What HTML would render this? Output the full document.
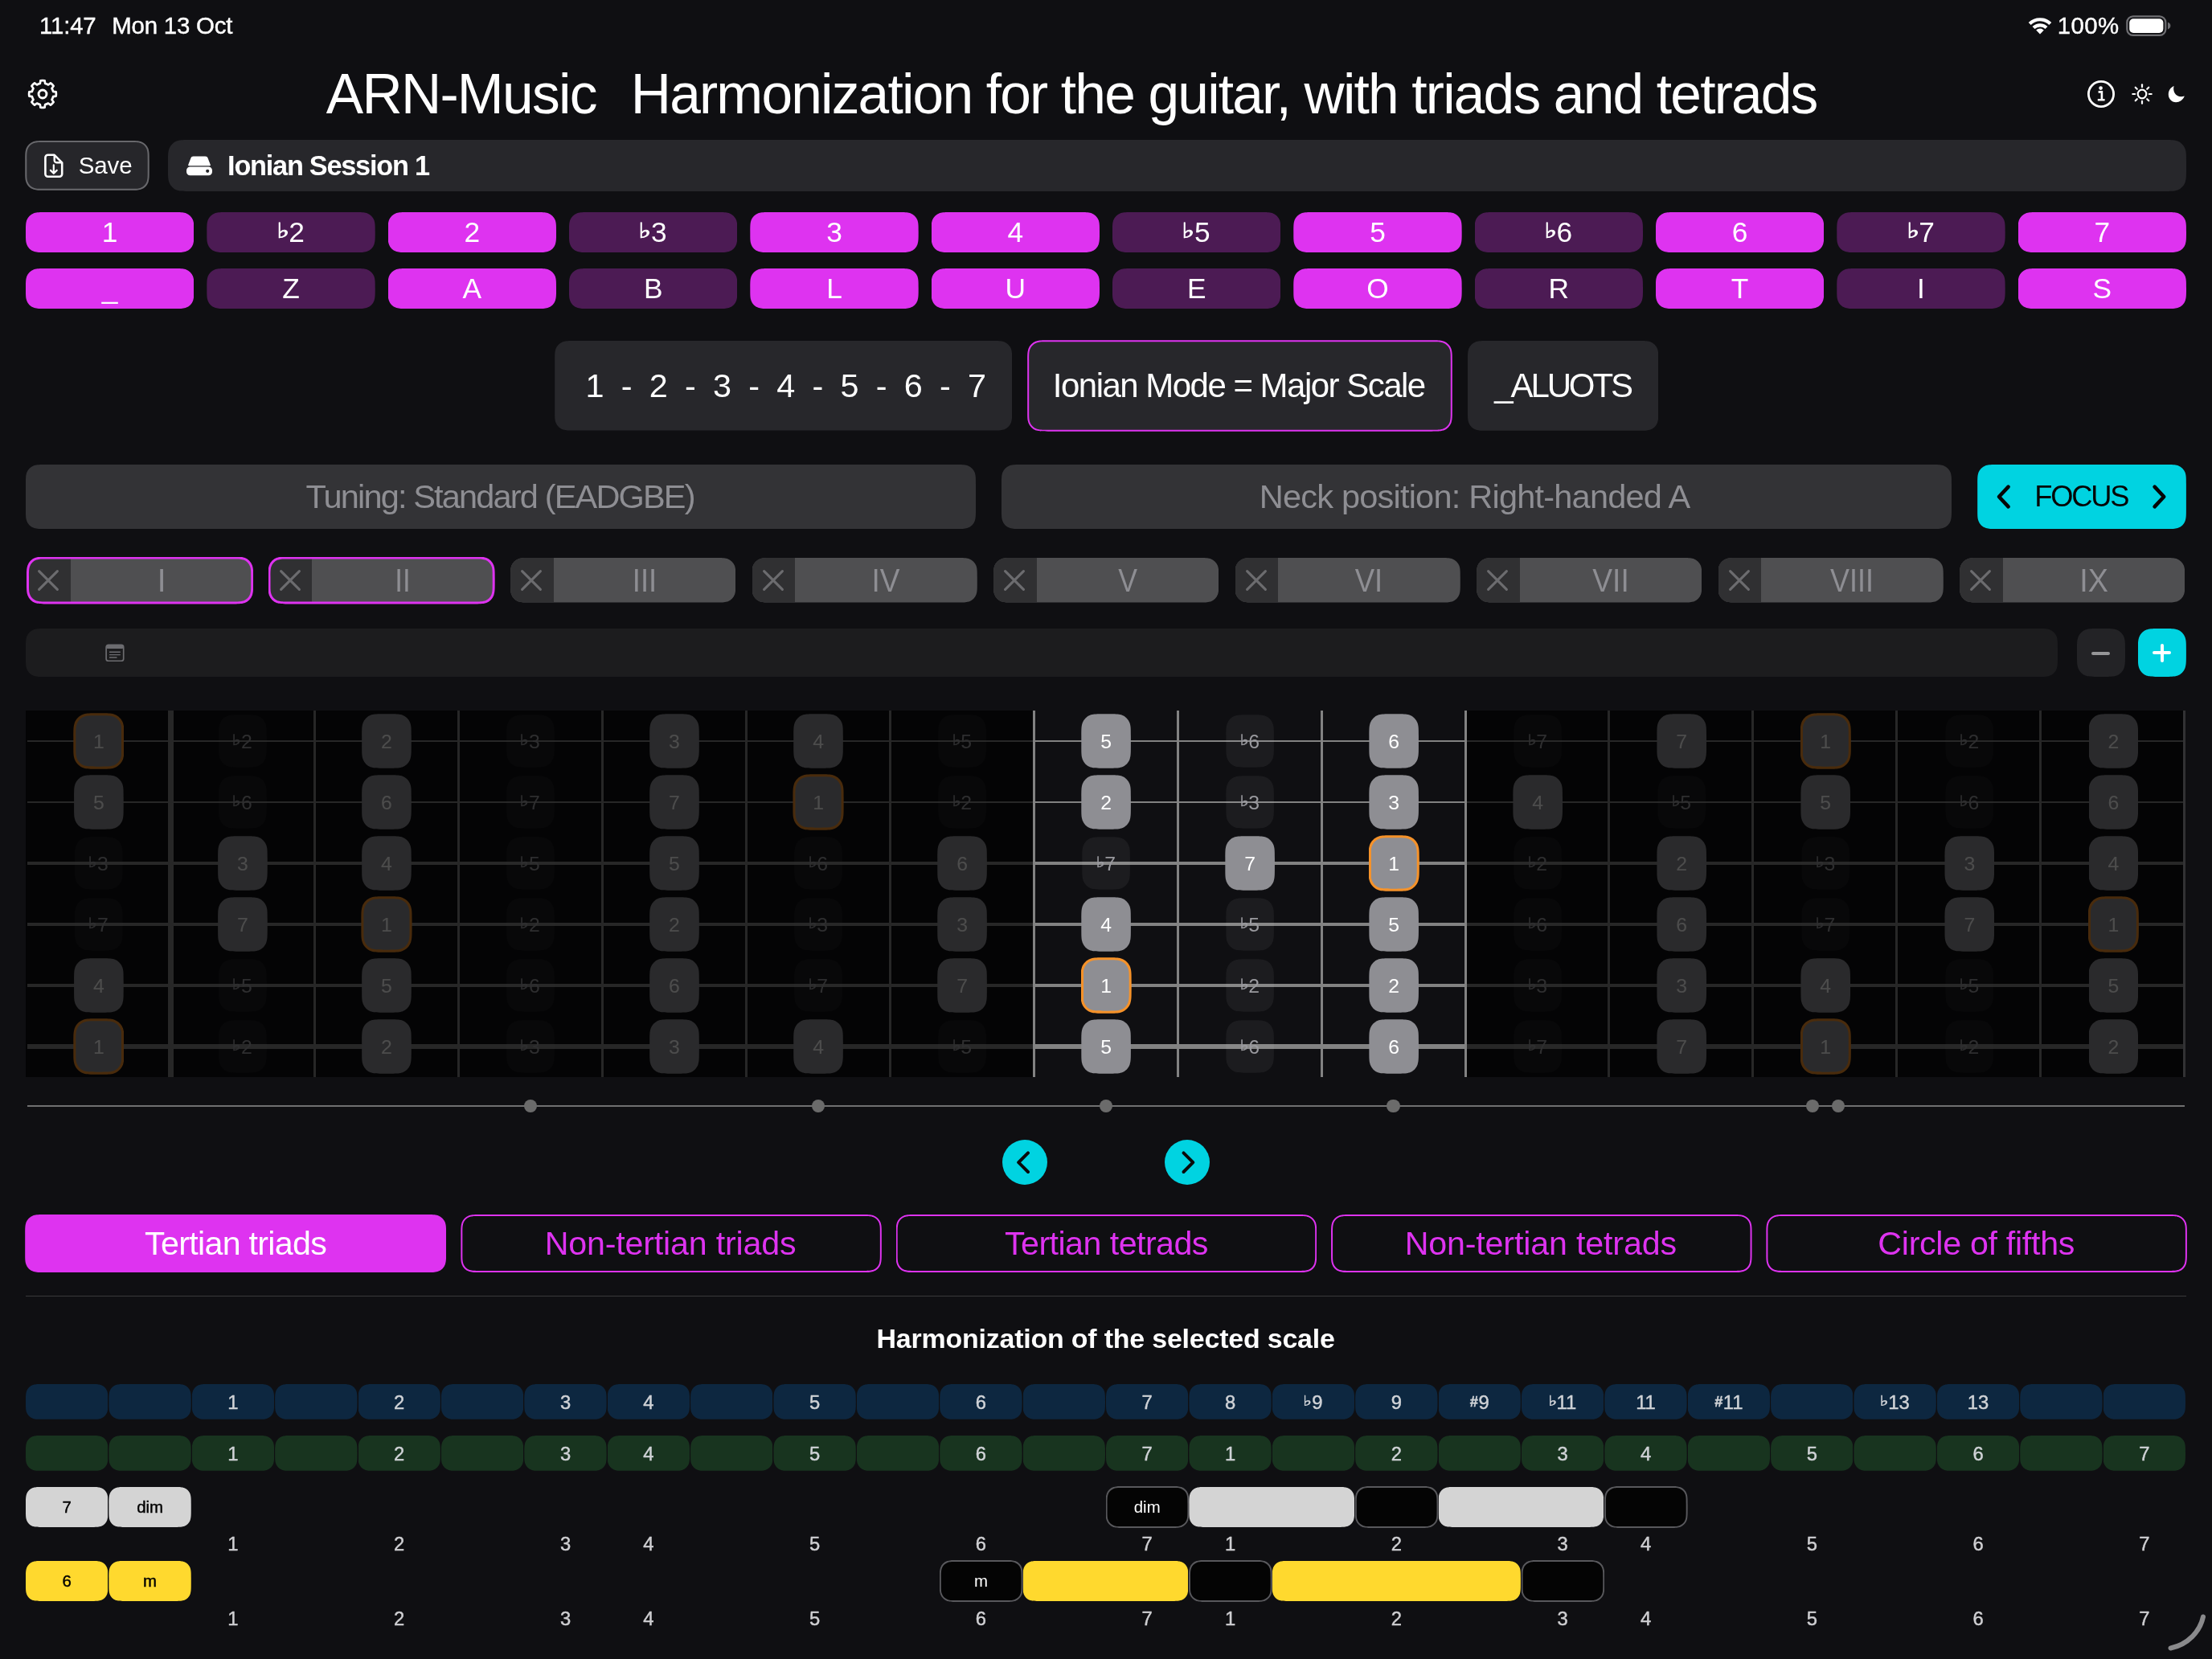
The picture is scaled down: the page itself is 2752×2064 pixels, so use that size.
<!DOCTYPE html>
<html lang="en"><head><meta charset="utf-8"><title>ARN-Music Harmonization for the guitar</title>
<style>
html,body{margin:0;padding:0;background:#0f0f12;}
body{width:2752px;height:2064px;position:relative;overflow:hidden;font-family:"Liberation Sans", "DejaVu Sans", sans-serif;}
div,svg,.t,button{position:absolute;box-sizing:border-box;}
button{padding:0;margin:0;border:0;font:inherit;}
.t{line-height:0;white-space:pre;margin:0;font-weight:400;}
.n1{width:61.6px;height:67.6px;background:#8e8e93;clip-path:path('M27.52 0.00 L34.08 0.00 C42.01 0.00 45.97 0.00 49.54 1.18 L50.23 1.35 C54.89 3.04 58.56 6.71 60.25 11.37 L60.42 12.06 C61.60 15.63 61.60 19.59 61.60 27.52 L61.60 40.08 C61.60 48.01 61.60 51.97 60.42 55.54 L60.25 56.23 C58.56 60.89 54.89 64.56 50.23 66.25 L49.54 66.42 C45.97 67.60 42.01 67.60 34.08 67.60 L27.52 67.60 C19.59 67.60 15.63 67.60 12.06 66.42 L11.37 66.25 C6.71 64.56 3.04 60.89 1.35 56.23 L1.18 55.54 C0.00 51.97 0.00 48.01 0.00 40.08 L0.00 27.52 C0.00 19.59 0.00 15.63 1.18 12.06 L1.35 11.37 C3.04 6.71 6.71 3.04 11.37 1.35 L12.06 1.18 C15.63 0.00 19.59 0.00 27.52 0.00 Z');}
.n0{width:63.2px;height:69.4px;background:#f5922a;clip-path:path('M29.35 0.00 L33.85 0.00 C42.30 0.00 46.53 0.00 50.34 1.26 L51.08 1.44 C56.04 3.25 59.95 7.16 61.76 12.12 L61.94 12.86 C63.20 16.67 63.20 20.90 63.20 29.35 L63.20 40.05 C63.20 48.50 63.20 52.73 61.94 56.54 L61.76 57.28 C59.95 62.24 56.04 66.15 51.08 67.96 L50.34 68.14 C46.53 69.40 42.30 69.40 33.85 69.40 L29.35 69.40 C20.90 69.40 16.67 69.40 12.86 68.14 L12.12 67.96 C7.16 66.15 3.25 62.24 1.44 57.28 L1.26 56.54 C0.00 52.73 0.00 48.50 0.00 40.05 L0.00 29.35 C0.00 20.90 0.00 16.67 1.26 12.86 L1.44 12.12 C3.25 7.16 7.16 3.25 12.12 1.44 L12.86 1.26 C16.67 0.00 20.90 0.00 29.35 0.00 Z');}
.n0 i{position:absolute;left:3px;top:3px;width:57.2px;height:63.4px;background:#8e8e93;clip-path:path('M25.38 0.00 L31.82 0.00 C39.13 0.00 42.78 0.00 46.08 1.09 L46.72 1.24 C51.01 2.81 54.39 6.19 55.96 10.48 L56.11 11.12 C57.20 14.42 57.20 18.07 57.20 25.38 L57.20 38.02 C57.20 45.33 57.20 48.98 56.11 52.28 L55.96 52.92 C54.39 57.21 51.01 60.59 46.72 62.16 L46.08 62.31 C42.78 63.40 39.13 63.40 31.82 63.40 L25.38 63.40 C18.07 63.40 14.42 63.40 11.12 62.31 L10.48 62.16 C6.19 60.59 2.81 57.21 1.24 52.92 L1.09 52.28 C0.00 48.98 0.00 45.33 0.00 38.02 L0.00 25.38 C0.00 18.07 0.00 14.42 1.09 11.12 L1.24 10.48 C2.81 6.19 6.19 2.81 10.48 1.24 L11.12 1.09 C14.42 0.00 18.07 0.00 25.38 0.00 Z');}
.n2{width:59.6px;height:65.4px;background:rgba(255,255,255,0.055);clip-path:path('M26.90 0.00 L32.70 0.00 C40.44 0.00 44.32 0.00 47.81 1.15 L48.49 1.32 C53.04 2.98 56.62 6.56 58.28 11.11 L58.45 11.79 C59.60 15.28 59.60 19.16 59.60 26.90 L59.60 38.50 C59.60 46.24 59.60 50.12 58.45 53.61 L58.28 54.29 C56.62 58.84 53.04 62.42 48.49 64.08 L47.81 64.25 C44.32 65.40 40.44 65.40 32.70 65.40 L26.90 65.40 C19.16 65.40 15.28 65.40 11.79 64.25 L11.11 64.08 C6.56 62.42 2.98 58.84 1.32 54.29 L1.15 53.61 C0.00 50.12 0.00 46.24 0.00 38.50 L0.00 26.90 C0.00 19.16 0.00 15.28 1.15 11.79 L1.32 11.11 C2.98 6.56 6.56 2.98 11.11 1.32 L11.79 1.15 C15.28 0.00 19.16 0.00 26.90 0.00 Z');}
.fl{font-family:"DejaVu Sans",sans-serif;display:inline-block;position:relative;transform-origin:50% 50%;}
#app{left:0;top:0;width:2752px;height:2064px;will-change:transform;}
</style></head><body><div id="app">
<header>
<span class="t" style="top:31.81px;font-size:29.4px;color:#fff;letter-spacing:-0.164px;-webkit-text-stroke:0.4px #fff;left:48.96px;">11:47</span>
<span class="t" style="top:31.81px;font-size:29.4px;color:#fff;letter-spacing:-0.199px;-webkit-text-stroke:0.4px #fff;left:139.29px;">Mon 13 Oct</span>
<span class="t" style="top:31.81px;font-size:29.4px;color:#fff;letter-spacing:0.372px;-webkit-text-stroke:0.4px #fff;left:2559.76px;">100%</span>
<svg style="left:2522.00px;top:20.00px;" width="32" height="24" viewBox="0 0 32 24"><g fill="none" stroke="#fff" stroke-linecap="butt">
<path d="M3.2 9.6 A18 18 0 0 1 28.8 9.6" stroke-width="4.2"/>
<path d="M8 14.6 A11.3 11.3 0 0 1 24 14.6" stroke-width="4.2"/></g>
<path d="M16 22.4 L11.2 17.6 A6.8 6.8 0 0 1 20.8 17.6 Z" fill="#fff"/></svg>
<svg style="left:2644.00px;top:18.00px;" width="58" height="28" viewBox="0 0 58 28"><rect x="2.3" y="2.3" width="48" height="23.6" rx="7.5" fill="none" stroke="#6f6f73" stroke-width="2.2"/>
<rect x="5.2" y="5.2" width="42.2" height="17.8" rx="5" fill="#fff"/>
<path d="M53 9.8 C55.6 10.6 56.4 12.2 56.4 14.1 C56.4 16 55.6 17.6 53 18.4 Z" fill="#6f6f73"/></svg>
</header>
<svg style="left:32.00px;top:96.10px;" width="42" height="42" viewBox="0 0 42 42"><path d="M17.85 7.87 L18.41 4.30 A16.9 16.9 0 0 1 23.59 4.30 L24.15 7.87 A13.5 13.5 0 0 1 28.05 9.49 L30.98 7.36 A16.9 16.9 0 0 1 34.64 11.02 L32.51 13.95 A13.5 13.5 0 0 1 34.13 17.85 L37.70 18.41 A16.9 16.9 0 0 1 37.70 23.59 L34.13 24.15 A13.5 13.5 0 0 1 32.51 28.05 L34.64 30.98 A16.9 16.9 0 0 1 30.98 34.64 L28.05 32.51 A13.5 13.5 0 0 1 24.15 34.13 L23.59 37.70 A16.9 16.9 0 0 1 18.41 37.70 L17.85 34.13 A13.5 13.5 0 0 1 13.95 32.51 L11.02 34.64 A16.9 16.9 0 0 1 7.36 30.98 L9.49 28.05 A13.5 13.5 0 0 1 7.87 24.15 L4.30 23.59 A16.9 16.9 0 0 1 4.30 18.41 L7.87 17.85 A13.5 13.5 0 0 1 9.49 13.95 L7.36 11.02 A16.9 16.9 0 0 1 11.02 7.36 L13.95 9.49 A13.5 13.5 0 0 1 17.85 7.87 Z" fill="none" stroke="#fff" stroke-width="2.7" stroke-linejoin="round"/><circle cx="21" cy="21" r="4.95" fill="none" stroke="#fff" stroke-width="2.9"/></svg>
<h1 class="t" style="top:116.82px;font-size:69.5px;color:#fff;letter-spacing:-1.701px;left:405.76px;">ARN-Music</h1>
<h1 class="t" style="top:116.82px;font-size:69.5px;color:#fff;letter-spacing:-1.821px;left:784.80px;">Harmonization for the guitar, with triads and tetrads</h1>
<svg style="left:2594.00px;top:97.00px;" width="40" height="40" viewBox="0 0 40 40"><circle cx="20" cy="20" r="15.6" fill="none" stroke="#fff" stroke-width="2.8"/>
<circle cx="19.6" cy="12.6" r="2.3" fill="#fff"/>
<path d="M16.6 17.4 H20.9 V27 M15.8 27.2 H24.6" fill="none" stroke="#fff" stroke-width="2.6"/></svg>
<svg style="left:2649.50px;top:102.20px;" width="30" height="30" viewBox="0 0 30 30"><circle cx="15" cy="15" r="5.3" fill="none" stroke="#fff" stroke-width="2.2"/><g stroke="#fff" stroke-width="2.2" stroke-linecap="round"><line x1="23.80" y1="15.00" x2="26.70" y2="15.00"/><line x1="21.22" y1="21.22" x2="23.27" y2="23.27"/><line x1="15.00" y1="23.80" x2="15.00" y2="26.70"/><line x1="8.78" y1="21.22" x2="6.73" y2="23.27"/><line x1="6.20" y1="15.00" x2="3.30" y2="15.00"/><line x1="8.78" y1="8.78" x2="6.73" y2="6.73"/><line x1="15.00" y1="6.20" x2="15.00" y2="3.30"/><line x1="21.22" y1="8.78" x2="23.27" y2="6.73"/></g></svg>
<svg style="left:2696.00px;top:105.00px;" width="24" height="24" viewBox="0 0 24 24"><path d="M8.6 2 C6.6 9.5 11.6 17.5 21.8 14.6 C20 19.5 15.6 22.3 11.2 22.3 C5.6 22.3 1.8 17.8 1.8 12.6 C1.8 7.6 4.6 3.6 8.6 2 Z" fill="#fff"/></svg>
<button style="left:31.30px;top:175.00px;width:154.40px;height:61.80px;background:#26262a;clip-path:path('M24.46 0.00 L129.94 0.00 C136.98 0.00 140.51 0.00 143.68 1.05 L144.30 1.20 C148.43 2.70 151.70 5.97 153.20 10.10 L153.35 10.72 C154.40 13.89 154.40 17.42 154.40 24.46 L154.40 37.34 C154.40 44.38 154.40 47.91 153.35 51.08 L153.20 51.70 C151.70 55.83 148.43 59.10 144.30 60.60 L143.68 60.75 C140.51 61.80 136.98 61.80 129.94 61.80 L24.46 61.80 C17.42 61.80 13.89 61.80 10.72 60.75 L10.10 60.60 C5.97 59.10 2.70 55.83 1.20 51.70 L1.05 51.08 C0.00 47.91 0.00 44.38 0.00 37.34 L0.00 24.46 C0.00 17.42 0.00 13.89 1.05 10.72 L1.20 10.10 C2.70 5.97 5.97 2.70 10.10 1.20 L10.72 1.05 C13.89 0.00 17.42 0.00 24.46 0.00 Z');"></button>
<div style="left:31.30px;top:175.00px;width:154.40px;height:61.80px;background:#68686c;clip-path:path(evenodd,'M24.46 0.00 L129.94 0.00 C136.98 0.00 140.51 0.00 143.68 1.05 L144.30 1.20 C148.43 2.70 151.70 5.97 153.20 10.10 L153.35 10.72 C154.40 13.89 154.40 17.42 154.40 24.46 L154.40 37.34 C154.40 44.38 154.40 47.91 153.35 51.08 L153.20 51.70 C151.70 55.83 148.43 59.10 144.30 60.60 L143.68 60.75 C140.51 61.80 136.98 61.80 129.94 61.80 L24.46 61.80 C17.42 61.80 13.89 61.80 10.72 60.75 L10.10 60.60 C5.97 59.10 2.70 55.83 1.20 51.70 L1.05 51.08 C0.00 47.91 0.00 44.38 0.00 37.34 L0.00 24.46 C0.00 17.42 0.00 13.89 1.05 10.72 L1.20 10.10 C2.70 5.97 5.97 2.70 10.10 1.20 L10.72 1.05 C13.89 0.00 17.42 0.00 24.46 0.00 Z M23.40 2.00 L131.00 2.00 C137.16 2.00 140.24 2.00 143.02 2.92 L143.56 3.05 C147.18 4.37 150.03 7.22 151.35 10.84 L151.48 11.38 C152.40 14.16 152.40 17.24 152.40 23.40 L152.40 38.40 C152.40 44.56 152.40 47.64 151.48 50.42 L151.35 50.96 C150.03 54.58 147.18 57.43 143.56 58.75 L143.02 58.88 C140.24 59.80 137.16 59.80 131.00 59.80 L23.40 59.80 C17.24 59.80 14.16 59.80 11.38 58.88 L10.84 58.75 C7.22 57.43 4.37 54.58 3.05 50.96 L2.92 50.42 C2.00 47.64 2.00 44.56 2.00 38.40 L2.00 23.40 C2.00 17.24 2.00 14.16 2.92 11.38 L3.05 10.84 C4.37 7.22 7.22 4.37 10.84 3.05 L11.38 2.92 C14.16 2.00 17.24 2.00 23.40 2.00 Z');"></div>
<svg style="left:50.00px;top:186.00px;" width="34" height="40" viewBox="0 0 34 40"><path d="M17.7 6.8 H9.6 A3.2 3.2 0 0 0 6.4 10 V30.6 A3.2 3.2 0 0 0 9.6 33.8 H24 A3.2 3.2 0 0 0 27.2 30.6 V16.3 Z" fill="none" stroke="#fff" stroke-width="2.6" stroke-linejoin="round"/>
<path d="M17.7 6.8 V13.6 A2.7 2.7 0 0 0 20.4 16.3 H27.2" fill="none" stroke="#fff" stroke-width="2.4" stroke-linejoin="round"/>
<path d="M16.8 19.3 V29.6 M12.9 25.9 L16.8 29.8 L20.7 25.9" fill="none" stroke="#fff" stroke-width="2.2" stroke-linecap="round" stroke-linejoin="round"/></svg>
<span class="t" style="top:206.28px;font-size:29.5px;color:#fff;letter-spacing:-0.100px;left:97.66px;">Save</span>
<div style="left:209.00px;top:174.00px;width:2511.00px;height:64.00px;background:#27272b;clip-path:path('M27.52 0.00 L2483.48 0.00 C2491.41 0.00 2495.37 0.00 2498.94 1.18 L2499.63 1.35 C2504.29 3.04 2507.96 6.71 2509.65 11.37 L2509.82 12.06 C2511.00 15.63 2511.00 19.59 2511.00 27.52 L2511.00 36.48 C2511.00 44.41 2511.00 48.37 2509.82 51.94 L2509.65 52.63 C2507.96 57.29 2504.29 60.96 2499.63 62.65 L2498.94 62.82 C2495.37 64.00 2491.41 64.00 2483.48 64.00 L27.52 64.00 C19.59 64.00 15.63 64.00 12.06 62.82 L11.37 62.65 C6.71 60.96 3.04 57.29 1.35 52.63 L1.18 51.94 C0.00 48.37 0.00 44.41 0.00 36.48 L0.00 27.52 C0.00 19.59 0.00 15.63 1.18 12.06 L1.35 11.37 C3.04 6.71 6.71 3.04 11.37 1.35 L12.06 1.18 C15.63 0.00 19.59 0.00 27.52 0.00 Z');"></div>
<svg style="left:230.00px;top:192.00px;" width="36" height="28" viewBox="0 0 36 28"><path d="M10.6 2.4 H25.4 C27.2 2.4 28 3.2 28.6 4.8 L31.8 13 C32 13.7 31.7 14.2 31 14.2 H5 C4.3 14.2 4 13.7 4.2 13 L7.4 4.8 C8 3.2 8.8 2.4 10.6 2.4 Z" fill="#fff"/>
<path d="M6.6 15.5 H29.4 A4.6 4.6 0 0 1 34 20.1 V21.7 A4.6 4.6 0 0 1 29.4 26.3 H6.6 A4.6 4.6 0 0 1 2 21.7 V20.1 A4.6 4.6 0 0 1 6.6 15.5 Z M28.2 18.7 A2.1 2.1 0 1 0 28.2 22.9 A2.1 2.1 0 1 0 28.2 18.7 Z" fill="#fff" fill-rule="evenodd"/></svg>
<span class="t" style="top:206.12px;font-size:34.3px;color:#fff;font-weight:700;letter-spacing:-1.253px;left:283.11px;">Ionian Session 1</span>
<section>
<button style="left:32.00px;top:264.00px;width:209.40px;height:50.00px;background:#de33f0;clip-path:path('M24.46 0.00 L184.94 0.00 C191.98 0.00 195.51 0.00 198.68 1.05 L199.30 1.20 C203.43 2.70 206.70 5.97 208.20 10.10 L208.35 10.72 C209.40 13.89 209.40 17.42 209.40 24.46 L209.40 25.54 C209.40 32.58 209.40 36.11 208.35 39.28 L208.20 39.90 C206.70 44.03 203.43 47.30 199.30 48.80 L198.68 48.95 C195.51 50.00 191.98 50.00 184.94 50.00 L24.46 50.00 C17.42 50.00 13.89 50.00 10.72 48.95 L10.10 48.80 C5.97 47.30 2.70 44.03 1.20 39.90 L1.05 39.28 C0.00 36.11 0.00 32.58 0.00 25.54 L0.00 24.46 C0.00 17.42 0.00 13.89 1.05 10.72 L1.20 10.10 C2.70 5.97 5.97 2.70 10.10 1.20 L10.72 1.05 C13.89 0.00 17.42 0.00 24.46 0.00 Z');"></button>
<span class="t" style="top:289.07px;font-size:35.3px;color:#fff;left:136.70px;transform:translateX(-50%);">1</span>
<button style="left:32.00px;top:334.00px;width:209.40px;height:50.00px;background:#de33f0;clip-path:path('M24.46 0.00 L184.94 0.00 C191.98 0.00 195.51 0.00 198.68 1.05 L199.30 1.20 C203.43 2.70 206.70 5.97 208.20 10.10 L208.35 10.72 C209.40 13.89 209.40 17.42 209.40 24.46 L209.40 25.54 C209.40 32.58 209.40 36.11 208.35 39.28 L208.20 39.90 C206.70 44.03 203.43 47.30 199.30 48.80 L198.68 48.95 C195.51 50.00 191.98 50.00 184.94 50.00 L24.46 50.00 C17.42 50.00 13.89 50.00 10.72 48.95 L10.10 48.80 C5.97 47.30 2.70 44.03 1.20 39.90 L1.05 39.28 C0.00 36.11 0.00 32.58 0.00 25.54 L0.00 24.46 C0.00 17.42 0.00 13.89 1.05 10.72 L1.20 10.10 C2.70 5.97 5.97 2.70 10.10 1.20 L10.72 1.05 C13.89 0.00 17.42 0.00 24.46 0.00 Z');"></button>
<span class="t" style="top:358.77px;font-size:35.3px;color:#fff;left:136.70px;transform:translateX(-50%);">_</span>
<button style="left:257.33px;top:264.00px;width:209.40px;height:50.00px;background:#4c1b54;clip-path:path('M24.46 0.00 L184.94 0.00 C191.98 0.00 195.51 0.00 198.68 1.05 L199.30 1.20 C203.43 2.70 206.70 5.97 208.20 10.10 L208.35 10.72 C209.40 13.89 209.40 17.42 209.40 24.46 L209.40 25.54 C209.40 32.58 209.40 36.11 208.35 39.28 L208.20 39.90 C206.70 44.03 203.43 47.30 199.30 48.80 L198.68 48.95 C195.51 50.00 191.98 50.00 184.94 50.00 L24.46 50.00 C17.42 50.00 13.89 50.00 10.72 48.95 L10.10 48.80 C5.97 47.30 2.70 44.03 1.20 39.90 L1.05 39.28 C0.00 36.11 0.00 32.58 0.00 25.54 L0.00 24.46 C0.00 17.42 0.00 13.89 1.05 10.72 L1.20 10.10 C2.70 5.97 5.97 2.70 10.10 1.20 L10.72 1.05 C13.89 0.00 17.42 0.00 24.46 0.00 Z');"></button>
<span class="t" style="top:289.07px;font-size:35.3px;color:#fff;left:362.03px;transform:translateX(-50%);"><span class="fl" style="font-size:26.1px;top:-4.59px;transform:scaleX(1.3);-webkit-text-stroke:0.78px #fff;margin:0 1.24px 0 0.71px">♭</span>2</span>
<button style="left:257.33px;top:334.00px;width:209.40px;height:50.00px;background:#4c1b54;clip-path:path('M24.46 0.00 L184.94 0.00 C191.98 0.00 195.51 0.00 198.68 1.05 L199.30 1.20 C203.43 2.70 206.70 5.97 208.20 10.10 L208.35 10.72 C209.40 13.89 209.40 17.42 209.40 24.46 L209.40 25.54 C209.40 32.58 209.40 36.11 208.35 39.28 L208.20 39.90 C206.70 44.03 203.43 47.30 199.30 48.80 L198.68 48.95 C195.51 50.00 191.98 50.00 184.94 50.00 L24.46 50.00 C17.42 50.00 13.89 50.00 10.72 48.95 L10.10 48.80 C5.97 47.30 2.70 44.03 1.20 39.90 L1.05 39.28 C0.00 36.11 0.00 32.58 0.00 25.54 L0.00 24.46 C0.00 17.42 0.00 13.89 1.05 10.72 L1.20 10.10 C2.70 5.97 5.97 2.70 10.10 1.20 L10.72 1.05 C13.89 0.00 17.42 0.00 24.46 0.00 Z');"></button>
<span class="t" style="top:358.77px;font-size:35.3px;color:#fff;left:362.03px;transform:translateX(-50%);">Z</span>
<button style="left:482.65px;top:264.00px;width:209.40px;height:50.00px;background:#de33f0;clip-path:path('M24.46 0.00 L184.94 0.00 C191.98 0.00 195.51 0.00 198.68 1.05 L199.30 1.20 C203.43 2.70 206.70 5.97 208.20 10.10 L208.35 10.72 C209.40 13.89 209.40 17.42 209.40 24.46 L209.40 25.54 C209.40 32.58 209.40 36.11 208.35 39.28 L208.20 39.90 C206.70 44.03 203.43 47.30 199.30 48.80 L198.68 48.95 C195.51 50.00 191.98 50.00 184.94 50.00 L24.46 50.00 C17.42 50.00 13.89 50.00 10.72 48.95 L10.10 48.80 C5.97 47.30 2.70 44.03 1.20 39.90 L1.05 39.28 C0.00 36.11 0.00 32.58 0.00 25.54 L0.00 24.46 C0.00 17.42 0.00 13.89 1.05 10.72 L1.20 10.10 C2.70 5.97 5.97 2.70 10.10 1.20 L10.72 1.05 C13.89 0.00 17.42 0.00 24.46 0.00 Z');"></button>
<span class="t" style="top:289.07px;font-size:35.3px;color:#fff;left:587.35px;transform:translateX(-50%);">2</span>
<button style="left:482.65px;top:334.00px;width:209.40px;height:50.00px;background:#de33f0;clip-path:path('M24.46 0.00 L184.94 0.00 C191.98 0.00 195.51 0.00 198.68 1.05 L199.30 1.20 C203.43 2.70 206.70 5.97 208.20 10.10 L208.35 10.72 C209.40 13.89 209.40 17.42 209.40 24.46 L209.40 25.54 C209.40 32.58 209.40 36.11 208.35 39.28 L208.20 39.90 C206.70 44.03 203.43 47.30 199.30 48.80 L198.68 48.95 C195.51 50.00 191.98 50.00 184.94 50.00 L24.46 50.00 C17.42 50.00 13.89 50.00 10.72 48.95 L10.10 48.80 C5.97 47.30 2.70 44.03 1.20 39.90 L1.05 39.28 C0.00 36.11 0.00 32.58 0.00 25.54 L0.00 24.46 C0.00 17.42 0.00 13.89 1.05 10.72 L1.20 10.10 C2.70 5.97 5.97 2.70 10.10 1.20 L10.72 1.05 C13.89 0.00 17.42 0.00 24.46 0.00 Z');"></button>
<span class="t" style="top:358.77px;font-size:35.3px;color:#fff;left:587.35px;transform:translateX(-50%);">A</span>
<button style="left:707.98px;top:264.00px;width:209.40px;height:50.00px;background:#4c1b54;clip-path:path('M24.46 0.00 L184.94 0.00 C191.98 0.00 195.51 0.00 198.68 1.05 L199.30 1.20 C203.43 2.70 206.70 5.97 208.20 10.10 L208.35 10.72 C209.40 13.89 209.40 17.42 209.40 24.46 L209.40 25.54 C209.40 32.58 209.40 36.11 208.35 39.28 L208.20 39.90 C206.70 44.03 203.43 47.30 199.30 48.80 L198.68 48.95 C195.51 50.00 191.98 50.00 184.94 50.00 L24.46 50.00 C17.42 50.00 13.89 50.00 10.72 48.95 L10.10 48.80 C5.97 47.30 2.70 44.03 1.20 39.90 L1.05 39.28 C0.00 36.11 0.00 32.58 0.00 25.54 L0.00 24.46 C0.00 17.42 0.00 13.89 1.05 10.72 L1.20 10.10 C2.70 5.97 5.97 2.70 10.10 1.20 L10.72 1.05 C13.89 0.00 17.42 0.00 24.46 0.00 Z');"></button>
<span class="t" style="top:289.07px;font-size:35.3px;color:#fff;left:812.68px;transform:translateX(-50%);"><span class="fl" style="font-size:26.1px;top:-4.59px;transform:scaleX(1.3);-webkit-text-stroke:0.78px #fff;margin:0 1.24px 0 0.71px">♭</span>3</span>
<button style="left:707.98px;top:334.00px;width:209.40px;height:50.00px;background:#4c1b54;clip-path:path('M24.46 0.00 L184.94 0.00 C191.98 0.00 195.51 0.00 198.68 1.05 L199.30 1.20 C203.43 2.70 206.70 5.97 208.20 10.10 L208.35 10.72 C209.40 13.89 209.40 17.42 209.40 24.46 L209.40 25.54 C209.40 32.58 209.40 36.11 208.35 39.28 L208.20 39.90 C206.70 44.03 203.43 47.30 199.30 48.80 L198.68 48.95 C195.51 50.00 191.98 50.00 184.94 50.00 L24.46 50.00 C17.42 50.00 13.89 50.00 10.72 48.95 L10.10 48.80 C5.97 47.30 2.70 44.03 1.20 39.90 L1.05 39.28 C0.00 36.11 0.00 32.58 0.00 25.54 L0.00 24.46 C0.00 17.42 0.00 13.89 1.05 10.72 L1.20 10.10 C2.70 5.97 5.97 2.70 10.10 1.20 L10.72 1.05 C13.89 0.00 17.42 0.00 24.46 0.00 Z');"></button>
<span class="t" style="top:358.77px;font-size:35.3px;color:#fff;left:812.68px;transform:translateX(-50%);">B</span>
<button style="left:933.31px;top:264.00px;width:209.40px;height:50.00px;background:#de33f0;clip-path:path('M24.46 0.00 L184.94 0.00 C191.98 0.00 195.51 0.00 198.68 1.05 L199.30 1.20 C203.43 2.70 206.70 5.97 208.20 10.10 L208.35 10.72 C209.40 13.89 209.40 17.42 209.40 24.46 L209.40 25.54 C209.40 32.58 209.40 36.11 208.35 39.28 L208.20 39.90 C206.70 44.03 203.43 47.30 199.30 48.80 L198.68 48.95 C195.51 50.00 191.98 50.00 184.94 50.00 L24.46 50.00 C17.42 50.00 13.89 50.00 10.72 48.95 L10.10 48.80 C5.97 47.30 2.70 44.03 1.20 39.90 L1.05 39.28 C0.00 36.11 0.00 32.58 0.00 25.54 L0.00 24.46 C0.00 17.42 0.00 13.89 1.05 10.72 L1.20 10.10 C2.70 5.97 5.97 2.70 10.10 1.20 L10.72 1.05 C13.89 0.00 17.42 0.00 24.46 0.00 Z');"></button>
<span class="t" style="top:289.07px;font-size:35.3px;color:#fff;left:1038.01px;transform:translateX(-50%);">3</span>
<button style="left:933.31px;top:334.00px;width:209.40px;height:50.00px;background:#de33f0;clip-path:path('M24.46 0.00 L184.94 0.00 C191.98 0.00 195.51 0.00 198.68 1.05 L199.30 1.20 C203.43 2.70 206.70 5.97 208.20 10.10 L208.35 10.72 C209.40 13.89 209.40 17.42 209.40 24.46 L209.40 25.54 C209.40 32.58 209.40 36.11 208.35 39.28 L208.20 39.90 C206.70 44.03 203.43 47.30 199.30 48.80 L198.68 48.95 C195.51 50.00 191.98 50.00 184.94 50.00 L24.46 50.00 C17.42 50.00 13.89 50.00 10.72 48.95 L10.10 48.80 C5.97 47.30 2.70 44.03 1.20 39.90 L1.05 39.28 C0.00 36.11 0.00 32.58 0.00 25.54 L0.00 24.46 C0.00 17.42 0.00 13.89 1.05 10.72 L1.20 10.10 C2.70 5.97 5.97 2.70 10.10 1.20 L10.72 1.05 C13.89 0.00 17.42 0.00 24.46 0.00 Z');"></button>
<span class="t" style="top:358.77px;font-size:35.3px;color:#fff;left:1038.01px;transform:translateX(-50%);">L</span>
<button style="left:1158.64px;top:264.00px;width:209.40px;height:50.00px;background:#de33f0;clip-path:path('M24.46 0.00 L184.94 0.00 C191.98 0.00 195.51 0.00 198.68 1.05 L199.30 1.20 C203.43 2.70 206.70 5.97 208.20 10.10 L208.35 10.72 C209.40 13.89 209.40 17.42 209.40 24.46 L209.40 25.54 C209.40 32.58 209.40 36.11 208.35 39.28 L208.20 39.90 C206.70 44.03 203.43 47.30 199.30 48.80 L198.68 48.95 C195.51 50.00 191.98 50.00 184.94 50.00 L24.46 50.00 C17.42 50.00 13.89 50.00 10.72 48.95 L10.10 48.80 C5.97 47.30 2.70 44.03 1.20 39.90 L1.05 39.28 C0.00 36.11 0.00 32.58 0.00 25.54 L0.00 24.46 C0.00 17.42 0.00 13.89 1.05 10.72 L1.20 10.10 C2.70 5.97 5.97 2.70 10.10 1.20 L10.72 1.05 C13.89 0.00 17.42 0.00 24.46 0.00 Z');"></button>
<span class="t" style="top:289.07px;font-size:35.3px;color:#fff;left:1263.34px;transform:translateX(-50%);">4</span>
<button style="left:1158.64px;top:334.00px;width:209.40px;height:50.00px;background:#de33f0;clip-path:path('M24.46 0.00 L184.94 0.00 C191.98 0.00 195.51 0.00 198.68 1.05 L199.30 1.20 C203.43 2.70 206.70 5.97 208.20 10.10 L208.35 10.72 C209.40 13.89 209.40 17.42 209.40 24.46 L209.40 25.54 C209.40 32.58 209.40 36.11 208.35 39.28 L208.20 39.90 C206.70 44.03 203.43 47.30 199.30 48.80 L198.68 48.95 C195.51 50.00 191.98 50.00 184.94 50.00 L24.46 50.00 C17.42 50.00 13.89 50.00 10.72 48.95 L10.10 48.80 C5.97 47.30 2.70 44.03 1.20 39.90 L1.05 39.28 C0.00 36.11 0.00 32.58 0.00 25.54 L0.00 24.46 C0.00 17.42 0.00 13.89 1.05 10.72 L1.20 10.10 C2.70 5.97 5.97 2.70 10.10 1.20 L10.72 1.05 C13.89 0.00 17.42 0.00 24.46 0.00 Z');"></button>
<span class="t" style="top:358.77px;font-size:35.3px;color:#fff;left:1263.34px;transform:translateX(-50%);">U</span>
<button style="left:1383.96px;top:264.00px;width:209.40px;height:50.00px;background:#4c1b54;clip-path:path('M24.46 0.00 L184.94 0.00 C191.98 0.00 195.51 0.00 198.68 1.05 L199.30 1.20 C203.43 2.70 206.70 5.97 208.20 10.10 L208.35 10.72 C209.40 13.89 209.40 17.42 209.40 24.46 L209.40 25.54 C209.40 32.58 209.40 36.11 208.35 39.28 L208.20 39.90 C206.70 44.03 203.43 47.30 199.30 48.80 L198.68 48.95 C195.51 50.00 191.98 50.00 184.94 50.00 L24.46 50.00 C17.42 50.00 13.89 50.00 10.72 48.95 L10.10 48.80 C5.97 47.30 2.70 44.03 1.20 39.90 L1.05 39.28 C0.00 36.11 0.00 32.58 0.00 25.54 L0.00 24.46 C0.00 17.42 0.00 13.89 1.05 10.72 L1.20 10.10 C2.70 5.97 5.97 2.70 10.10 1.20 L10.72 1.05 C13.89 0.00 17.42 0.00 24.46 0.00 Z');"></button>
<span class="t" style="top:289.07px;font-size:35.3px;color:#fff;left:1488.66px;transform:translateX(-50%);"><span class="fl" style="font-size:26.1px;top:-4.59px;transform:scaleX(1.3);-webkit-text-stroke:0.78px #fff;margin:0 1.24px 0 0.71px">♭</span>5</span>
<button style="left:1383.96px;top:334.00px;width:209.40px;height:50.00px;background:#4c1b54;clip-path:path('M24.46 0.00 L184.94 0.00 C191.98 0.00 195.51 0.00 198.68 1.05 L199.30 1.20 C203.43 2.70 206.70 5.97 208.20 10.10 L208.35 10.72 C209.40 13.89 209.40 17.42 209.40 24.46 L209.40 25.54 C209.40 32.58 209.40 36.11 208.35 39.28 L208.20 39.90 C206.70 44.03 203.43 47.30 199.30 48.80 L198.68 48.95 C195.51 50.00 191.98 50.00 184.94 50.00 L24.46 50.00 C17.42 50.00 13.89 50.00 10.72 48.95 L10.10 48.80 C5.97 47.30 2.70 44.03 1.20 39.90 L1.05 39.28 C0.00 36.11 0.00 32.58 0.00 25.54 L0.00 24.46 C0.00 17.42 0.00 13.89 1.05 10.72 L1.20 10.10 C2.70 5.97 5.97 2.70 10.10 1.20 L10.72 1.05 C13.89 0.00 17.42 0.00 24.46 0.00 Z');"></button>
<span class="t" style="top:358.77px;font-size:35.3px;color:#fff;left:1488.66px;transform:translateX(-50%);">E</span>
<button style="left:1609.29px;top:264.00px;width:209.40px;height:50.00px;background:#de33f0;clip-path:path('M24.46 0.00 L184.94 0.00 C191.98 0.00 195.51 0.00 198.68 1.05 L199.30 1.20 C203.43 2.70 206.70 5.97 208.20 10.10 L208.35 10.72 C209.40 13.89 209.40 17.42 209.40 24.46 L209.40 25.54 C209.40 32.58 209.40 36.11 208.35 39.28 L208.20 39.90 C206.70 44.03 203.43 47.30 199.30 48.80 L198.68 48.95 C195.51 50.00 191.98 50.00 184.94 50.00 L24.46 50.00 C17.42 50.00 13.89 50.00 10.72 48.95 L10.10 48.80 C5.97 47.30 2.70 44.03 1.20 39.90 L1.05 39.28 C0.00 36.11 0.00 32.58 0.00 25.54 L0.00 24.46 C0.00 17.42 0.00 13.89 1.05 10.72 L1.20 10.10 C2.70 5.97 5.97 2.70 10.10 1.20 L10.72 1.05 C13.89 0.00 17.42 0.00 24.46 0.00 Z');"></button>
<span class="t" style="top:289.07px;font-size:35.3px;color:#fff;left:1713.99px;transform:translateX(-50%);">5</span>
<button style="left:1609.29px;top:334.00px;width:209.40px;height:50.00px;background:#de33f0;clip-path:path('M24.46 0.00 L184.94 0.00 C191.98 0.00 195.51 0.00 198.68 1.05 L199.30 1.20 C203.43 2.70 206.70 5.97 208.20 10.10 L208.35 10.72 C209.40 13.89 209.40 17.42 209.40 24.46 L209.40 25.54 C209.40 32.58 209.40 36.11 208.35 39.28 L208.20 39.90 C206.70 44.03 203.43 47.30 199.30 48.80 L198.68 48.95 C195.51 50.00 191.98 50.00 184.94 50.00 L24.46 50.00 C17.42 50.00 13.89 50.00 10.72 48.95 L10.10 48.80 C5.97 47.30 2.70 44.03 1.20 39.90 L1.05 39.28 C0.00 36.11 0.00 32.58 0.00 25.54 L0.00 24.46 C0.00 17.42 0.00 13.89 1.05 10.72 L1.20 10.10 C2.70 5.97 5.97 2.70 10.10 1.20 L10.72 1.05 C13.89 0.00 17.42 0.00 24.46 0.00 Z');"></button>
<span class="t" style="top:358.77px;font-size:35.3px;color:#fff;left:1713.99px;transform:translateX(-50%);">O</span>
<button style="left:1834.62px;top:264.00px;width:209.40px;height:50.00px;background:#4c1b54;clip-path:path('M24.46 0.00 L184.94 0.00 C191.98 0.00 195.51 0.00 198.68 1.05 L199.30 1.20 C203.43 2.70 206.70 5.97 208.20 10.10 L208.35 10.72 C209.40 13.89 209.40 17.42 209.40 24.46 L209.40 25.54 C209.40 32.58 209.40 36.11 208.35 39.28 L208.20 39.90 C206.70 44.03 203.43 47.30 199.30 48.80 L198.68 48.95 C195.51 50.00 191.98 50.00 184.94 50.00 L24.46 50.00 C17.42 50.00 13.89 50.00 10.72 48.95 L10.10 48.80 C5.97 47.30 2.70 44.03 1.20 39.90 L1.05 39.28 C0.00 36.11 0.00 32.58 0.00 25.54 L0.00 24.46 C0.00 17.42 0.00 13.89 1.05 10.72 L1.20 10.10 C2.70 5.97 5.97 2.70 10.10 1.20 L10.72 1.05 C13.89 0.00 17.42 0.00 24.46 0.00 Z');"></button>
<span class="t" style="top:289.07px;font-size:35.3px;color:#fff;left:1939.32px;transform:translateX(-50%);"><span class="fl" style="font-size:26.1px;top:-4.59px;transform:scaleX(1.3);-webkit-text-stroke:0.78px #fff;margin:0 1.24px 0 0.71px">♭</span>6</span>
<button style="left:1834.62px;top:334.00px;width:209.40px;height:50.00px;background:#4c1b54;clip-path:path('M24.46 0.00 L184.94 0.00 C191.98 0.00 195.51 0.00 198.68 1.05 L199.30 1.20 C203.43 2.70 206.70 5.97 208.20 10.10 L208.35 10.72 C209.40 13.89 209.40 17.42 209.40 24.46 L209.40 25.54 C209.40 32.58 209.40 36.11 208.35 39.28 L208.20 39.90 C206.70 44.03 203.43 47.30 199.30 48.80 L198.68 48.95 C195.51 50.00 191.98 50.00 184.94 50.00 L24.46 50.00 C17.42 50.00 13.89 50.00 10.72 48.95 L10.10 48.80 C5.97 47.30 2.70 44.03 1.20 39.90 L1.05 39.28 C0.00 36.11 0.00 32.58 0.00 25.54 L0.00 24.46 C0.00 17.42 0.00 13.89 1.05 10.72 L1.20 10.10 C2.70 5.97 5.97 2.70 10.10 1.20 L10.72 1.05 C13.89 0.00 17.42 0.00 24.46 0.00 Z');"></button>
<span class="t" style="top:358.77px;font-size:35.3px;color:#fff;left:1939.32px;transform:translateX(-50%);">R</span>
<button style="left:2059.95px;top:264.00px;width:209.40px;height:50.00px;background:#de33f0;clip-path:path('M24.46 0.00 L184.94 0.00 C191.98 0.00 195.51 0.00 198.68 1.05 L199.30 1.20 C203.43 2.70 206.70 5.97 208.20 10.10 L208.35 10.72 C209.40 13.89 209.40 17.42 209.40 24.46 L209.40 25.54 C209.40 32.58 209.40 36.11 208.35 39.28 L208.20 39.90 C206.70 44.03 203.43 47.30 199.30 48.80 L198.68 48.95 C195.51 50.00 191.98 50.00 184.94 50.00 L24.46 50.00 C17.42 50.00 13.89 50.00 10.72 48.95 L10.10 48.80 C5.97 47.30 2.70 44.03 1.20 39.90 L1.05 39.28 C0.00 36.11 0.00 32.58 0.00 25.54 L0.00 24.46 C0.00 17.42 0.00 13.89 1.05 10.72 L1.20 10.10 C2.70 5.97 5.97 2.70 10.10 1.20 L10.72 1.05 C13.89 0.00 17.42 0.00 24.46 0.00 Z');"></button>
<span class="t" style="top:289.07px;font-size:35.3px;color:#fff;left:2164.65px;transform:translateX(-50%);">6</span>
<button style="left:2059.95px;top:334.00px;width:209.40px;height:50.00px;background:#de33f0;clip-path:path('M24.46 0.00 L184.94 0.00 C191.98 0.00 195.51 0.00 198.68 1.05 L199.30 1.20 C203.43 2.70 206.70 5.97 208.20 10.10 L208.35 10.72 C209.40 13.89 209.40 17.42 209.40 24.46 L209.40 25.54 C209.40 32.58 209.40 36.11 208.35 39.28 L208.20 39.90 C206.70 44.03 203.43 47.30 199.30 48.80 L198.68 48.95 C195.51 50.00 191.98 50.00 184.94 50.00 L24.46 50.00 C17.42 50.00 13.89 50.00 10.72 48.95 L10.10 48.80 C5.97 47.30 2.70 44.03 1.20 39.90 L1.05 39.28 C0.00 36.11 0.00 32.58 0.00 25.54 L0.00 24.46 C0.00 17.42 0.00 13.89 1.05 10.72 L1.20 10.10 C2.70 5.97 5.97 2.70 10.10 1.20 L10.72 1.05 C13.89 0.00 17.42 0.00 24.46 0.00 Z');"></button>
<span class="t" style="top:358.77px;font-size:35.3px;color:#fff;left:2164.65px;transform:translateX(-50%);">T</span>
<button style="left:2285.27px;top:264.00px;width:209.40px;height:50.00px;background:#4c1b54;clip-path:path('M24.46 0.00 L184.94 0.00 C191.98 0.00 195.51 0.00 198.68 1.05 L199.30 1.20 C203.43 2.70 206.70 5.97 208.20 10.10 L208.35 10.72 C209.40 13.89 209.40 17.42 209.40 24.46 L209.40 25.54 C209.40 32.58 209.40 36.11 208.35 39.28 L208.20 39.90 C206.70 44.03 203.43 47.30 199.30 48.80 L198.68 48.95 C195.51 50.00 191.98 50.00 184.94 50.00 L24.46 50.00 C17.42 50.00 13.89 50.00 10.72 48.95 L10.10 48.80 C5.97 47.30 2.70 44.03 1.20 39.90 L1.05 39.28 C0.00 36.11 0.00 32.58 0.00 25.54 L0.00 24.46 C0.00 17.42 0.00 13.89 1.05 10.72 L1.20 10.10 C2.70 5.97 5.97 2.70 10.10 1.20 L10.72 1.05 C13.89 0.00 17.42 0.00 24.46 0.00 Z');"></button>
<span class="t" style="top:289.07px;font-size:35.3px;color:#fff;left:2389.97px;transform:translateX(-50%);"><span class="fl" style="font-size:26.1px;top:-4.59px;transform:scaleX(1.3);-webkit-text-stroke:0.78px #fff;margin:0 1.24px 0 0.71px">♭</span>7</span>
<button style="left:2285.27px;top:334.00px;width:209.40px;height:50.00px;background:#4c1b54;clip-path:path('M24.46 0.00 L184.94 0.00 C191.98 0.00 195.51 0.00 198.68 1.05 L199.30 1.20 C203.43 2.70 206.70 5.97 208.20 10.10 L208.35 10.72 C209.40 13.89 209.40 17.42 209.40 24.46 L209.40 25.54 C209.40 32.58 209.40 36.11 208.35 39.28 L208.20 39.90 C206.70 44.03 203.43 47.30 199.30 48.80 L198.68 48.95 C195.51 50.00 191.98 50.00 184.94 50.00 L24.46 50.00 C17.42 50.00 13.89 50.00 10.72 48.95 L10.10 48.80 C5.97 47.30 2.70 44.03 1.20 39.90 L1.05 39.28 C0.00 36.11 0.00 32.58 0.00 25.54 L0.00 24.46 C0.00 17.42 0.00 13.89 1.05 10.72 L1.20 10.10 C2.70 5.97 5.97 2.70 10.10 1.20 L10.72 1.05 C13.89 0.00 17.42 0.00 24.46 0.00 Z');"></button>
<span class="t" style="top:358.77px;font-size:35.3px;color:#fff;left:2389.97px;transform:translateX(-50%);">I</span>
<button style="left:2510.60px;top:264.00px;width:209.40px;height:50.00px;background:#de33f0;clip-path:path('M24.46 0.00 L184.94 0.00 C191.98 0.00 195.51 0.00 198.68 1.05 L199.30 1.20 C203.43 2.70 206.70 5.97 208.20 10.10 L208.35 10.72 C209.40 13.89 209.40 17.42 209.40 24.46 L209.40 25.54 C209.40 32.58 209.40 36.11 208.35 39.28 L208.20 39.90 C206.70 44.03 203.43 47.30 199.30 48.80 L198.68 48.95 C195.51 50.00 191.98 50.00 184.94 50.00 L24.46 50.00 C17.42 50.00 13.89 50.00 10.72 48.95 L10.10 48.80 C5.97 47.30 2.70 44.03 1.20 39.90 L1.05 39.28 C0.00 36.11 0.00 32.58 0.00 25.54 L0.00 24.46 C0.00 17.42 0.00 13.89 1.05 10.72 L1.20 10.10 C2.70 5.97 5.97 2.70 10.10 1.20 L10.72 1.05 C13.89 0.00 17.42 0.00 24.46 0.00 Z');"></button>
<span class="t" style="top:289.07px;font-size:35.3px;color:#fff;left:2615.30px;transform:translateX(-50%);">7</span>
<button style="left:2510.60px;top:334.00px;width:209.40px;height:50.00px;background:#de33f0;clip-path:path('M24.46 0.00 L184.94 0.00 C191.98 0.00 195.51 0.00 198.68 1.05 L199.30 1.20 C203.43 2.70 206.70 5.97 208.20 10.10 L208.35 10.72 C209.40 13.89 209.40 17.42 209.40 24.46 L209.40 25.54 C209.40 32.58 209.40 36.11 208.35 39.28 L208.20 39.90 C206.70 44.03 203.43 47.30 199.30 48.80 L198.68 48.95 C195.51 50.00 191.98 50.00 184.94 50.00 L24.46 50.00 C17.42 50.00 13.89 50.00 10.72 48.95 L10.10 48.80 C5.97 47.30 2.70 44.03 1.20 39.90 L1.05 39.28 C0.00 36.11 0.00 32.58 0.00 25.54 L0.00 24.46 C0.00 17.42 0.00 13.89 1.05 10.72 L1.20 10.10 C2.70 5.97 5.97 2.70 10.10 1.20 L10.72 1.05 C13.89 0.00 17.42 0.00 24.46 0.00 Z');"></button>
<span class="t" style="top:358.77px;font-size:35.3px;color:#fff;left:2615.30px;transform:translateX(-50%);">S</span>
</section>
<div style="left:690.20px;top:424.00px;width:569.00px;height:111.60px;background:#27272b;clip-path:path('M24.46 0.00 L544.54 0.00 C551.58 0.00 555.11 0.00 558.28 1.05 L558.90 1.20 C563.03 2.70 566.30 5.97 567.80 10.10 L567.95 10.72 C569.00 13.89 569.00 17.42 569.00 24.46 L569.00 87.14 C569.00 94.18 569.00 97.71 567.95 100.88 L567.80 101.50 C566.30 105.63 563.03 108.90 558.90 110.40 L558.28 110.55 C555.11 111.60 551.58 111.60 544.54 111.60 L24.46 111.60 C17.42 111.60 13.89 111.60 10.72 110.55 L10.10 110.40 C5.97 108.90 2.70 105.63 1.20 101.50 L1.05 100.88 C0.00 97.71 0.00 94.18 0.00 87.14 L0.00 24.46 C0.00 17.42 0.00 13.89 1.05 10.72 L1.20 10.10 C2.70 5.97 5.97 2.70 10.10 1.20 L10.72 1.05 C13.89 0.00 17.42 0.00 24.46 0.00 Z');"></div>
<span class="t" style="top:480.15px;font-size:41.4px;color:#fff;letter-spacing:4.866px;left:728.45px;">1 - 2 - 3 - 4 - 5 - 6 - 7</span>
<div style="left:1278.20px;top:423.30px;width:528.60px;height:113.40px;background:#27272b;clip-path:path('M25.99 0.00 L502.61 0.00 C510.10 0.00 513.84 0.00 517.21 1.11 L517.86 1.27 C522.26 2.87 525.73 6.34 527.33 10.74 L527.49 11.39 C528.60 14.76 528.60 18.50 528.60 25.99 L528.60 87.41 C528.60 94.90 528.60 98.64 527.49 102.01 L527.33 102.66 C525.73 107.06 522.26 110.53 517.86 112.13 L517.21 112.29 C513.84 113.40 510.10 113.40 502.61 113.40 L25.99 113.40 C18.50 113.40 14.76 113.40 11.39 112.29 L10.74 112.13 C6.34 110.53 2.87 107.06 1.27 102.66 L1.11 102.01 C0.00 98.64 0.00 94.90 0.00 87.41 L0.00 25.99 C0.00 18.50 0.00 14.76 1.11 11.39 L1.27 10.74 C2.87 6.34 6.34 2.87 10.74 1.27 L11.39 1.11 C14.76 0.00 18.50 0.00 25.99 0.00 Z');"></div>
<div style="left:1278.20px;top:423.30px;width:528.60px;height:113.40px;background:#de33f0;clip-path:path(evenodd,'M25.99 0.00 L502.61 0.00 C510.10 0.00 513.84 0.00 517.21 1.11 L517.86 1.27 C522.26 2.87 525.73 6.34 527.33 10.74 L527.49 11.39 C528.60 14.76 528.60 18.50 528.60 25.99 L528.60 87.41 C528.60 94.90 528.60 98.64 527.49 102.01 L527.33 102.66 C525.73 107.06 522.26 110.53 517.86 112.13 L517.21 112.29 C513.84 113.40 510.10 113.40 502.61 113.40 L25.99 113.40 C18.50 113.40 14.76 113.40 11.39 112.29 L10.74 112.13 C6.34 110.53 2.87 107.06 1.27 102.66 L1.11 102.01 C0.00 98.64 0.00 94.90 0.00 87.41 L0.00 25.99 C0.00 18.50 0.00 14.76 1.11 11.39 L1.27 10.74 C2.87 6.34 6.34 2.87 10.74 1.27 L11.39 1.11 C14.76 0.00 18.50 0.00 25.99 0.00 Z M24.93 2.00 L503.67 2.00 C510.27 2.00 513.57 2.00 516.55 2.98 L517.13 3.12 C521.01 4.54 524.06 7.59 525.48 11.47 L525.62 12.05 C526.60 15.03 526.60 18.33 526.60 24.93 L526.60 88.47 C526.60 95.07 526.60 98.37 525.62 101.35 L525.48 101.93 C524.06 105.81 521.01 108.86 517.13 110.28 L516.55 110.42 C513.57 111.40 510.27 111.40 503.67 111.40 L24.93 111.40 C18.33 111.40 15.03 111.40 12.05 110.42 L11.47 110.28 C7.59 108.86 4.54 105.81 3.12 101.93 L2.98 101.35 C2.00 98.37 2.00 95.07 2.00 88.47 L2.00 24.93 C2.00 18.33 2.00 15.03 2.98 12.05 L3.12 11.47 C4.54 7.59 7.59 4.54 11.47 3.12 L12.05 2.98 C15.03 2.00 18.33 2.00 24.93 2.00 Z');"></div>
<span class="t" style="top:479.95px;font-size:42px;color:#fff;letter-spacing:-1.518px;left:1309.82px;">Ionian Mode = Major Scale</span>
<div style="left:1826.00px;top:424.00px;width:237.30px;height:111.80px;background:#27272b;clip-path:path('M24.46 0.00 L212.84 0.00 C219.88 0.00 223.41 0.00 226.58 1.05 L227.20 1.20 C231.33 2.70 234.60 5.97 236.10 10.10 L236.25 10.72 C237.30 13.89 237.30 17.42 237.30 24.46 L237.30 87.34 C237.30 94.38 237.30 97.91 236.25 101.08 L236.10 101.70 C234.60 105.83 231.33 109.10 227.20 110.60 L226.58 110.75 C223.41 111.80 219.88 111.80 212.84 111.80 L24.46 111.80 C17.42 111.80 13.89 111.80 10.72 110.75 L10.10 110.60 C5.97 109.10 2.70 105.83 1.20 101.70 L1.05 101.08 C0.00 97.91 0.00 94.38 0.00 87.34 L0.00 24.46 C0.00 17.42 0.00 13.89 1.05 10.72 L1.20 10.10 C2.70 5.97 5.97 2.70 10.10 1.20 L10.72 1.05 C13.89 0.00 17.42 0.00 24.46 0.00 Z');"></div>
<span class="t" style="top:479.95px;font-size:42px;color:#fff;letter-spacing:-3.136px;left:1859.34px;">_ALUOTS</span>
<button style="left:32.00px;top:578.00px;width:1182.00px;height:80.00px;background:#333336;clip-path:path('M24.46 0.00 L1157.54 0.00 C1164.58 0.00 1168.11 0.00 1171.28 1.05 L1171.90 1.20 C1176.03 2.70 1179.30 5.97 1180.80 10.10 L1180.95 10.72 C1182.00 13.89 1182.00 17.42 1182.00 24.46 L1182.00 55.54 C1182.00 62.58 1182.00 66.11 1180.95 69.28 L1180.80 69.90 C1179.30 74.03 1176.03 77.30 1171.90 78.80 L1171.28 78.95 C1168.11 80.00 1164.58 80.00 1157.54 80.00 L24.46 80.00 C17.42 80.00 13.89 80.00 10.72 78.95 L10.10 78.80 C5.97 77.30 2.70 74.03 1.20 69.90 L1.05 69.28 C0.00 66.11 0.00 62.58 0.00 55.54 L0.00 24.46 C0.00 17.42 0.00 13.89 1.05 10.72 L1.20 10.10 C2.70 5.97 5.97 2.70 10.10 1.20 L10.72 1.05 C13.89 0.00 17.42 0.00 24.46 0.00 Z');"></button>
<span class="t" style="top:617.92px;font-size:41.5px;color:#8e8e93;letter-spacing:-1.837px;left:380.57px;">Tuning: Standard (EADGBE)</span>
<button style="left:1246.00px;top:578.00px;width:1182.00px;height:80.00px;background:#333336;clip-path:path('M24.46 0.00 L1157.54 0.00 C1164.58 0.00 1168.11 0.00 1171.28 1.05 L1171.90 1.20 C1176.03 2.70 1179.30 5.97 1180.80 10.10 L1180.95 10.72 C1182.00 13.89 1182.00 17.42 1182.00 24.46 L1182.00 55.54 C1182.00 62.58 1182.00 66.11 1180.95 69.28 L1180.80 69.90 C1179.30 74.03 1176.03 77.30 1171.90 78.80 L1171.28 78.95 C1168.11 80.00 1164.58 80.00 1157.54 80.00 L24.46 80.00 C17.42 80.00 13.89 80.00 10.72 78.95 L10.10 78.80 C5.97 77.30 2.70 74.03 1.20 69.90 L1.05 69.28 C0.00 66.11 0.00 62.58 0.00 55.54 L0.00 24.46 C0.00 17.42 0.00 13.89 1.05 10.72 L1.20 10.10 C2.70 5.97 5.97 2.70 10.10 1.20 L10.72 1.05 C13.89 0.00 17.42 0.00 24.46 0.00 Z');"></button>
<span class="t" style="top:617.92px;font-size:41.5px;color:#8e8e93;letter-spacing:-0.775px;left:1566.70px;">Neck position: Right-handed A</span>
<button style="left:2460.20px;top:578.00px;width:259.70px;height:80.00px;background:#00d3e1;clip-path:path('M24.46 0.00 L235.24 0.00 C242.28 0.00 245.81 0.00 248.98 1.05 L249.60 1.20 C253.73 2.70 257.00 5.97 258.50 10.10 L258.65 10.72 C259.70 13.89 259.70 17.42 259.70 24.46 L259.70 55.54 C259.70 62.58 259.70 66.11 258.65 69.28 L258.50 69.90 C257.00 74.03 253.73 77.30 249.60 78.80 L248.98 78.95 C245.81 80.00 242.28 80.00 235.24 80.00 L24.46 80.00 C17.42 80.00 13.89 80.00 10.72 78.95 L10.10 78.80 C5.97 77.30 2.70 74.03 1.20 69.90 L1.05 69.28 C0.00 66.11 0.00 62.58 0.00 55.54 L0.00 24.46 C0.00 17.42 0.00 13.89 1.05 10.72 L1.20 10.10 C2.70 5.97 5.97 2.70 10.10 1.20 L10.72 1.05 C13.89 0.00 17.42 0.00 24.46 0.00 Z');"></button>
<span class="t" style="top:618.12px;font-size:36.3px;color:#060606;letter-spacing:-2.201px;left:2531.22px;">FOCUS</span>
<svg style="left:2478.00px;top:598.00px;" width="30" height="40" viewBox="0 0 30 40"><path d="M20.6 7.6 L9 20 L20.6 32.4" fill="none" stroke="#060606" stroke-width="4.6" stroke-linecap="round" stroke-linejoin="round"/></svg>
<svg style="left:2672.00px;top:598.00px;" width="30" height="40" viewBox="0 0 30 40"><path d="M8.6 7.6 L20.2 20 L8.6 32.4" fill="none" stroke="#060606" stroke-width="4.6" stroke-linecap="round" stroke-linejoin="round"/></svg>
<nav>
<div style="left:34.00px;top:694.00px;width:280.30px;height:55.60px;background:#4f4f51;clip-path:path('M24.46 0.00 L255.84 0.00 C262.88 0.00 266.41 0.00 269.58 1.05 L270.20 1.20 C274.33 2.70 277.60 5.97 279.10 10.10 L279.25 10.72 C280.30 13.89 280.30 17.42 280.30 24.46 L280.30 31.14 C280.30 38.18 280.30 41.71 279.25 44.88 L279.10 45.50 C277.60 49.63 274.33 52.90 270.20 54.40 L269.58 54.55 C266.41 55.60 262.88 55.60 255.84 55.60 L24.46 55.60 C17.42 55.60 13.89 55.60 10.72 54.55 L10.10 54.40 C5.97 52.90 2.70 49.63 1.20 45.50 L1.05 44.88 C0.00 41.71 0.00 38.18 0.00 31.14 L0.00 24.46 C0.00 17.42 0.00 13.89 1.05 10.72 L1.20 10.10 C2.70 5.97 5.97 2.70 10.10 1.20 L10.72 1.05 C13.89 0.00 17.42 0.00 24.46 0.00 Z');"><div style="left:0;top:0;width:53.5px;height:100%;background:#303032"></div></div>
<div style="left:33.00px;top:692.50px;width:282.20px;height:59.00px;clip-path:path('M26.75 0.00 L255.45 0.00 C263.15 0.00 267.00 0.00 270.48 1.15 L271.15 1.31 C275.68 2.96 279.24 6.52 280.89 11.05 L281.05 11.72 C282.20 15.20 282.20 19.05 282.20 26.75 L282.20 32.25 C282.20 39.95 282.20 43.80 281.05 47.28 L280.89 47.95 C279.24 52.48 275.68 56.04 271.15 57.69 L270.48 57.85 C267.00 59.00 263.15 59.00 255.45 59.00 L26.75 59.00 C19.05 59.00 15.20 59.00 11.72 57.85 L11.05 57.69 C6.52 56.04 2.96 52.48 1.31 47.95 L1.15 47.28 C0.00 43.80 0.00 39.95 0.00 32.25 L0.00 26.75 C0.00 19.05 0.00 15.20 1.15 11.72 L1.31 11.05 C2.96 6.52 6.52 2.96 11.05 1.31 L11.72 1.15 C15.20 0.00 19.05 0.00 26.75 0.00 Z');display:none;"></div>
<div style="left:33.00px;top:692.50px;width:282.20px;height:59.00px;background:#de33f0;clip-path:path(evenodd,'M26.75 0.00 L255.45 0.00 C263.15 0.00 267.00 0.00 270.48 1.15 L271.15 1.31 C275.68 2.96 279.24 6.52 280.89 11.05 L281.05 11.72 C282.20 15.20 282.20 19.05 282.20 26.75 L282.20 32.25 C282.20 39.95 282.20 43.80 281.05 47.28 L280.89 47.95 C279.24 52.48 275.68 56.04 271.15 57.69 L270.48 57.85 C267.00 59.00 263.15 59.00 255.45 59.00 L26.75 59.00 C19.05 59.00 15.20 59.00 11.72 57.85 L11.05 57.69 C6.52 56.04 2.96 52.48 1.31 47.95 L1.15 47.28 C0.00 43.80 0.00 39.95 0.00 32.25 L0.00 26.75 C0.00 19.05 0.00 15.20 1.15 11.72 L1.31 11.05 C2.96 6.52 6.52 2.96 11.05 1.31 L11.72 1.15 C15.20 0.00 19.05 0.00 26.75 0.00 Z M25.17 3.00 L257.03 3.00 C263.42 3.00 266.61 3.00 269.49 3.95 L270.04 4.09 C273.79 5.45 276.75 8.41 278.11 12.16 L278.25 12.71 C279.20 15.59 279.20 18.78 279.20 25.17 L279.20 33.83 C279.20 40.22 279.20 43.41 278.25 46.29 L278.11 46.84 C276.75 50.59 273.79 53.55 270.04 54.91 L269.49 55.05 C266.61 56.00 263.42 56.00 257.03 56.00 L25.17 56.00 C18.78 56.00 15.59 56.00 12.71 55.05 L12.16 54.91 C8.41 53.55 5.45 50.59 4.09 46.84 L3.95 46.29 C3.00 43.41 3.00 40.22 3.00 33.83 L3.00 25.17 C3.00 18.78 3.00 15.59 3.95 12.71 L4.09 12.16 C5.45 8.41 8.41 5.45 12.16 4.09 L12.71 3.95 C15.59 3.00 18.78 3.00 25.17 3.00 Z');"></div>
<svg style="left:45.40px;top:707.30px;" width="30" height="30" viewBox="0 0 30 30"><path d="M3.6 3.6 L26.4 26.4 M26.4 3.6 L3.6 26.4" stroke="#6c6c6f" stroke-width="3.1" stroke-linecap="round" fill="none"/></svg>
<span class="t" style="top:721.65px;font-size:41.4px;color:#8e8e93;left:200.90px;transform:translateX(-50%) scaleX(0.933);">I</span>
<div style="left:334.50px;top:694.00px;width:280.30px;height:55.60px;background:#4f4f51;clip-path:path('M24.46 0.00 L255.84 0.00 C262.88 0.00 266.41 0.00 269.58 1.05 L270.20 1.20 C274.33 2.70 277.60 5.97 279.10 10.10 L279.25 10.72 C280.30 13.89 280.30 17.42 280.30 24.46 L280.30 31.14 C280.30 38.18 280.30 41.71 279.25 44.88 L279.10 45.50 C277.60 49.63 274.33 52.90 270.20 54.40 L269.58 54.55 C266.41 55.60 262.88 55.60 255.84 55.60 L24.46 55.60 C17.42 55.60 13.89 55.60 10.72 54.55 L10.10 54.40 C5.97 52.90 2.70 49.63 1.20 45.50 L1.05 44.88 C0.00 41.71 0.00 38.18 0.00 31.14 L0.00 24.46 C0.00 17.42 0.00 13.89 1.05 10.72 L1.20 10.10 C2.70 5.97 5.97 2.70 10.10 1.20 L10.72 1.05 C13.89 0.00 17.42 0.00 24.46 0.00 Z');"><div style="left:0;top:0;width:53.5px;height:100%;background:#303032"></div></div>
<div style="left:333.50px;top:692.50px;width:282.20px;height:59.00px;clip-path:path('M26.75 0.00 L255.45 0.00 C263.15 0.00 267.00 0.00 270.48 1.15 L271.15 1.31 C275.68 2.96 279.24 6.52 280.89 11.05 L281.05 11.72 C282.20 15.20 282.20 19.05 282.20 26.75 L282.20 32.25 C282.20 39.95 282.20 43.80 281.05 47.28 L280.89 47.95 C279.24 52.48 275.68 56.04 271.15 57.69 L270.48 57.85 C267.00 59.00 263.15 59.00 255.45 59.00 L26.75 59.00 C19.05 59.00 15.20 59.00 11.72 57.85 L11.05 57.69 C6.52 56.04 2.96 52.48 1.31 47.95 L1.15 47.28 C0.00 43.80 0.00 39.95 0.00 32.25 L0.00 26.75 C0.00 19.05 0.00 15.20 1.15 11.72 L1.31 11.05 C2.96 6.52 6.52 2.96 11.05 1.31 L11.72 1.15 C15.20 0.00 19.05 0.00 26.75 0.00 Z');display:none;"></div>
<div style="left:333.50px;top:692.50px;width:282.20px;height:59.00px;background:#de33f0;clip-path:path(evenodd,'M26.75 0.00 L255.45 0.00 C263.15 0.00 267.00 0.00 270.48 1.15 L271.15 1.31 C275.68 2.96 279.24 6.52 280.89 11.05 L281.05 11.72 C282.20 15.20 282.20 19.05 282.20 26.75 L282.20 32.25 C282.20 39.95 282.20 43.80 281.05 47.28 L280.89 47.95 C279.24 52.48 275.68 56.04 271.15 57.69 L270.48 57.85 C267.00 59.00 263.15 59.00 255.45 59.00 L26.75 59.00 C19.05 59.00 15.20 59.00 11.72 57.85 L11.05 57.69 C6.52 56.04 2.96 52.48 1.31 47.95 L1.15 47.28 C0.00 43.80 0.00 39.95 0.00 32.25 L0.00 26.75 C0.00 19.05 0.00 15.20 1.15 11.72 L1.31 11.05 C2.96 6.52 6.52 2.96 11.05 1.31 L11.72 1.15 C15.20 0.00 19.05 0.00 26.75 0.00 Z M25.17 3.00 L257.03 3.00 C263.42 3.00 266.61 3.00 269.49 3.95 L270.04 4.09 C273.79 5.45 276.75 8.41 278.11 12.16 L278.25 12.71 C279.20 15.59 279.20 18.78 279.20 25.17 L279.20 33.83 C279.20 40.22 279.20 43.41 278.25 46.29 L278.11 46.84 C276.75 50.59 273.79 53.55 270.04 54.91 L269.49 55.05 C266.61 56.00 263.42 56.00 257.03 56.00 L25.17 56.00 C18.78 56.00 15.59 56.00 12.71 55.05 L12.16 54.91 C8.41 53.55 5.45 50.59 4.09 46.84 L3.95 46.29 C3.00 43.41 3.00 40.22 3.00 33.83 L3.00 25.17 C3.00 18.78 3.00 15.59 3.95 12.71 L4.09 12.16 C5.45 8.41 8.41 5.45 12.16 4.09 L12.71 3.95 C15.59 3.00 18.78 3.00 25.17 3.00 Z');"></div>
<svg style="left:345.90px;top:707.30px;" width="30" height="30" viewBox="0 0 30 30"><path d="M3.6 3.6 L26.4 26.4 M26.4 3.6 L3.6 26.4" stroke="#6c6c6f" stroke-width="3.1" stroke-linecap="round" fill="none"/></svg>
<span class="t" style="top:721.65px;font-size:41.4px;color:#8e8e93;left:501.40px;transform:translateX(-50%) scaleX(0.846);">II</span>
<div style="left:635.00px;top:694.00px;width:280.30px;height:55.60px;background:#4f4f51;clip-path:path('M24.46 0.00 L255.84 0.00 C262.88 0.00 266.41 0.00 269.58 1.05 L270.20 1.20 C274.33 2.70 277.60 5.97 279.10 10.10 L279.25 10.72 C280.30 13.89 280.30 17.42 280.30 24.46 L280.30 31.14 C280.30 38.18 280.30 41.71 279.25 44.88 L279.10 45.50 C277.60 49.63 274.33 52.90 270.20 54.40 L269.58 54.55 C266.41 55.60 262.88 55.60 255.84 55.60 L24.46 55.60 C17.42 55.60 13.89 55.60 10.72 54.55 L10.10 54.40 C5.97 52.90 2.70 49.63 1.20 45.50 L1.05 44.88 C0.00 41.71 0.00 38.18 0.00 31.14 L0.00 24.46 C0.00 17.42 0.00 13.89 1.05 10.72 L1.20 10.10 C2.70 5.97 5.97 2.70 10.10 1.20 L10.72 1.05 C13.89 0.00 17.42 0.00 24.46 0.00 Z');"><div style="left:0;top:0;width:53.5px;height:100%;background:#303032"></div></div>
<svg style="left:646.40px;top:707.30px;" width="30" height="30" viewBox="0 0 30 30"><path d="M3.6 3.6 L26.4 26.4 M26.4 3.6 L3.6 26.4" stroke="#6c6c6f" stroke-width="3.1" stroke-linecap="round" fill="none"/></svg>
<span class="t" style="top:721.65px;font-size:41.4px;color:#8e8e93;left:801.90px;transform:translateX(-50%) scaleX(0.882);">III</span>
<div style="left:935.50px;top:694.00px;width:280.30px;height:55.60px;background:#4f4f51;clip-path:path('M24.46 0.00 L255.84 0.00 C262.88 0.00 266.41 0.00 269.58 1.05 L270.20 1.20 C274.33 2.70 277.60 5.97 279.10 10.10 L279.25 10.72 C280.30 13.89 280.30 17.42 280.30 24.46 L280.30 31.14 C280.30 38.18 280.30 41.71 279.25 44.88 L279.10 45.50 C277.60 49.63 274.33 52.90 270.20 54.40 L269.58 54.55 C266.41 55.60 262.88 55.60 255.84 55.60 L24.46 55.60 C17.42 55.60 13.89 55.60 10.72 54.55 L10.10 54.40 C5.97 52.90 2.70 49.63 1.20 45.50 L1.05 44.88 C0.00 41.71 0.00 38.18 0.00 31.14 L0.00 24.46 C0.00 17.42 0.00 13.89 1.05 10.72 L1.20 10.10 C2.70 5.97 5.97 2.70 10.10 1.20 L10.72 1.05 C13.89 0.00 17.42 0.00 24.46 0.00 Z');"><div style="left:0;top:0;width:53.5px;height:100%;background:#303032"></div></div>
<svg style="left:946.90px;top:707.30px;" width="30" height="30" viewBox="0 0 30 30"><path d="M3.6 3.6 L26.4 26.4 M26.4 3.6 L3.6 26.4" stroke="#6c6c6f" stroke-width="3.1" stroke-linecap="round" fill="none"/></svg>
<span class="t" style="top:721.65px;font-size:41.4px;color:#8e8e93;left:1102.40px;transform:translateX(-50%) scaleX(0.894);">IV</span>
<div style="left:1236.00px;top:694.00px;width:280.30px;height:55.60px;background:#4f4f51;clip-path:path('M24.46 0.00 L255.84 0.00 C262.88 0.00 266.41 0.00 269.58 1.05 L270.20 1.20 C274.33 2.70 277.60 5.97 279.10 10.10 L279.25 10.72 C280.30 13.89 280.30 17.42 280.30 24.46 L280.30 31.14 C280.30 38.18 280.30 41.71 279.25 44.88 L279.10 45.50 C277.60 49.63 274.33 52.90 270.20 54.40 L269.58 54.55 C266.41 55.60 262.88 55.60 255.84 55.60 L24.46 55.60 C17.42 55.60 13.89 55.60 10.72 54.55 L10.10 54.40 C5.97 52.90 2.70 49.63 1.20 45.50 L1.05 44.88 C0.00 41.71 0.00 38.18 0.00 31.14 L0.00 24.46 C0.00 17.42 0.00 13.89 1.05 10.72 L1.20 10.10 C2.70 5.97 5.97 2.70 10.10 1.20 L10.72 1.05 C13.89 0.00 17.42 0.00 24.46 0.00 Z');"><div style="left:0;top:0;width:53.5px;height:100%;background:#303032"></div></div>
<svg style="left:1247.40px;top:707.30px;" width="30" height="30" viewBox="0 0 30 30"><path d="M3.6 3.6 L26.4 26.4 M26.4 3.6 L3.6 26.4" stroke="#6c6c6f" stroke-width="3.1" stroke-linecap="round" fill="none"/></svg>
<span class="t" style="top:721.65px;font-size:41.4px;color:#8e8e93;left:1402.90px;transform:translateX(-50%) scaleX(0.859);">V</span>
<div style="left:1536.50px;top:694.00px;width:280.30px;height:55.60px;background:#4f4f51;clip-path:path('M24.46 0.00 L255.84 0.00 C262.88 0.00 266.41 0.00 269.58 1.05 L270.20 1.20 C274.33 2.70 277.60 5.97 279.10 10.10 L279.25 10.72 C280.30 13.89 280.30 17.42 280.30 24.46 L280.30 31.14 C280.30 38.18 280.30 41.71 279.25 44.88 L279.10 45.50 C277.60 49.63 274.33 52.90 270.20 54.40 L269.58 54.55 C266.41 55.60 262.88 55.60 255.84 55.60 L24.46 55.60 C17.42 55.60 13.89 55.60 10.72 54.55 L10.10 54.40 C5.97 52.90 2.70 49.63 1.20 45.50 L1.05 44.88 C0.00 41.71 0.00 38.18 0.00 31.14 L0.00 24.46 C0.00 17.42 0.00 13.89 1.05 10.72 L1.20 10.10 C2.70 5.97 5.97 2.70 10.10 1.20 L10.72 1.05 C13.89 0.00 17.42 0.00 24.46 0.00 Z');"><div style="left:0;top:0;width:53.5px;height:100%;background:#303032"></div></div>
<svg style="left:1547.90px;top:707.30px;" width="30" height="30" viewBox="0 0 30 30"><path d="M3.6 3.6 L26.4 26.4 M26.4 3.6 L3.6 26.4" stroke="#6c6c6f" stroke-width="3.1" stroke-linecap="round" fill="none"/></svg>
<span class="t" style="top:721.65px;font-size:41.4px;color:#8e8e93;left:1703.40px;transform:translateX(-50%) scaleX(0.883);">VI</span>
<div style="left:1837.00px;top:694.00px;width:280.30px;height:55.60px;background:#4f4f51;clip-path:path('M24.46 0.00 L255.84 0.00 C262.88 0.00 266.41 0.00 269.58 1.05 L270.20 1.20 C274.33 2.70 277.60 5.97 279.10 10.10 L279.25 10.72 C280.30 13.89 280.30 17.42 280.30 24.46 L280.30 31.14 C280.30 38.18 280.30 41.71 279.25 44.88 L279.10 45.50 C277.60 49.63 274.33 52.90 270.20 54.40 L269.58 54.55 C266.41 55.60 262.88 55.60 255.84 55.60 L24.46 55.60 C17.42 55.60 13.89 55.60 10.72 54.55 L10.10 54.40 C5.97 52.90 2.70 49.63 1.20 45.50 L1.05 44.88 C0.00 41.71 0.00 38.18 0.00 31.14 L0.00 24.46 C0.00 17.42 0.00 13.89 1.05 10.72 L1.20 10.10 C2.70 5.97 5.97 2.70 10.10 1.20 L10.72 1.05 C13.89 0.00 17.42 0.00 24.46 0.00 Z');"><div style="left:0;top:0;width:53.5px;height:100%;background:#303032"></div></div>
<svg style="left:1848.40px;top:707.30px;" width="30" height="30" viewBox="0 0 30 30"><path d="M3.6 3.6 L26.4 26.4 M26.4 3.6 L3.6 26.4" stroke="#6c6c6f" stroke-width="3.1" stroke-linecap="round" fill="none"/></svg>
<span class="t" style="top:721.65px;font-size:41.4px;color:#8e8e93;left:2003.90px;transform:translateX(-50%) scaleX(0.897);">VII</span>
<div style="left:2137.50px;top:694.00px;width:280.30px;height:55.60px;background:#4f4f51;clip-path:path('M24.46 0.00 L255.84 0.00 C262.88 0.00 266.41 0.00 269.58 1.05 L270.20 1.20 C274.33 2.70 277.60 5.97 279.10 10.10 L279.25 10.72 C280.30 13.89 280.30 17.42 280.30 24.46 L280.30 31.14 C280.30 38.18 280.30 41.71 279.25 44.88 L279.10 45.50 C277.60 49.63 274.33 52.90 270.20 54.40 L269.58 54.55 C266.41 55.60 262.88 55.60 255.84 55.60 L24.46 55.60 C17.42 55.60 13.89 55.60 10.72 54.55 L10.10 54.40 C5.97 52.90 2.70 49.63 1.20 45.50 L1.05 44.88 C0.00 41.71 0.00 38.18 0.00 31.14 L0.00 24.46 C0.00 17.42 0.00 13.89 1.05 10.72 L1.20 10.10 C2.70 5.97 5.97 2.70 10.10 1.20 L10.72 1.05 C13.89 0.00 17.42 0.00 24.46 0.00 Z');"><div style="left:0;top:0;width:53.5px;height:100%;background:#303032"></div></div>
<svg style="left:2148.90px;top:707.30px;" width="30" height="30" viewBox="0 0 30 30"><path d="M3.6 3.6 L26.4 26.4 M26.4 3.6 L3.6 26.4" stroke="#6c6c6f" stroke-width="3.1" stroke-linecap="round" fill="none"/></svg>
<span class="t" style="top:721.65px;font-size:41.4px;color:#8e8e93;left:2304.40px;transform:translateX(-50%) scaleX(0.867);">VIII</span>
<div style="left:2438.00px;top:694.00px;width:280.30px;height:55.60px;background:#4f4f51;clip-path:path('M24.46 0.00 L255.84 0.00 C262.88 0.00 266.41 0.00 269.58 1.05 L270.20 1.20 C274.33 2.70 277.60 5.97 279.10 10.10 L279.25 10.72 C280.30 13.89 280.30 17.42 280.30 24.46 L280.30 31.14 C280.30 38.18 280.30 41.71 279.25 44.88 L279.10 45.50 C277.60 49.63 274.33 52.90 270.20 54.40 L269.58 54.55 C266.41 55.60 262.88 55.60 255.84 55.60 L24.46 55.60 C17.42 55.60 13.89 55.60 10.72 54.55 L10.10 54.40 C5.97 52.90 2.70 49.63 1.20 45.50 L1.05 44.88 C0.00 41.71 0.00 38.18 0.00 31.14 L0.00 24.46 C0.00 17.42 0.00 13.89 1.05 10.72 L1.20 10.10 C2.70 5.97 5.97 2.70 10.10 1.20 L10.72 1.05 C13.89 0.00 17.42 0.00 24.46 0.00 Z');"><div style="left:0;top:0;width:53.5px;height:100%;background:#303032"></div></div>
<svg style="left:2449.40px;top:707.30px;" width="30" height="30" viewBox="0 0 30 30"><path d="M3.6 3.6 L26.4 26.4 M26.4 3.6 L3.6 26.4" stroke="#6c6c6f" stroke-width="3.1" stroke-linecap="round" fill="none"/></svg>
<span class="t" style="top:721.65px;font-size:41.4px;color:#8e8e93;left:2604.90px;transform:translateX(-50%) scaleX(0.912);">IX</span>
</nav>
<div style="left:32.00px;top:782.00px;width:2528.00px;height:60.00px;background:#1c1c1e;clip-path:path('M24.46 0.00 L2503.54 0.00 C2510.58 0.00 2514.11 0.00 2517.28 1.05 L2517.90 1.20 C2522.03 2.70 2525.30 5.97 2526.80 10.10 L2526.95 10.72 C2528.00 13.89 2528.00 17.42 2528.00 24.46 L2528.00 35.54 C2528.00 42.58 2528.00 46.11 2526.95 49.28 L2526.80 49.90 C2525.30 54.03 2522.03 57.30 2517.90 58.80 L2517.28 58.95 C2514.11 60.00 2510.58 60.00 2503.54 60.00 L24.46 60.00 C17.42 60.00 13.89 60.00 10.72 58.95 L10.10 58.80 C5.97 57.30 2.70 54.03 1.20 49.90 L1.05 49.28 C0.00 46.11 0.00 42.58 0.00 35.54 L0.00 24.46 C0.00 17.42 0.00 13.89 1.05 10.72 L1.20 10.10 C2.70 5.97 5.97 2.70 10.10 1.20 L10.72 1.05 C13.89 0.00 17.42 0.00 24.46 0.00 Z');"></div>
<svg style="left:130.60px;top:800.90px;" width="24.2" height="22.4" viewBox="0 0 26 24"><rect x="1.2" y="1.4" width="23.2" height="21.4" rx="3" fill="none" stroke="#6c6c70" stroke-width="1.8"/>
<rect x="1.2" y="1.4" width="23.2" height="5" rx="2" fill="#6c6c70"/>
<path d="M5.4 11 H20.2 M5.4 14.6 H20.2 M5.4 18.2 H15.6" stroke="#6c6c70" stroke-width="1.5" fill="none"/></svg>
<button style="left:2584.00px;top:782.00px;width:60.00px;height:60.00px;background:#232326;clip-path:path('M26.75 0.00 L33.25 0.00 C40.95 0.00 44.80 0.00 48.28 1.15 L48.95 1.31 C53.48 2.96 57.04 6.52 58.69 11.05 L58.85 11.72 C60.00 15.20 60.00 19.05 60.00 26.75 L60.00 33.25 C60.00 40.95 60.00 44.80 58.85 48.28 L58.69 48.95 C57.04 53.48 53.48 57.04 48.95 58.69 L48.28 58.85 C44.80 60.00 40.95 60.00 33.25 60.00 L26.75 60.00 C19.05 60.00 15.20 60.00 11.72 58.85 L11.05 58.69 C6.52 57.04 2.96 53.48 1.31 48.95 L1.15 48.28 C0.00 44.80 0.00 40.95 0.00 33.25 L0.00 26.75 C0.00 19.05 0.00 15.20 1.15 11.72 L1.31 11.05 C2.96 6.52 6.52 2.96 11.05 1.31 L11.72 1.15 C15.20 0.00 19.05 0.00 26.75 0.00 Z');"></button>
<div style="left:2601.90px;top:810.90px;width:23.40px;height:4.30px;background:#969698;border-radius:2.15px;"></div>
<button style="left:2659.90px;top:782.00px;width:60.00px;height:60.00px;background:#00d3e1;clip-path:path('M26.75 0.00 L33.25 0.00 C40.95 0.00 44.80 0.00 48.28 1.15 L48.95 1.31 C53.48 2.96 57.04 6.52 58.69 11.05 L58.85 11.72 C60.00 15.20 60.00 19.05 60.00 26.75 L60.00 33.25 C60.00 40.95 60.00 44.80 58.85 48.28 L58.69 48.95 C57.04 53.48 53.48 57.04 48.95 58.69 L48.28 58.85 C44.80 60.00 40.95 60.00 33.25 60.00 L26.75 60.00 C19.05 60.00 15.20 60.00 11.72 58.85 L11.05 58.69 C6.52 57.04 2.96 53.48 1.31 48.95 L1.15 48.28 C0.00 44.80 0.00 40.95 0.00 33.25 L0.00 26.75 C0.00 19.05 0.00 15.20 1.15 11.72 L1.31 11.05 C2.96 6.52 6.52 2.96 11.05 1.31 L11.72 1.15 C15.20 0.00 19.05 0.00 26.75 0.00 Z');"></button>
<div style="left:2678.10px;top:810.20px;width:23.10px;height:4.30px;background:#fff;border-radius:2.15px;"></div>
<div style="left:2687.60px;top:800.60px;width:4.30px;height:23.50px;background:#fff;border-radius:2.15px;"></div>
<main>
<div style="left:34.00px;top:920.80px;width:2684.50px;height:2.40px;background:#828282;"></div>
<div style="left:34.00px;top:996.55px;width:2684.50px;height:2.90px;background:#828282;"></div>
<div style="left:34.00px;top:1072.25px;width:2684.50px;height:3.50px;background:#828282;"></div>
<div style="left:34.00px;top:1148.00px;width:2684.50px;height:4.00px;background:#828282;"></div>
<div style="left:34.00px;top:1223.65px;width:2684.50px;height:4.70px;background:#828282;"></div>
<div style="left:34.00px;top:1299.45px;width:2684.50px;height:5.10px;background:#828282;"></div>
<div style="left:209.40px;top:884.00px;width:7.10px;height:455.80px;background:#828282;"></div>
<div style="left:390.30px;top:884.00px;width:3.00px;height:455.80px;background:#828282;"></div>
<div style="left:569.20px;top:884.00px;width:3.00px;height:455.80px;background:#828282;"></div>
<div style="left:748.10px;top:884.00px;width:3.00px;height:455.80px;background:#828282;"></div>
<div style="left:927.00px;top:884.00px;width:3.00px;height:455.80px;background:#828282;"></div>
<div style="left:1105.90px;top:884.00px;width:3.00px;height:455.80px;background:#828282;"></div>
<div style="left:1285.30px;top:884.00px;width:3.00px;height:455.80px;background:#828282;"></div>
<div style="left:1463.70px;top:884.00px;width:3.00px;height:455.80px;background:#828282;"></div>
<div style="left:1642.60px;top:884.00px;width:3.00px;height:455.80px;background:#828282;"></div>
<div style="left:1821.50px;top:884.00px;width:3.00px;height:455.80px;background:#828282;"></div>
<div style="left:2000.40px;top:884.00px;width:3.00px;height:455.80px;background:#828282;"></div>
<div style="left:2179.30px;top:884.00px;width:3.00px;height:455.80px;background:#828282;"></div>
<div style="left:2358.20px;top:884.00px;width:3.00px;height:455.80px;background:#828282;"></div>
<div style="left:2537.10px;top:884.00px;width:3.00px;height:455.80px;background:#828282;"></div>
<div style="left:2716.00px;top:884.00px;width:3.00px;height:455.80px;background:#828282;"></div>
<div class="n0" style="left:91.30px;top:887.30px"><i></i></div>
<span class="t" style="top:922.71px;font-size:24.8px;color:#fff;left:122.90px;transform:translateX(-50%);">1</span>
<div class="n2" style="left:272.13px;top:889.30px"></div>
<span class="t" style="top:922.71px;font-size:24.8px;color:#9a9a9f;left:301.93px;transform:translateX(-50%);"><span class="fl" style="font-size:18.4px;top:-3.22px;transform:scaleX(1.3);-webkit-text-stroke:0.55px #9a9a9f;margin:0 0.87px 0 0.50px">♭</span>2</span>
<div class="n1" style="left:450.16px;top:888.20px"></div>
<span class="t" style="top:922.71px;font-size:24.8px;color:#fff;left:480.96px;transform:translateX(-50%);">2</span>
<div class="n2" style="left:630.19px;top:889.30px"></div>
<span class="t" style="top:922.71px;font-size:24.8px;color:#9a9a9f;left:659.99px;transform:translateX(-50%);"><span class="fl" style="font-size:18.4px;top:-3.22px;transform:scaleX(1.3);-webkit-text-stroke:0.55px #9a9a9f;margin:0 0.87px 0 0.50px">♭</span>3</span>
<div class="n1" style="left:808.22px;top:888.20px"></div>
<span class="t" style="top:922.71px;font-size:24.8px;color:#fff;left:839.02px;transform:translateX(-50%);">3</span>
<div class="n1" style="left:987.25px;top:888.20px"></div>
<span class="t" style="top:922.71px;font-size:24.8px;color:#fff;left:1018.05px;transform:translateX(-50%);">4</span>
<div class="n2" style="left:1167.28px;top:889.30px"></div>
<span class="t" style="top:922.71px;font-size:24.8px;color:#9a9a9f;left:1197.08px;transform:translateX(-50%);"><span class="fl" style="font-size:18.4px;top:-3.22px;transform:scaleX(1.3);-webkit-text-stroke:0.55px #9a9a9f;margin:0 0.87px 0 0.50px">♭</span>5</span>
<div class="n1" style="left:1345.31px;top:888.20px"></div>
<span class="t" style="top:922.71px;font-size:24.8px;color:#fff;left:1376.11px;transform:translateX(-50%);">5</span>
<div class="n2" style="left:1525.34px;top:889.30px"></div>
<span class="t" style="top:922.71px;font-size:24.8px;color:#9a9a9f;left:1555.14px;transform:translateX(-50%);"><span class="fl" style="font-size:18.4px;top:-3.22px;transform:scaleX(1.3);-webkit-text-stroke:0.55px #9a9a9f;margin:0 0.87px 0 0.50px">♭</span>6</span>
<div class="n1" style="left:1703.37px;top:888.20px"></div>
<span class="t" style="top:922.71px;font-size:24.8px;color:#fff;left:1734.17px;transform:translateX(-50%);">6</span>
<div class="n2" style="left:1883.40px;top:889.30px"></div>
<span class="t" style="top:922.71px;font-size:24.8px;color:#9a9a9f;left:1913.20px;transform:translateX(-50%);"><span class="fl" style="font-size:18.4px;top:-3.22px;transform:scaleX(1.3);-webkit-text-stroke:0.55px #9a9a9f;margin:0 0.87px 0 0.50px">♭</span>7</span>
<div class="n1" style="left:2061.43px;top:888.20px"></div>
<span class="t" style="top:922.71px;font-size:24.8px;color:#fff;left:2092.23px;transform:translateX(-50%);">7</span>
<div class="n0" style="left:2239.66px;top:887.30px"><i></i></div>
<span class="t" style="top:922.71px;font-size:24.8px;color:#fff;left:2271.26px;transform:translateX(-50%);">1</span>
<div class="n2" style="left:2420.49px;top:889.30px"></div>
<span class="t" style="top:922.71px;font-size:24.8px;color:#9a9a9f;left:2450.29px;transform:translateX(-50%);"><span class="fl" style="font-size:18.4px;top:-3.22px;transform:scaleX(1.3);-webkit-text-stroke:0.55px #9a9a9f;margin:0 0.87px 0 0.50px">♭</span>2</span>
<div class="n1" style="left:2598.52px;top:888.20px"></div>
<span class="t" style="top:922.71px;font-size:24.8px;color:#fff;left:2629.32px;transform:translateX(-50%);">2</span>
<div class="n1" style="left:92.10px;top:964.20px"></div>
<span class="t" style="top:998.71px;font-size:24.8px;color:#fff;left:122.90px;transform:translateX(-50%);">5</span>
<div class="n2" style="left:272.13px;top:965.30px"></div>
<span class="t" style="top:998.71px;font-size:24.8px;color:#9a9a9f;left:301.93px;transform:translateX(-50%);"><span class="fl" style="font-size:18.4px;top:-3.22px;transform:scaleX(1.3);-webkit-text-stroke:0.55px #9a9a9f;margin:0 0.87px 0 0.50px">♭</span>6</span>
<div class="n1" style="left:450.16px;top:964.20px"></div>
<span class="t" style="top:998.71px;font-size:24.8px;color:#fff;left:480.96px;transform:translateX(-50%);">6</span>
<div class="n2" style="left:630.19px;top:965.30px"></div>
<span class="t" style="top:998.71px;font-size:24.8px;color:#9a9a9f;left:659.99px;transform:translateX(-50%);"><span class="fl" style="font-size:18.4px;top:-3.22px;transform:scaleX(1.3);-webkit-text-stroke:0.55px #9a9a9f;margin:0 0.87px 0 0.50px">♭</span>7</span>
<div class="n1" style="left:808.22px;top:964.20px"></div>
<span class="t" style="top:998.71px;font-size:24.8px;color:#fff;left:839.02px;transform:translateX(-50%);">7</span>
<div class="n0" style="left:986.45px;top:963.30px"><i></i></div>
<span class="t" style="top:998.71px;font-size:24.8px;color:#fff;left:1018.05px;transform:translateX(-50%);">1</span>
<div class="n2" style="left:1167.28px;top:965.30px"></div>
<span class="t" style="top:998.71px;font-size:24.8px;color:#9a9a9f;left:1197.08px;transform:translateX(-50%);"><span class="fl" style="font-size:18.4px;top:-3.22px;transform:scaleX(1.3);-webkit-text-stroke:0.55px #9a9a9f;margin:0 0.87px 0 0.50px">♭</span>2</span>
<div class="n1" style="left:1345.31px;top:964.20px"></div>
<span class="t" style="top:998.71px;font-size:24.8px;color:#fff;left:1376.11px;transform:translateX(-50%);">2</span>
<div class="n2" style="left:1525.34px;top:965.30px"></div>
<span class="t" style="top:998.71px;font-size:24.8px;color:#9a9a9f;left:1555.14px;transform:translateX(-50%);"><span class="fl" style="font-size:18.4px;top:-3.22px;transform:scaleX(1.3);-webkit-text-stroke:0.55px #9a9a9f;margin:0 0.87px 0 0.50px">♭</span>3</span>
<div class="n1" style="left:1703.37px;top:964.20px"></div>
<span class="t" style="top:998.71px;font-size:24.8px;color:#fff;left:1734.17px;transform:translateX(-50%);">3</span>
<div class="n1" style="left:1882.40px;top:964.20px"></div>
<span class="t" style="top:998.71px;font-size:24.8px;color:#fff;left:1913.20px;transform:translateX(-50%);">4</span>
<div class="n2" style="left:2062.43px;top:965.30px"></div>
<span class="t" style="top:998.71px;font-size:24.8px;color:#9a9a9f;left:2092.23px;transform:translateX(-50%);"><span class="fl" style="font-size:18.4px;top:-3.22px;transform:scaleX(1.3);-webkit-text-stroke:0.55px #9a9a9f;margin:0 0.87px 0 0.50px">♭</span>5</span>
<div class="n1" style="left:2240.46px;top:964.20px"></div>
<span class="t" style="top:998.71px;font-size:24.8px;color:#fff;left:2271.26px;transform:translateX(-50%);">5</span>
<div class="n2" style="left:2420.49px;top:965.30px"></div>
<span class="t" style="top:998.71px;font-size:24.8px;color:#9a9a9f;left:2450.29px;transform:translateX(-50%);"><span class="fl" style="font-size:18.4px;top:-3.22px;transform:scaleX(1.3);-webkit-text-stroke:0.55px #9a9a9f;margin:0 0.87px 0 0.50px">♭</span>6</span>
<div class="n1" style="left:2598.52px;top:964.20px"></div>
<span class="t" style="top:998.71px;font-size:24.8px;color:#fff;left:2629.32px;transform:translateX(-50%);">6</span>
<div class="n2" style="left:93.10px;top:1041.30px"></div>
<span class="t" style="top:1074.71px;font-size:24.8px;color:#9a9a9f;left:122.90px;transform:translateX(-50%);"><span class="fl" style="font-size:18.4px;top:-3.22px;transform:scaleX(1.3);-webkit-text-stroke:0.55px #9a9a9f;margin:0 0.87px 0 0.50px">♭</span>3</span>
<div class="n1" style="left:271.13px;top:1040.20px"></div>
<span class="t" style="top:1074.71px;font-size:24.8px;color:#fff;left:301.93px;transform:translateX(-50%);">3</span>
<div class="n1" style="left:450.16px;top:1040.20px"></div>
<span class="t" style="top:1074.71px;font-size:24.8px;color:#fff;left:480.96px;transform:translateX(-50%);">4</span>
<div class="n2" style="left:630.19px;top:1041.30px"></div>
<span class="t" style="top:1074.71px;font-size:24.8px;color:#9a9a9f;left:659.99px;transform:translateX(-50%);"><span class="fl" style="font-size:18.4px;top:-3.22px;transform:scaleX(1.3);-webkit-text-stroke:0.55px #9a9a9f;margin:0 0.87px 0 0.50px">♭</span>5</span>
<div class="n1" style="left:808.22px;top:1040.20px"></div>
<span class="t" style="top:1074.71px;font-size:24.8px;color:#fff;left:839.02px;transform:translateX(-50%);">5</span>
<div class="n2" style="left:988.25px;top:1041.30px"></div>
<span class="t" style="top:1074.71px;font-size:24.8px;color:#9a9a9f;left:1018.05px;transform:translateX(-50%);"><span class="fl" style="font-size:18.4px;top:-3.22px;transform:scaleX(1.3);-webkit-text-stroke:0.55px #9a9a9f;margin:0 0.87px 0 0.50px">♭</span>6</span>
<div class="n1" style="left:1166.28px;top:1040.20px"></div>
<span class="t" style="top:1074.71px;font-size:24.8px;color:#fff;left:1197.08px;transform:translateX(-50%);">6</span>
<div class="n2" style="left:1346.31px;top:1041.30px"></div>
<span class="t" style="top:1074.71px;font-size:24.8px;color:#9a9a9f;left:1376.11px;transform:translateX(-50%);"><span class="fl" style="font-size:18.4px;top:-3.22px;transform:scaleX(1.3);-webkit-text-stroke:0.55px #9a9a9f;margin:0 0.87px 0 0.50px">♭</span>7</span>
<div class="n1" style="left:1524.34px;top:1040.20px"></div>
<span class="t" style="top:1074.71px;font-size:24.8px;color:#fff;left:1555.14px;transform:translateX(-50%);">7</span>
<div class="n0" style="left:1702.57px;top:1039.30px"><i></i></div>
<span class="t" style="top:1074.71px;font-size:24.8px;color:#fff;left:1734.17px;transform:translateX(-50%);">1</span>
<div class="n2" style="left:1883.40px;top:1041.30px"></div>
<span class="t" style="top:1074.71px;font-size:24.8px;color:#9a9a9f;left:1913.20px;transform:translateX(-50%);"><span class="fl" style="font-size:18.4px;top:-3.22px;transform:scaleX(1.3);-webkit-text-stroke:0.55px #9a9a9f;margin:0 0.87px 0 0.50px">♭</span>2</span>
<div class="n1" style="left:2061.43px;top:1040.20px"></div>
<span class="t" style="top:1074.71px;font-size:24.8px;color:#fff;left:2092.23px;transform:translateX(-50%);">2</span>
<div class="n2" style="left:2241.46px;top:1041.30px"></div>
<span class="t" style="top:1074.71px;font-size:24.8px;color:#9a9a9f;left:2271.26px;transform:translateX(-50%);"><span class="fl" style="font-size:18.4px;top:-3.22px;transform:scaleX(1.3);-webkit-text-stroke:0.55px #9a9a9f;margin:0 0.87px 0 0.50px">♭</span>3</span>
<div class="n1" style="left:2419.49px;top:1040.20px"></div>
<span class="t" style="top:1074.71px;font-size:24.8px;color:#fff;left:2450.29px;transform:translateX(-50%);">3</span>
<div class="n1" style="left:2598.52px;top:1040.20px"></div>
<span class="t" style="top:1074.71px;font-size:24.8px;color:#fff;left:2629.32px;transform:translateX(-50%);">4</span>
<div class="n2" style="left:93.10px;top:1117.30px"></div>
<span class="t" style="top:1150.71px;font-size:24.8px;color:#9a9a9f;left:122.90px;transform:translateX(-50%);"><span class="fl" style="font-size:18.4px;top:-3.22px;transform:scaleX(1.3);-webkit-text-stroke:0.55px #9a9a9f;margin:0 0.87px 0 0.50px">♭</span>7</span>
<div class="n1" style="left:271.13px;top:1116.20px"></div>
<span class="t" style="top:1150.71px;font-size:24.8px;color:#fff;left:301.93px;transform:translateX(-50%);">7</span>
<div class="n0" style="left:449.36px;top:1115.30px"><i></i></div>
<span class="t" style="top:1150.71px;font-size:24.8px;color:#fff;left:480.96px;transform:translateX(-50%);">1</span>
<div class="n2" style="left:630.19px;top:1117.30px"></div>
<span class="t" style="top:1150.71px;font-size:24.8px;color:#9a9a9f;left:659.99px;transform:translateX(-50%);"><span class="fl" style="font-size:18.4px;top:-3.22px;transform:scaleX(1.3);-webkit-text-stroke:0.55px #9a9a9f;margin:0 0.87px 0 0.50px">♭</span>2</span>
<div class="n1" style="left:808.22px;top:1116.20px"></div>
<span class="t" style="top:1150.71px;font-size:24.8px;color:#fff;left:839.02px;transform:translateX(-50%);">2</span>
<div class="n2" style="left:988.25px;top:1117.30px"></div>
<span class="t" style="top:1150.71px;font-size:24.8px;color:#9a9a9f;left:1018.05px;transform:translateX(-50%);"><span class="fl" style="font-size:18.4px;top:-3.22px;transform:scaleX(1.3);-webkit-text-stroke:0.55px #9a9a9f;margin:0 0.87px 0 0.50px">♭</span>3</span>
<div class="n1" style="left:1166.28px;top:1116.20px"></div>
<span class="t" style="top:1150.71px;font-size:24.8px;color:#fff;left:1197.08px;transform:translateX(-50%);">3</span>
<div class="n1" style="left:1345.31px;top:1116.20px"></div>
<span class="t" style="top:1150.71px;font-size:24.8px;color:#fff;left:1376.11px;transform:translateX(-50%);">4</span>
<div class="n2" style="left:1525.34px;top:1117.30px"></div>
<span class="t" style="top:1150.71px;font-size:24.8px;color:#9a9a9f;left:1555.14px;transform:translateX(-50%);"><span class="fl" style="font-size:18.4px;top:-3.22px;transform:scaleX(1.3);-webkit-text-stroke:0.55px #9a9a9f;margin:0 0.87px 0 0.50px">♭</span>5</span>
<div class="n1" style="left:1703.37px;top:1116.20px"></div>
<span class="t" style="top:1150.71px;font-size:24.8px;color:#fff;left:1734.17px;transform:translateX(-50%);">5</span>
<div class="n2" style="left:1883.40px;top:1117.30px"></div>
<span class="t" style="top:1150.71px;font-size:24.8px;color:#9a9a9f;left:1913.20px;transform:translateX(-50%);"><span class="fl" style="font-size:18.4px;top:-3.22px;transform:scaleX(1.3);-webkit-text-stroke:0.55px #9a9a9f;margin:0 0.87px 0 0.50px">♭</span>6</span>
<div class="n1" style="left:2061.43px;top:1116.20px"></div>
<span class="t" style="top:1150.71px;font-size:24.8px;color:#fff;left:2092.23px;transform:translateX(-50%);">6</span>
<div class="n2" style="left:2241.46px;top:1117.30px"></div>
<span class="t" style="top:1150.71px;font-size:24.8px;color:#9a9a9f;left:2271.26px;transform:translateX(-50%);"><span class="fl" style="font-size:18.4px;top:-3.22px;transform:scaleX(1.3);-webkit-text-stroke:0.55px #9a9a9f;margin:0 0.87px 0 0.50px">♭</span>7</span>
<div class="n1" style="left:2419.49px;top:1116.20px"></div>
<span class="t" style="top:1150.71px;font-size:24.8px;color:#fff;left:2450.29px;transform:translateX(-50%);">7</span>
<div class="n0" style="left:2597.72px;top:1115.30px"><i></i></div>
<span class="t" style="top:1150.71px;font-size:24.8px;color:#fff;left:2629.32px;transform:translateX(-50%);">1</span>
<div class="n1" style="left:92.10px;top:1192.20px"></div>
<span class="t" style="top:1226.71px;font-size:24.8px;color:#fff;left:122.90px;transform:translateX(-50%);">4</span>
<div class="n2" style="left:272.13px;top:1193.30px"></div>
<span class="t" style="top:1226.71px;font-size:24.8px;color:#9a9a9f;left:301.93px;transform:translateX(-50%);"><span class="fl" style="font-size:18.4px;top:-3.22px;transform:scaleX(1.3);-webkit-text-stroke:0.55px #9a9a9f;margin:0 0.87px 0 0.50px">♭</span>5</span>
<div class="n1" style="left:450.16px;top:1192.20px"></div>
<span class="t" style="top:1226.71px;font-size:24.8px;color:#fff;left:480.96px;transform:translateX(-50%);">5</span>
<div class="n2" style="left:630.19px;top:1193.30px"></div>
<span class="t" style="top:1226.71px;font-size:24.8px;color:#9a9a9f;left:659.99px;transform:translateX(-50%);"><span class="fl" style="font-size:18.4px;top:-3.22px;transform:scaleX(1.3);-webkit-text-stroke:0.55px #9a9a9f;margin:0 0.87px 0 0.50px">♭</span>6</span>
<div class="n1" style="left:808.22px;top:1192.20px"></div>
<span class="t" style="top:1226.71px;font-size:24.8px;color:#fff;left:839.02px;transform:translateX(-50%);">6</span>
<div class="n2" style="left:988.25px;top:1193.30px"></div>
<span class="t" style="top:1226.71px;font-size:24.8px;color:#9a9a9f;left:1018.05px;transform:translateX(-50%);"><span class="fl" style="font-size:18.4px;top:-3.22px;transform:scaleX(1.3);-webkit-text-stroke:0.55px #9a9a9f;margin:0 0.87px 0 0.50px">♭</span>7</span>
<div class="n1" style="left:1166.28px;top:1192.20px"></div>
<span class="t" style="top:1226.71px;font-size:24.8px;color:#fff;left:1197.08px;transform:translateX(-50%);">7</span>
<div class="n0" style="left:1344.51px;top:1191.30px"><i></i></div>
<span class="t" style="top:1226.71px;font-size:24.8px;color:#fff;left:1376.11px;transform:translateX(-50%);">1</span>
<div class="n2" style="left:1525.34px;top:1193.30px"></div>
<span class="t" style="top:1226.71px;font-size:24.8px;color:#9a9a9f;left:1555.14px;transform:translateX(-50%);"><span class="fl" style="font-size:18.4px;top:-3.22px;transform:scaleX(1.3);-webkit-text-stroke:0.55px #9a9a9f;margin:0 0.87px 0 0.50px">♭</span>2</span>
<div class="n1" style="left:1703.37px;top:1192.20px"></div>
<span class="t" style="top:1226.71px;font-size:24.8px;color:#fff;left:1734.17px;transform:translateX(-50%);">2</span>
<div class="n2" style="left:1883.40px;top:1193.30px"></div>
<span class="t" style="top:1226.71px;font-size:24.8px;color:#9a9a9f;left:1913.20px;transform:translateX(-50%);"><span class="fl" style="font-size:18.4px;top:-3.22px;transform:scaleX(1.3);-webkit-text-stroke:0.55px #9a9a9f;margin:0 0.87px 0 0.50px">♭</span>3</span>
<div class="n1" style="left:2061.43px;top:1192.20px"></div>
<span class="t" style="top:1226.71px;font-size:24.8px;color:#fff;left:2092.23px;transform:translateX(-50%);">3</span>
<div class="n1" style="left:2240.46px;top:1192.20px"></div>
<span class="t" style="top:1226.71px;font-size:24.8px;color:#fff;left:2271.26px;transform:translateX(-50%);">4</span>
<div class="n2" style="left:2420.49px;top:1193.30px"></div>
<span class="t" style="top:1226.71px;font-size:24.8px;color:#9a9a9f;left:2450.29px;transform:translateX(-50%);"><span class="fl" style="font-size:18.4px;top:-3.22px;transform:scaleX(1.3);-webkit-text-stroke:0.55px #9a9a9f;margin:0 0.87px 0 0.50px">♭</span>5</span>
<div class="n1" style="left:2598.52px;top:1192.20px"></div>
<span class="t" style="top:1226.71px;font-size:24.8px;color:#fff;left:2629.32px;transform:translateX(-50%);">5</span>
<div class="n0" style="left:91.30px;top:1267.30px"><i></i></div>
<span class="t" style="top:1302.71px;font-size:24.8px;color:#fff;left:122.90px;transform:translateX(-50%);">1</span>
<div class="n2" style="left:272.13px;top:1269.30px"></div>
<span class="t" style="top:1302.71px;font-size:24.8px;color:#9a9a9f;left:301.93px;transform:translateX(-50%);"><span class="fl" style="font-size:18.4px;top:-3.22px;transform:scaleX(1.3);-webkit-text-stroke:0.55px #9a9a9f;margin:0 0.87px 0 0.50px">♭</span>2</span>
<div class="n1" style="left:450.16px;top:1268.20px"></div>
<span class="t" style="top:1302.71px;font-size:24.8px;color:#fff;left:480.96px;transform:translateX(-50%);">2</span>
<div class="n2" style="left:630.19px;top:1269.30px"></div>
<span class="t" style="top:1302.71px;font-size:24.8px;color:#9a9a9f;left:659.99px;transform:translateX(-50%);"><span class="fl" style="font-size:18.4px;top:-3.22px;transform:scaleX(1.3);-webkit-text-stroke:0.55px #9a9a9f;margin:0 0.87px 0 0.50px">♭</span>3</span>
<div class="n1" style="left:808.22px;top:1268.20px"></div>
<span class="t" style="top:1302.71px;font-size:24.8px;color:#fff;left:839.02px;transform:translateX(-50%);">3</span>
<div class="n1" style="left:987.25px;top:1268.20px"></div>
<span class="t" style="top:1302.71px;font-size:24.8px;color:#fff;left:1018.05px;transform:translateX(-50%);">4</span>
<div class="n2" style="left:1167.28px;top:1269.30px"></div>
<span class="t" style="top:1302.71px;font-size:24.8px;color:#9a9a9f;left:1197.08px;transform:translateX(-50%);"><span class="fl" style="font-size:18.4px;top:-3.22px;transform:scaleX(1.3);-webkit-text-stroke:0.55px #9a9a9f;margin:0 0.87px 0 0.50px">♭</span>5</span>
<div class="n1" style="left:1345.31px;top:1268.20px"></div>
<span class="t" style="top:1302.71px;font-size:24.8px;color:#fff;left:1376.11px;transform:translateX(-50%);">5</span>
<div class="n2" style="left:1525.34px;top:1269.30px"></div>
<span class="t" style="top:1302.71px;font-size:24.8px;color:#9a9a9f;left:1555.14px;transform:translateX(-50%);"><span class="fl" style="font-size:18.4px;top:-3.22px;transform:scaleX(1.3);-webkit-text-stroke:0.55px #9a9a9f;margin:0 0.87px 0 0.50px">♭</span>6</span>
<div class="n1" style="left:1703.37px;top:1268.20px"></div>
<span class="t" style="top:1302.71px;font-size:24.8px;color:#fff;left:1734.17px;transform:translateX(-50%);">6</span>
<div class="n2" style="left:1883.40px;top:1269.30px"></div>
<span class="t" style="top:1302.71px;font-size:24.8px;color:#9a9a9f;left:1913.20px;transform:translateX(-50%);"><span class="fl" style="font-size:18.4px;top:-3.22px;transform:scaleX(1.3);-webkit-text-stroke:0.55px #9a9a9f;margin:0 0.87px 0 0.50px">♭</span>7</span>
<div class="n1" style="left:2061.43px;top:1268.20px"></div>
<span class="t" style="top:1302.71px;font-size:24.8px;color:#fff;left:2092.23px;transform:translateX(-50%);">7</span>
<div class="n0" style="left:2239.66px;top:1267.30px"><i></i></div>
<span class="t" style="top:1302.71px;font-size:24.8px;color:#fff;left:2271.26px;transform:translateX(-50%);">1</span>
<div class="n2" style="left:2420.49px;top:1269.30px"></div>
<span class="t" style="top:1302.71px;font-size:24.8px;color:#9a9a9f;left:2450.29px;transform:translateX(-50%);"><span class="fl" style="font-size:18.4px;top:-3.22px;transform:scaleX(1.3);-webkit-text-stroke:0.55px #9a9a9f;margin:0 0.87px 0 0.50px">♭</span>2</span>
<div class="n1" style="left:2598.52px;top:1268.20px"></div>
<span class="t" style="top:1302.71px;font-size:24.8px;color:#fff;left:2629.32px;transform:translateX(-50%);">2</span>
<div style="left:32.00px;top:884.00px;width:1253.30px;height:455.80px;background:rgba(0,0,0,0.7);"></div>
<div style="left:1824.70px;top:884.00px;width:891.60px;height:455.80px;background:rgba(0,0,0,0.7);"></div>
<div style="left:2716.30px;top:884.00px;width:2.80px;height:455.80px;background:rgba(15,15,18,0.7);"></div>
</main>
<div style="left:34.00px;top:1374.90px;width:2684.20px;height:2.40px;background:#707070;"></div>
<div style="left:652.05px;top:1367.90px;width:16.20px;height:16.20px;background:#6b6b6b;border-radius:8.1px;"></div>
<div style="left:1009.85px;top:1367.90px;width:16.20px;height:16.20px;background:#6b6b6b;border-radius:8.1px;"></div>
<div style="left:1367.65px;top:1367.90px;width:16.20px;height:16.20px;background:#6b6b6b;border-radius:8.1px;"></div>
<div style="left:1725.45px;top:1367.90px;width:16.20px;height:16.20px;background:#6b6b6b;border-radius:8.1px;"></div>
<div style="left:2246.50px;top:1367.90px;width:16.20px;height:16.20px;background:#6b6b6b;border-radius:8.1px;"></div>
<div style="left:2278.70px;top:1367.90px;width:16.20px;height:16.20px;background:#6b6b6b;border-radius:8.1px;"></div>
<button style="left:1246.90px;top:1417.80px;width:56.40px;height:56.40px;background:#00d3e1;border-radius:28.2px;"></button>
<svg style="left:1246.90px;top:1417.80px;" width="56.4" height="56.4" viewBox="0 0 56.4 56.4"><path d="M32 16.4 L20.2 28.2 L32 40" fill="none" stroke="#0a0a0a" stroke-width="4" stroke-linecap="round" stroke-linejoin="round"/></svg>
<button style="left:1448.80px;top:1417.80px;width:56.40px;height:56.40px;background:#00d3e1;border-radius:28.2px;"></button>
<svg style="left:1448.80px;top:1417.80px;" width="56.4" height="56.4" viewBox="0 0 56.4 56.4"><path d="M23.5 16.4 L35.3 28.2 L23.5 40" fill="none" stroke="#0a0a0a" stroke-width="4" stroke-linecap="round" stroke-linejoin="round"/></svg>
<nav>
<button style="left:31.20px;top:1511.00px;width:523.90px;height:72.00px;background:#de33f0;clip-path:path('M24.46 0.00 L499.44 0.00 C506.48 0.00 510.01 0.00 513.18 1.05 L513.80 1.20 C517.93 2.70 521.20 5.97 522.70 10.10 L522.85 10.72 C523.90 13.89 523.90 17.42 523.90 24.46 L523.90 47.54 C523.90 54.58 523.90 58.11 522.85 61.28 L522.70 61.90 C521.20 66.03 517.93 69.30 513.80 70.80 L513.18 70.95 C510.01 72.00 506.48 72.00 499.44 72.00 L24.46 72.00 C17.42 72.00 13.89 72.00 10.72 70.95 L10.10 70.80 C5.97 69.30 2.70 66.03 1.20 61.90 L1.05 61.28 C0.00 58.11 0.00 54.58 0.00 47.54 L0.00 24.46 C0.00 17.42 0.00 13.89 1.05 10.72 L1.20 10.10 C2.70 5.97 5.97 2.70 10.10 1.20 L10.72 1.05 C13.89 0.00 17.42 0.00 24.46 0.00 Z');"></button>
<span class="t" style="top:1546.82px;font-size:41.2px;color:#fff;letter-spacing:-0.697px;left:180.12px;">Tertian triads</span>
<button style="left:573.35px;top:1511.00px;width:523.50px;height:72.00px;clip-path:path('M24.46 0.00 L499.04 0.00 C506.08 0.00 509.61 0.00 512.78 1.05 L513.40 1.20 C517.53 2.70 520.80 5.97 522.30 10.10 L522.45 10.72 C523.50 13.89 523.50 17.42 523.50 24.46 L523.50 47.54 C523.50 54.58 523.50 58.11 522.45 61.28 L522.30 61.90 C520.80 66.03 517.53 69.30 513.40 70.80 L512.78 70.95 C509.61 72.00 506.08 72.00 499.04 72.00 L24.46 72.00 C17.42 72.00 13.89 72.00 10.72 70.95 L10.10 70.80 C5.97 69.30 2.70 66.03 1.20 61.90 L1.05 61.28 C0.00 58.11 0.00 54.58 0.00 47.54 L0.00 24.46 C0.00 17.42 0.00 13.89 1.05 10.72 L1.20 10.10 C2.70 5.97 5.97 2.70 10.10 1.20 L10.72 1.05 C13.89 0.00 17.42 0.00 24.46 0.00 Z');background:transparent;"></button>
<div style="left:573.35px;top:1511.00px;width:523.50px;height:72.00px;background:#de33f0;clip-path:path(evenodd,'M24.46 0.00 L499.04 0.00 C506.08 0.00 509.61 0.00 512.78 1.05 L513.40 1.20 C517.53 2.70 520.80 5.97 522.30 10.10 L522.45 10.72 C523.50 13.89 523.50 17.42 523.50 24.46 L523.50 47.54 C523.50 54.58 523.50 58.11 522.45 61.28 L522.30 61.90 C520.80 66.03 517.53 69.30 513.40 70.80 L512.78 70.95 C509.61 72.00 506.08 72.00 499.04 72.00 L24.46 72.00 C17.42 72.00 13.89 72.00 10.72 70.95 L10.10 70.80 C5.97 69.30 2.70 66.03 1.20 61.90 L1.05 61.28 C0.00 58.11 0.00 54.58 0.00 47.54 L0.00 24.46 C0.00 17.42 0.00 13.89 1.05 10.72 L1.20 10.10 C2.70 5.97 5.97 2.70 10.10 1.20 L10.72 1.05 C13.89 0.00 17.42 0.00 24.46 0.00 Z M23.40 2.00 L500.10 2.00 C506.26 2.00 509.34 2.00 512.12 2.92 L512.66 3.05 C516.28 4.37 519.13 7.22 520.45 10.84 L520.58 11.38 C521.50 14.16 521.50 17.24 521.50 23.40 L521.50 48.60 C521.50 54.76 521.50 57.84 520.58 60.62 L520.45 61.16 C519.13 64.78 516.28 67.63 512.66 68.95 L512.12 69.08 C509.34 70.00 506.26 70.00 500.10 70.00 L23.40 70.00 C17.24 70.00 14.16 70.00 11.38 69.08 L10.84 68.95 C7.22 67.63 4.37 64.78 3.05 61.16 L2.92 60.62 C2.00 57.84 2.00 54.76 2.00 48.60 L2.00 23.40 C2.00 17.24 2.00 14.16 2.92 11.38 L3.05 10.84 C4.37 7.22 7.22 4.37 10.84 3.05 L11.38 2.92 C14.16 2.00 17.24 2.00 23.40 2.00 Z');"></div>
<span class="t" style="top:1546.82px;font-size:41.2px;color:#de33f0;letter-spacing:-0.190px;left:677.82px;">Non-tertian triads</span>
<button style="left:1114.70px;top:1511.00px;width:523.50px;height:72.00px;clip-path:path('M24.46 0.00 L499.04 0.00 C506.08 0.00 509.61 0.00 512.78 1.05 L513.40 1.20 C517.53 2.70 520.80 5.97 522.30 10.10 L522.45 10.72 C523.50 13.89 523.50 17.42 523.50 24.46 L523.50 47.54 C523.50 54.58 523.50 58.11 522.45 61.28 L522.30 61.90 C520.80 66.03 517.53 69.30 513.40 70.80 L512.78 70.95 C509.61 72.00 506.08 72.00 499.04 72.00 L24.46 72.00 C17.42 72.00 13.89 72.00 10.72 70.95 L10.10 70.80 C5.97 69.30 2.70 66.03 1.20 61.90 L1.05 61.28 C0.00 58.11 0.00 54.58 0.00 47.54 L0.00 24.46 C0.00 17.42 0.00 13.89 1.05 10.72 L1.20 10.10 C2.70 5.97 5.97 2.70 10.10 1.20 L10.72 1.05 C13.89 0.00 17.42 0.00 24.46 0.00 Z');background:transparent;"></button>
<div style="left:1114.70px;top:1511.00px;width:523.50px;height:72.00px;background:#de33f0;clip-path:path(evenodd,'M24.46 0.00 L499.04 0.00 C506.08 0.00 509.61 0.00 512.78 1.05 L513.40 1.20 C517.53 2.70 520.80 5.97 522.30 10.10 L522.45 10.72 C523.50 13.89 523.50 17.42 523.50 24.46 L523.50 47.54 C523.50 54.58 523.50 58.11 522.45 61.28 L522.30 61.90 C520.80 66.03 517.53 69.30 513.40 70.80 L512.78 70.95 C509.61 72.00 506.08 72.00 499.04 72.00 L24.46 72.00 C17.42 72.00 13.89 72.00 10.72 70.95 L10.10 70.80 C5.97 69.30 2.70 66.03 1.20 61.90 L1.05 61.28 C0.00 58.11 0.00 54.58 0.00 47.54 L0.00 24.46 C0.00 17.42 0.00 13.89 1.05 10.72 L1.20 10.10 C2.70 5.97 5.97 2.70 10.10 1.20 L10.72 1.05 C13.89 0.00 17.42 0.00 24.46 0.00 Z M23.40 2.00 L500.10 2.00 C506.26 2.00 509.34 2.00 512.12 2.92 L512.66 3.05 C516.28 4.37 519.13 7.22 520.45 10.84 L520.58 11.38 C521.50 14.16 521.50 17.24 521.50 23.40 L521.50 48.60 C521.50 54.76 521.50 57.84 520.58 60.62 L520.45 61.16 C519.13 64.78 516.28 67.63 512.66 68.95 L512.12 69.08 C509.34 70.00 506.26 70.00 500.10 70.00 L23.40 70.00 C17.24 70.00 14.16 70.00 11.38 69.08 L10.84 68.95 C7.22 67.63 4.37 64.78 3.05 61.16 L2.92 60.62 C2.00 57.84 2.00 54.76 2.00 48.60 L2.00 23.40 C2.00 17.24 2.00 14.16 2.92 11.38 L3.05 10.84 C4.37 7.22 7.22 4.37 10.84 3.05 L11.38 2.92 C14.16 2.00 17.24 2.00 23.40 2.00 Z');"></div>
<span class="t" style="top:1546.82px;font-size:41.2px;color:#de33f0;letter-spacing:-0.541px;left:1250.02px;">Tertian tetrads</span>
<button style="left:1656.05px;top:1511.00px;width:523.50px;height:72.00px;clip-path:path('M24.46 0.00 L499.04 0.00 C506.08 0.00 509.61 0.00 512.78 1.05 L513.40 1.20 C517.53 2.70 520.80 5.97 522.30 10.10 L522.45 10.72 C523.50 13.89 523.50 17.42 523.50 24.46 L523.50 47.54 C523.50 54.58 523.50 58.11 522.45 61.28 L522.30 61.90 C520.80 66.03 517.53 69.30 513.40 70.80 L512.78 70.95 C509.61 72.00 506.08 72.00 499.04 72.00 L24.46 72.00 C17.42 72.00 13.89 72.00 10.72 70.95 L10.10 70.80 C5.97 69.30 2.70 66.03 1.20 61.90 L1.05 61.28 C0.00 58.11 0.00 54.58 0.00 47.54 L0.00 24.46 C0.00 17.42 0.00 13.89 1.05 10.72 L1.20 10.10 C2.70 5.97 5.97 2.70 10.10 1.20 L10.72 1.05 C13.89 0.00 17.42 0.00 24.46 0.00 Z');background:transparent;"></button>
<div style="left:1656.05px;top:1511.00px;width:523.50px;height:72.00px;background:#de33f0;clip-path:path(evenodd,'M24.46 0.00 L499.04 0.00 C506.08 0.00 509.61 0.00 512.78 1.05 L513.40 1.20 C517.53 2.70 520.80 5.97 522.30 10.10 L522.45 10.72 C523.50 13.89 523.50 17.42 523.50 24.46 L523.50 47.54 C523.50 54.58 523.50 58.11 522.45 61.28 L522.30 61.90 C520.80 66.03 517.53 69.30 513.40 70.80 L512.78 70.95 C509.61 72.00 506.08 72.00 499.04 72.00 L24.46 72.00 C17.42 72.00 13.89 72.00 10.72 70.95 L10.10 70.80 C5.97 69.30 2.70 66.03 1.20 61.90 L1.05 61.28 C0.00 58.11 0.00 54.58 0.00 47.54 L0.00 24.46 C0.00 17.42 0.00 13.89 1.05 10.72 L1.20 10.10 C2.70 5.97 5.97 2.70 10.10 1.20 L10.72 1.05 C13.89 0.00 17.42 0.00 24.46 0.00 Z M23.40 2.00 L500.10 2.00 C506.26 2.00 509.34 2.00 512.12 2.92 L512.66 3.05 C516.28 4.37 519.13 7.22 520.45 10.84 L520.58 11.38 C521.50 14.16 521.50 17.24 521.50 23.40 L521.50 48.60 C521.50 54.76 521.50 57.84 520.58 60.62 L520.45 61.16 C519.13 64.78 516.28 67.63 512.66 68.95 L512.12 69.08 C509.34 70.00 506.26 70.00 500.10 70.00 L23.40 70.00 C17.24 70.00 14.16 70.00 11.38 69.08 L10.84 68.95 C7.22 67.63 4.37 64.78 3.05 61.16 L2.92 60.62 C2.00 57.84 2.00 54.76 2.00 48.60 L2.00 23.40 C2.00 17.24 2.00 14.16 2.92 11.38 L3.05 10.84 C4.37 7.22 7.22 4.37 10.84 3.05 L11.38 2.92 C14.16 2.00 17.24 2.00 23.40 2.00 Z');"></div>
<span class="t" style="top:1546.82px;font-size:41.2px;color:#de33f0;letter-spacing:-0.152px;left:1747.67px;">Non-tertian tetrads</span>
<button style="left:2197.40px;top:1511.00px;width:523.50px;height:72.00px;clip-path:path('M24.46 0.00 L499.04 0.00 C506.08 0.00 509.61 0.00 512.78 1.05 L513.40 1.20 C517.53 2.70 520.80 5.97 522.30 10.10 L522.45 10.72 C523.50 13.89 523.50 17.42 523.50 24.46 L523.50 47.54 C523.50 54.58 523.50 58.11 522.45 61.28 L522.30 61.90 C520.80 66.03 517.53 69.30 513.40 70.80 L512.78 70.95 C509.61 72.00 506.08 72.00 499.04 72.00 L24.46 72.00 C17.42 72.00 13.89 72.00 10.72 70.95 L10.10 70.80 C5.97 69.30 2.70 66.03 1.20 61.90 L1.05 61.28 C0.00 58.11 0.00 54.58 0.00 47.54 L0.00 24.46 C0.00 17.42 0.00 13.89 1.05 10.72 L1.20 10.10 C2.70 5.97 5.97 2.70 10.10 1.20 L10.72 1.05 C13.89 0.00 17.42 0.00 24.46 0.00 Z');background:transparent;"></button>
<div style="left:2197.40px;top:1511.00px;width:523.50px;height:72.00px;background:#de33f0;clip-path:path(evenodd,'M24.46 0.00 L499.04 0.00 C506.08 0.00 509.61 0.00 512.78 1.05 L513.40 1.20 C517.53 2.70 520.80 5.97 522.30 10.10 L522.45 10.72 C523.50 13.89 523.50 17.42 523.50 24.46 L523.50 47.54 C523.50 54.58 523.50 58.11 522.45 61.28 L522.30 61.90 C520.80 66.03 517.53 69.30 513.40 70.80 L512.78 70.95 C509.61 72.00 506.08 72.00 499.04 72.00 L24.46 72.00 C17.42 72.00 13.89 72.00 10.72 70.95 L10.10 70.80 C5.97 69.30 2.70 66.03 1.20 61.90 L1.05 61.28 C0.00 58.11 0.00 54.58 0.00 47.54 L0.00 24.46 C0.00 17.42 0.00 13.89 1.05 10.72 L1.20 10.10 C2.70 5.97 5.97 2.70 10.10 1.20 L10.72 1.05 C13.89 0.00 17.42 0.00 24.46 0.00 Z M23.40 2.00 L500.10 2.00 C506.26 2.00 509.34 2.00 512.12 2.92 L512.66 3.05 C516.28 4.37 519.13 7.22 520.45 10.84 L520.58 11.38 C521.50 14.16 521.50 17.24 521.50 23.40 L521.50 48.60 C521.50 54.76 521.50 57.84 520.58 60.62 L520.45 61.16 C519.13 64.78 516.28 67.63 512.66 68.95 L512.12 69.08 C509.34 70.00 506.26 70.00 500.10 70.00 L23.40 70.00 C17.24 70.00 14.16 70.00 11.38 69.08 L10.84 68.95 C7.22 67.63 4.37 64.78 3.05 61.16 L2.92 60.62 C2.00 57.84 2.00 54.76 2.00 48.60 L2.00 23.40 C2.00 17.24 2.00 14.16 2.92 11.38 L3.05 10.84 C4.37 7.22 7.22 4.37 10.84 3.05 L11.38 2.92 C14.16 2.00 17.24 2.00 23.40 2.00 Z');"></div>
<span class="t" style="top:1546.82px;font-size:41.2px;color:#de33f0;letter-spacing:-0.300px;left:2336.36px;">Circle of fifths</span>
</nav>
<div style="left:32.00px;top:1611.90px;width:2688.00px;height:1.00px;background:#39393b;"></div>
<h2 class="t" style="top:1665.45px;font-size:33.9px;color:#fff;font-weight:700;letter-spacing:-0.176px;left:1090.53px;">Harmonization of the selected scale</h2>
<section>
<div style="left:32.00px;top:1722.00px;width:102.38px;height:43.80px;background:#0d2740;clip-path:path('M21.40 0.00 L80.98 0.00 C87.15 0.00 90.23 0.00 93.01 0.92 L93.54 1.05 C97.17 2.37 100.02 5.22 101.34 8.84 L101.47 9.38 C102.38 12.16 102.38 15.24 102.38 21.40 L102.38 22.40 C102.38 28.56 102.38 31.64 101.47 34.42 L101.34 34.96 C100.02 38.58 97.17 41.43 93.54 42.75 L93.01 42.88 C90.23 43.80 87.15 43.80 80.98 43.80 L21.40 43.80 C15.24 43.80 12.16 43.80 9.38 42.88 L8.84 42.75 C5.22 41.43 2.37 38.58 1.05 34.96 L0.92 34.42 C0.00 31.64 0.00 28.56 0.00 22.40 L0.00 21.40 C0.00 15.24 0.00 12.16 0.92 9.38 L1.05 8.84 C2.37 5.22 5.22 2.37 8.84 1.05 L9.38 0.92 C12.16 0.00 15.24 0.00 21.40 0.00 Z');"></div>
<div style="left:135.38px;top:1722.00px;width:102.38px;height:43.80px;background:#0d2740;clip-path:path('M21.40 0.00 L80.98 0.00 C87.15 0.00 90.23 0.00 93.01 0.92 L93.54 1.05 C97.17 2.37 100.02 5.22 101.34 8.84 L101.47 9.38 C102.38 12.16 102.38 15.24 102.38 21.40 L102.38 22.40 C102.38 28.56 102.38 31.64 101.47 34.42 L101.34 34.96 C100.02 38.58 97.17 41.43 93.54 42.75 L93.01 42.88 C90.23 43.80 87.15 43.80 80.98 43.80 L21.40 43.80 C15.24 43.80 12.16 43.80 9.38 42.88 L8.84 42.75 C5.22 41.43 2.37 38.58 1.05 34.96 L0.92 34.42 C0.00 31.64 0.00 28.56 0.00 22.40 L0.00 21.40 C0.00 15.24 0.00 12.16 0.92 9.38 L1.05 8.84 C2.37 5.22 5.22 2.37 8.84 1.05 L9.38 0.92 C12.16 0.00 15.24 0.00 21.40 0.00 Z');"></div>
<div style="left:238.77px;top:1722.00px;width:102.38px;height:43.80px;background:#0d2740;clip-path:path('M21.40 0.00 L80.98 0.00 C87.15 0.00 90.23 0.00 93.01 0.92 L93.54 1.05 C97.17 2.37 100.02 5.22 101.34 8.84 L101.47 9.38 C102.38 12.16 102.38 15.24 102.38 21.40 L102.38 22.40 C102.38 28.56 102.38 31.64 101.47 34.42 L101.34 34.96 C100.02 38.58 97.17 41.43 93.54 42.75 L93.01 42.88 C90.23 43.80 87.15 43.80 80.98 43.80 L21.40 43.80 C15.24 43.80 12.16 43.80 9.38 42.88 L8.84 42.75 C5.22 41.43 2.37 38.58 1.05 34.96 L0.92 34.42 C0.00 31.64 0.00 28.56 0.00 22.40 L0.00 21.40 C0.00 15.24 0.00 12.16 0.92 9.38 L1.05 8.84 C2.37 5.22 5.22 2.37 8.84 1.05 L9.38 0.92 C12.16 0.00 15.24 0.00 21.40 0.00 Z');"></div>
<span class="t" style="top:1744.55px;font-size:23.8px;color:#cfd2d6;-webkit-text-stroke:0.45px #cfd2d6;left:289.96px;transform:translateX(-50%);">1</span>
<div style="left:342.15px;top:1722.00px;width:102.38px;height:43.80px;background:#0d2740;clip-path:path('M21.40 0.00 L80.98 0.00 C87.15 0.00 90.23 0.00 93.01 0.92 L93.54 1.05 C97.17 2.37 100.02 5.22 101.34 8.84 L101.47 9.38 C102.38 12.16 102.38 15.24 102.38 21.40 L102.38 22.40 C102.38 28.56 102.38 31.64 101.47 34.42 L101.34 34.96 C100.02 38.58 97.17 41.43 93.54 42.75 L93.01 42.88 C90.23 43.80 87.15 43.80 80.98 43.80 L21.40 43.80 C15.24 43.80 12.16 43.80 9.38 42.88 L8.84 42.75 C5.22 41.43 2.37 38.58 1.05 34.96 L0.92 34.42 C0.00 31.64 0.00 28.56 0.00 22.40 L0.00 21.40 C0.00 15.24 0.00 12.16 0.92 9.38 L1.05 8.84 C2.37 5.22 5.22 2.37 8.84 1.05 L9.38 0.92 C12.16 0.00 15.24 0.00 21.40 0.00 Z');"></div>
<div style="left:445.54px;top:1722.00px;width:102.38px;height:43.80px;background:#0d2740;clip-path:path('M21.40 0.00 L80.98 0.00 C87.15 0.00 90.23 0.00 93.01 0.92 L93.54 1.05 C97.17 2.37 100.02 5.22 101.34 8.84 L101.47 9.38 C102.38 12.16 102.38 15.24 102.38 21.40 L102.38 22.40 C102.38 28.56 102.38 31.64 101.47 34.42 L101.34 34.96 C100.02 38.58 97.17 41.43 93.54 42.75 L93.01 42.88 C90.23 43.80 87.15 43.80 80.98 43.80 L21.40 43.80 C15.24 43.80 12.16 43.80 9.38 42.88 L8.84 42.75 C5.22 41.43 2.37 38.58 1.05 34.96 L0.92 34.42 C0.00 31.64 0.00 28.56 0.00 22.40 L0.00 21.40 C0.00 15.24 0.00 12.16 0.92 9.38 L1.05 8.84 C2.37 5.22 5.22 2.37 8.84 1.05 L9.38 0.92 C12.16 0.00 15.24 0.00 21.40 0.00 Z');"></div>
<span class="t" style="top:1744.55px;font-size:23.8px;color:#cfd2d6;-webkit-text-stroke:0.45px #cfd2d6;left:496.73px;transform:translateX(-50%);">2</span>
<div style="left:548.92px;top:1722.00px;width:102.38px;height:43.80px;background:#0d2740;clip-path:path('M21.40 0.00 L80.98 0.00 C87.15 0.00 90.23 0.00 93.01 0.92 L93.54 1.05 C97.17 2.37 100.02 5.22 101.34 8.84 L101.47 9.38 C102.38 12.16 102.38 15.24 102.38 21.40 L102.38 22.40 C102.38 28.56 102.38 31.64 101.47 34.42 L101.34 34.96 C100.02 38.58 97.17 41.43 93.54 42.75 L93.01 42.88 C90.23 43.80 87.15 43.80 80.98 43.80 L21.40 43.80 C15.24 43.80 12.16 43.80 9.38 42.88 L8.84 42.75 C5.22 41.43 2.37 38.58 1.05 34.96 L0.92 34.42 C0.00 31.64 0.00 28.56 0.00 22.40 L0.00 21.40 C0.00 15.24 0.00 12.16 0.92 9.38 L1.05 8.84 C2.37 5.22 5.22 2.37 8.84 1.05 L9.38 0.92 C12.16 0.00 15.24 0.00 21.40 0.00 Z');"></div>
<div style="left:652.31px;top:1722.00px;width:102.38px;height:43.80px;background:#0d2740;clip-path:path('M21.40 0.00 L80.98 0.00 C87.15 0.00 90.23 0.00 93.01 0.92 L93.54 1.05 C97.17 2.37 100.02 5.22 101.34 8.84 L101.47 9.38 C102.38 12.16 102.38 15.24 102.38 21.40 L102.38 22.40 C102.38 28.56 102.38 31.64 101.47 34.42 L101.34 34.96 C100.02 38.58 97.17 41.43 93.54 42.75 L93.01 42.88 C90.23 43.80 87.15 43.80 80.98 43.80 L21.40 43.80 C15.24 43.80 12.16 43.80 9.38 42.88 L8.84 42.75 C5.22 41.43 2.37 38.58 1.05 34.96 L0.92 34.42 C0.00 31.64 0.00 28.56 0.00 22.40 L0.00 21.40 C0.00 15.24 0.00 12.16 0.92 9.38 L1.05 8.84 C2.37 5.22 5.22 2.37 8.84 1.05 L9.38 0.92 C12.16 0.00 15.24 0.00 21.40 0.00 Z');"></div>
<span class="t" style="top:1744.55px;font-size:23.8px;color:#cfd2d6;-webkit-text-stroke:0.45px #cfd2d6;left:703.50px;transform:translateX(-50%);">3</span>
<div style="left:755.69px;top:1722.00px;width:102.38px;height:43.80px;background:#0d2740;clip-path:path('M21.40 0.00 L80.98 0.00 C87.15 0.00 90.23 0.00 93.01 0.92 L93.54 1.05 C97.17 2.37 100.02 5.22 101.34 8.84 L101.47 9.38 C102.38 12.16 102.38 15.24 102.38 21.40 L102.38 22.40 C102.38 28.56 102.38 31.64 101.47 34.42 L101.34 34.96 C100.02 38.58 97.17 41.43 93.54 42.75 L93.01 42.88 C90.23 43.80 87.15 43.80 80.98 43.80 L21.40 43.80 C15.24 43.80 12.16 43.80 9.38 42.88 L8.84 42.75 C5.22 41.43 2.37 38.58 1.05 34.96 L0.92 34.42 C0.00 31.64 0.00 28.56 0.00 22.40 L0.00 21.40 C0.00 15.24 0.00 12.16 0.92 9.38 L1.05 8.84 C2.37 5.22 5.22 2.37 8.84 1.05 L9.38 0.92 C12.16 0.00 15.24 0.00 21.40 0.00 Z');"></div>
<span class="t" style="top:1744.55px;font-size:23.8px;color:#cfd2d6;-webkit-text-stroke:0.45px #cfd2d6;left:806.88px;transform:translateX(-50%);">4</span>
<div style="left:859.08px;top:1722.00px;width:102.38px;height:43.80px;background:#0d2740;clip-path:path('M21.40 0.00 L80.98 0.00 C87.15 0.00 90.23 0.00 93.01 0.92 L93.54 1.05 C97.17 2.37 100.02 5.22 101.34 8.84 L101.47 9.38 C102.38 12.16 102.38 15.24 102.38 21.40 L102.38 22.40 C102.38 28.56 102.38 31.64 101.47 34.42 L101.34 34.96 C100.02 38.58 97.17 41.43 93.54 42.75 L93.01 42.88 C90.23 43.80 87.15 43.80 80.98 43.80 L21.40 43.80 C15.24 43.80 12.16 43.80 9.38 42.88 L8.84 42.75 C5.22 41.43 2.37 38.58 1.05 34.96 L0.92 34.42 C0.00 31.64 0.00 28.56 0.00 22.40 L0.00 21.40 C0.00 15.24 0.00 12.16 0.92 9.38 L1.05 8.84 C2.37 5.22 5.22 2.37 8.84 1.05 L9.38 0.92 C12.16 0.00 15.24 0.00 21.40 0.00 Z');"></div>
<div style="left:962.46px;top:1722.00px;width:102.38px;height:43.80px;background:#0d2740;clip-path:path('M21.40 0.00 L80.98 0.00 C87.15 0.00 90.23 0.00 93.01 0.92 L93.54 1.05 C97.17 2.37 100.02 5.22 101.34 8.84 L101.47 9.38 C102.38 12.16 102.38 15.24 102.38 21.40 L102.38 22.40 C102.38 28.56 102.38 31.64 101.47 34.42 L101.34 34.96 C100.02 38.58 97.17 41.43 93.54 42.75 L93.01 42.88 C90.23 43.80 87.15 43.80 80.98 43.80 L21.40 43.80 C15.24 43.80 12.16 43.80 9.38 42.88 L8.84 42.75 C5.22 41.43 2.37 38.58 1.05 34.96 L0.92 34.42 C0.00 31.64 0.00 28.56 0.00 22.40 L0.00 21.40 C0.00 15.24 0.00 12.16 0.92 9.38 L1.05 8.84 C2.37 5.22 5.22 2.37 8.84 1.05 L9.38 0.92 C12.16 0.00 15.24 0.00 21.40 0.00 Z');"></div>
<span class="t" style="top:1744.55px;font-size:23.8px;color:#cfd2d6;-webkit-text-stroke:0.45px #cfd2d6;left:1013.65px;transform:translateX(-50%);">5</span>
<div style="left:1065.85px;top:1722.00px;width:102.38px;height:43.80px;background:#0d2740;clip-path:path('M21.40 0.00 L80.98 0.00 C87.15 0.00 90.23 0.00 93.01 0.92 L93.54 1.05 C97.17 2.37 100.02 5.22 101.34 8.84 L101.47 9.38 C102.38 12.16 102.38 15.24 102.38 21.40 L102.38 22.40 C102.38 28.56 102.38 31.64 101.47 34.42 L101.34 34.96 C100.02 38.58 97.17 41.43 93.54 42.75 L93.01 42.88 C90.23 43.80 87.15 43.80 80.98 43.80 L21.40 43.80 C15.24 43.80 12.16 43.80 9.38 42.88 L8.84 42.75 C5.22 41.43 2.37 38.58 1.05 34.96 L0.92 34.42 C0.00 31.64 0.00 28.56 0.00 22.40 L0.00 21.40 C0.00 15.24 0.00 12.16 0.92 9.38 L1.05 8.84 C2.37 5.22 5.22 2.37 8.84 1.05 L9.38 0.92 C12.16 0.00 15.24 0.00 21.40 0.00 Z');"></div>
<div style="left:1169.23px;top:1722.00px;width:102.38px;height:43.80px;background:#0d2740;clip-path:path('M21.40 0.00 L80.98 0.00 C87.15 0.00 90.23 0.00 93.01 0.92 L93.54 1.05 C97.17 2.37 100.02 5.22 101.34 8.84 L101.47 9.38 C102.38 12.16 102.38 15.24 102.38 21.40 L102.38 22.40 C102.38 28.56 102.38 31.64 101.47 34.42 L101.34 34.96 C100.02 38.58 97.17 41.43 93.54 42.75 L93.01 42.88 C90.23 43.80 87.15 43.80 80.98 43.80 L21.40 43.80 C15.24 43.80 12.16 43.80 9.38 42.88 L8.84 42.75 C5.22 41.43 2.37 38.58 1.05 34.96 L0.92 34.42 C0.00 31.64 0.00 28.56 0.00 22.40 L0.00 21.40 C0.00 15.24 0.00 12.16 0.92 9.38 L1.05 8.84 C2.37 5.22 5.22 2.37 8.84 1.05 L9.38 0.92 C12.16 0.00 15.24 0.00 21.40 0.00 Z');"></div>
<span class="t" style="top:1744.55px;font-size:23.8px;color:#cfd2d6;-webkit-text-stroke:0.45px #cfd2d6;left:1220.42px;transform:translateX(-50%);">6</span>
<div style="left:1272.62px;top:1722.00px;width:102.38px;height:43.80px;background:#0d2740;clip-path:path('M21.40 0.00 L80.98 0.00 C87.15 0.00 90.23 0.00 93.01 0.92 L93.54 1.05 C97.17 2.37 100.02 5.22 101.34 8.84 L101.47 9.38 C102.38 12.16 102.38 15.24 102.38 21.40 L102.38 22.40 C102.38 28.56 102.38 31.64 101.47 34.42 L101.34 34.96 C100.02 38.58 97.17 41.43 93.54 42.75 L93.01 42.88 C90.23 43.80 87.15 43.80 80.98 43.80 L21.40 43.80 C15.24 43.80 12.16 43.80 9.38 42.88 L8.84 42.75 C5.22 41.43 2.37 38.58 1.05 34.96 L0.92 34.42 C0.00 31.64 0.00 28.56 0.00 22.40 L0.00 21.40 C0.00 15.24 0.00 12.16 0.92 9.38 L1.05 8.84 C2.37 5.22 5.22 2.37 8.84 1.05 L9.38 0.92 C12.16 0.00 15.24 0.00 21.40 0.00 Z');"></div>
<div style="left:1376.00px;top:1722.00px;width:102.38px;height:43.80px;background:#0d2740;clip-path:path('M21.40 0.00 L80.98 0.00 C87.15 0.00 90.23 0.00 93.01 0.92 L93.54 1.05 C97.17 2.37 100.02 5.22 101.34 8.84 L101.47 9.38 C102.38 12.16 102.38 15.24 102.38 21.40 L102.38 22.40 C102.38 28.56 102.38 31.64 101.47 34.42 L101.34 34.96 C100.02 38.58 97.17 41.43 93.54 42.75 L93.01 42.88 C90.23 43.80 87.15 43.80 80.98 43.80 L21.40 43.80 C15.24 43.80 12.16 43.80 9.38 42.88 L8.84 42.75 C5.22 41.43 2.37 38.58 1.05 34.96 L0.92 34.42 C0.00 31.64 0.00 28.56 0.00 22.40 L0.00 21.40 C0.00 15.24 0.00 12.16 0.92 9.38 L1.05 8.84 C2.37 5.22 5.22 2.37 8.84 1.05 L9.38 0.92 C12.16 0.00 15.24 0.00 21.40 0.00 Z');"></div>
<span class="t" style="top:1744.55px;font-size:23.8px;color:#cfd2d6;-webkit-text-stroke:0.45px #cfd2d6;left:1427.19px;transform:translateX(-50%);">7</span>
<div style="left:1479.38px;top:1722.00px;width:102.38px;height:43.80px;background:#0d2740;clip-path:path('M21.40 0.00 L80.98 0.00 C87.15 0.00 90.23 0.00 93.01 0.92 L93.54 1.05 C97.17 2.37 100.02 5.22 101.34 8.84 L101.47 9.38 C102.38 12.16 102.38 15.24 102.38 21.40 L102.38 22.40 C102.38 28.56 102.38 31.64 101.47 34.42 L101.34 34.96 C100.02 38.58 97.17 41.43 93.54 42.75 L93.01 42.88 C90.23 43.80 87.15 43.80 80.98 43.80 L21.40 43.80 C15.24 43.80 12.16 43.80 9.38 42.88 L8.84 42.75 C5.22 41.43 2.37 38.58 1.05 34.96 L0.92 34.42 C0.00 31.64 0.00 28.56 0.00 22.40 L0.00 21.40 C0.00 15.24 0.00 12.16 0.92 9.38 L1.05 8.84 C2.37 5.22 5.22 2.37 8.84 1.05 L9.38 0.92 C12.16 0.00 15.24 0.00 21.40 0.00 Z');"></div>
<span class="t" style="top:1744.55px;font-size:23.8px;color:#cfd2d6;-webkit-text-stroke:0.45px #cfd2d6;left:1530.58px;transform:translateX(-50%);">8</span>
<div style="left:1582.77px;top:1722.00px;width:102.38px;height:43.80px;background:#0d2740;clip-path:path('M21.40 0.00 L80.98 0.00 C87.15 0.00 90.23 0.00 93.01 0.92 L93.54 1.05 C97.17 2.37 100.02 5.22 101.34 8.84 L101.47 9.38 C102.38 12.16 102.38 15.24 102.38 21.40 L102.38 22.40 C102.38 28.56 102.38 31.64 101.47 34.42 L101.34 34.96 C100.02 38.58 97.17 41.43 93.54 42.75 L93.01 42.88 C90.23 43.80 87.15 43.80 80.98 43.80 L21.40 43.80 C15.24 43.80 12.16 43.80 9.38 42.88 L8.84 42.75 C5.22 41.43 2.37 38.58 1.05 34.96 L0.92 34.42 C0.00 31.64 0.00 28.56 0.00 22.40 L0.00 21.40 C0.00 15.24 0.00 12.16 0.92 9.38 L1.05 8.84 C2.37 5.22 5.22 2.37 8.84 1.05 L9.38 0.92 C12.16 0.00 15.24 0.00 21.40 0.00 Z');"></div>
<span class="t" style="top:1744.55px;font-size:23.8px;color:#cfd2d6;-webkit-text-stroke:0.45px #cfd2d6;left:1633.96px;transform:translateX(-50%);"><span class="fl" style="font-size:17.6px;top:-3.09px;transform:scaleX(1.3);-webkit-text-stroke:0.52px #cfd2d6;margin:0 0.83px 0 0.48px">♭</span>9</span>
<div style="left:1686.15px;top:1722.00px;width:102.38px;height:43.80px;background:#0d2740;clip-path:path('M21.40 0.00 L80.98 0.00 C87.15 0.00 90.23 0.00 93.01 0.92 L93.54 1.05 C97.17 2.37 100.02 5.22 101.34 8.84 L101.47 9.38 C102.38 12.16 102.38 15.24 102.38 21.40 L102.38 22.40 C102.38 28.56 102.38 31.64 101.47 34.42 L101.34 34.96 C100.02 38.58 97.17 41.43 93.54 42.75 L93.01 42.88 C90.23 43.80 87.15 43.80 80.98 43.80 L21.40 43.80 C15.24 43.80 12.16 43.80 9.38 42.88 L8.84 42.75 C5.22 41.43 2.37 38.58 1.05 34.96 L0.92 34.42 C0.00 31.64 0.00 28.56 0.00 22.40 L0.00 21.40 C0.00 15.24 0.00 12.16 0.92 9.38 L1.05 8.84 C2.37 5.22 5.22 2.37 8.84 1.05 L9.38 0.92 C12.16 0.00 15.24 0.00 21.40 0.00 Z');"></div>
<span class="t" style="top:1744.55px;font-size:23.8px;color:#cfd2d6;-webkit-text-stroke:0.45px #cfd2d6;left:1737.35px;transform:translateX(-50%);">9</span>
<div style="left:1789.54px;top:1722.00px;width:102.38px;height:43.80px;background:#0d2740;clip-path:path('M21.40 0.00 L80.98 0.00 C87.15 0.00 90.23 0.00 93.01 0.92 L93.54 1.05 C97.17 2.37 100.02 5.22 101.34 8.84 L101.47 9.38 C102.38 12.16 102.38 15.24 102.38 21.40 L102.38 22.40 C102.38 28.56 102.38 31.64 101.47 34.42 L101.34 34.96 C100.02 38.58 97.17 41.43 93.54 42.75 L93.01 42.88 C90.23 43.80 87.15 43.80 80.98 43.80 L21.40 43.80 C15.24 43.80 12.16 43.80 9.38 42.88 L8.84 42.75 C5.22 41.43 2.37 38.58 1.05 34.96 L0.92 34.42 C0.00 31.64 0.00 28.56 0.00 22.40 L0.00 21.40 C0.00 15.24 0.00 12.16 0.92 9.38 L1.05 8.84 C2.37 5.22 5.22 2.37 8.84 1.05 L9.38 0.92 C12.16 0.00 15.24 0.00 21.40 0.00 Z');"></div>
<span class="t" style="top:1744.55px;font-size:23.8px;color:#cfd2d6;-webkit-text-stroke:0.45px #cfd2d6;left:1840.73px;transform:translateX(-50%);"><span style="font-size:18.3px;position:relative;top:-2.38px;font-weight:700;margin-right:0.48px">#</span>9</span>
<div style="left:1892.92px;top:1722.00px;width:102.38px;height:43.80px;background:#0d2740;clip-path:path('M21.40 0.00 L80.98 0.00 C87.15 0.00 90.23 0.00 93.01 0.92 L93.54 1.05 C97.17 2.37 100.02 5.22 101.34 8.84 L101.47 9.38 C102.38 12.16 102.38 15.24 102.38 21.40 L102.38 22.40 C102.38 28.56 102.38 31.64 101.47 34.42 L101.34 34.96 C100.02 38.58 97.17 41.43 93.54 42.75 L93.01 42.88 C90.23 43.80 87.15 43.80 80.98 43.80 L21.40 43.80 C15.24 43.80 12.16 43.80 9.38 42.88 L8.84 42.75 C5.22 41.43 2.37 38.58 1.05 34.96 L0.92 34.42 C0.00 31.64 0.00 28.56 0.00 22.40 L0.00 21.40 C0.00 15.24 0.00 12.16 0.92 9.38 L1.05 8.84 C2.37 5.22 5.22 2.37 8.84 1.05 L9.38 0.92 C12.16 0.00 15.24 0.00 21.40 0.00 Z');"></div>
<span class="t" style="top:1744.55px;font-size:23.8px;color:#cfd2d6;-webkit-text-stroke:0.45px #cfd2d6;left:1944.12px;transform:translateX(-50%);"><span class="fl" style="font-size:17.6px;top:-3.09px;transform:scaleX(1.3);-webkit-text-stroke:0.52px #cfd2d6;margin:0 0.83px 0 0.48px">♭</span>11</span>
<div style="left:1996.31px;top:1722.00px;width:102.38px;height:43.80px;background:#0d2740;clip-path:path('M21.40 0.00 L80.98 0.00 C87.15 0.00 90.23 0.00 93.01 0.92 L93.54 1.05 C97.17 2.37 100.02 5.22 101.34 8.84 L101.47 9.38 C102.38 12.16 102.38 15.24 102.38 21.40 L102.38 22.40 C102.38 28.56 102.38 31.64 101.47 34.42 L101.34 34.96 C100.02 38.58 97.17 41.43 93.54 42.75 L93.01 42.88 C90.23 43.80 87.15 43.80 80.98 43.80 L21.40 43.80 C15.24 43.80 12.16 43.80 9.38 42.88 L8.84 42.75 C5.22 41.43 2.37 38.58 1.05 34.96 L0.92 34.42 C0.00 31.64 0.00 28.56 0.00 22.40 L0.00 21.40 C0.00 15.24 0.00 12.16 0.92 9.38 L1.05 8.84 C2.37 5.22 5.22 2.37 8.84 1.05 L9.38 0.92 C12.16 0.00 15.24 0.00 21.40 0.00 Z');"></div>
<span class="t" style="top:1744.55px;font-size:23.8px;color:#cfd2d6;-webkit-text-stroke:0.45px #cfd2d6;left:2047.50px;transform:translateX(-50%);">11</span>
<div style="left:2099.69px;top:1722.00px;width:102.38px;height:43.80px;background:#0d2740;clip-path:path('M21.40 0.00 L80.98 0.00 C87.15 0.00 90.23 0.00 93.01 0.92 L93.54 1.05 C97.17 2.37 100.02 5.22 101.34 8.84 L101.47 9.38 C102.38 12.16 102.38 15.24 102.38 21.40 L102.38 22.40 C102.38 28.56 102.38 31.64 101.47 34.42 L101.34 34.96 C100.02 38.58 97.17 41.43 93.54 42.75 L93.01 42.88 C90.23 43.80 87.15 43.80 80.98 43.80 L21.40 43.80 C15.24 43.80 12.16 43.80 9.38 42.88 L8.84 42.75 C5.22 41.43 2.37 38.58 1.05 34.96 L0.92 34.42 C0.00 31.64 0.00 28.56 0.00 22.40 L0.00 21.40 C0.00 15.24 0.00 12.16 0.92 9.38 L1.05 8.84 C2.37 5.22 5.22 2.37 8.84 1.05 L9.38 0.92 C12.16 0.00 15.24 0.00 21.40 0.00 Z');"></div>
<span class="t" style="top:1744.55px;font-size:23.8px;color:#cfd2d6;-webkit-text-stroke:0.45px #cfd2d6;left:2150.88px;transform:translateX(-50%);"><span style="font-size:18.3px;position:relative;top:-2.38px;font-weight:700;margin-right:0.48px">#</span>11</span>
<div style="left:2203.08px;top:1722.00px;width:102.38px;height:43.80px;background:#0d2740;clip-path:path('M21.40 0.00 L80.98 0.00 C87.15 0.00 90.23 0.00 93.01 0.92 L93.54 1.05 C97.17 2.37 100.02 5.22 101.34 8.84 L101.47 9.38 C102.38 12.16 102.38 15.24 102.38 21.40 L102.38 22.40 C102.38 28.56 102.38 31.64 101.47 34.42 L101.34 34.96 C100.02 38.58 97.17 41.43 93.54 42.75 L93.01 42.88 C90.23 43.80 87.15 43.80 80.98 43.80 L21.40 43.80 C15.24 43.80 12.16 43.80 9.38 42.88 L8.84 42.75 C5.22 41.43 2.37 38.58 1.05 34.96 L0.92 34.42 C0.00 31.64 0.00 28.56 0.00 22.40 L0.00 21.40 C0.00 15.24 0.00 12.16 0.92 9.38 L1.05 8.84 C2.37 5.22 5.22 2.37 8.84 1.05 L9.38 0.92 C12.16 0.00 15.24 0.00 21.40 0.00 Z');"></div>
<div style="left:2306.46px;top:1722.00px;width:102.38px;height:43.80px;background:#0d2740;clip-path:path('M21.40 0.00 L80.98 0.00 C87.15 0.00 90.23 0.00 93.01 0.92 L93.54 1.05 C97.17 2.37 100.02 5.22 101.34 8.84 L101.47 9.38 C102.38 12.16 102.38 15.24 102.38 21.40 L102.38 22.40 C102.38 28.56 102.38 31.64 101.47 34.42 L101.34 34.96 C100.02 38.58 97.17 41.43 93.54 42.75 L93.01 42.88 C90.23 43.80 87.15 43.80 80.98 43.80 L21.40 43.80 C15.24 43.80 12.16 43.80 9.38 42.88 L8.84 42.75 C5.22 41.43 2.37 38.58 1.05 34.96 L0.92 34.42 C0.00 31.64 0.00 28.56 0.00 22.40 L0.00 21.40 C0.00 15.24 0.00 12.16 0.92 9.38 L1.05 8.84 C2.37 5.22 5.22 2.37 8.84 1.05 L9.38 0.92 C12.16 0.00 15.24 0.00 21.40 0.00 Z');"></div>
<span class="t" style="top:1744.55px;font-size:23.8px;color:#cfd2d6;-webkit-text-stroke:0.45px #cfd2d6;left:2357.65px;transform:translateX(-50%);"><span class="fl" style="font-size:17.6px;top:-3.09px;transform:scaleX(1.3);-webkit-text-stroke:0.52px #cfd2d6;margin:0 0.83px 0 0.48px">♭</span>13</span>
<div style="left:2409.85px;top:1722.00px;width:102.38px;height:43.80px;background:#0d2740;clip-path:path('M21.40 0.00 L80.98 0.00 C87.15 0.00 90.23 0.00 93.01 0.92 L93.54 1.05 C97.17 2.37 100.02 5.22 101.34 8.84 L101.47 9.38 C102.38 12.16 102.38 15.24 102.38 21.40 L102.38 22.40 C102.38 28.56 102.38 31.64 101.47 34.42 L101.34 34.96 C100.02 38.58 97.17 41.43 93.54 42.75 L93.01 42.88 C90.23 43.80 87.15 43.80 80.98 43.80 L21.40 43.80 C15.24 43.80 12.16 43.80 9.38 42.88 L8.84 42.75 C5.22 41.43 2.37 38.58 1.05 34.96 L0.92 34.42 C0.00 31.64 0.00 28.56 0.00 22.40 L0.00 21.40 C0.00 15.24 0.00 12.16 0.92 9.38 L1.05 8.84 C2.37 5.22 5.22 2.37 8.84 1.05 L9.38 0.92 C12.16 0.00 15.24 0.00 21.40 0.00 Z');"></div>
<span class="t" style="top:1744.55px;font-size:23.8px;color:#cfd2d6;-webkit-text-stroke:0.45px #cfd2d6;left:2461.04px;transform:translateX(-50%);">13</span>
<div style="left:2513.23px;top:1722.00px;width:102.38px;height:43.80px;background:#0d2740;clip-path:path('M21.40 0.00 L80.98 0.00 C87.15 0.00 90.23 0.00 93.01 0.92 L93.54 1.05 C97.17 2.37 100.02 5.22 101.34 8.84 L101.47 9.38 C102.38 12.16 102.38 15.24 102.38 21.40 L102.38 22.40 C102.38 28.56 102.38 31.64 101.47 34.42 L101.34 34.96 C100.02 38.58 97.17 41.43 93.54 42.75 L93.01 42.88 C90.23 43.80 87.15 43.80 80.98 43.80 L21.40 43.80 C15.24 43.80 12.16 43.80 9.38 42.88 L8.84 42.75 C5.22 41.43 2.37 38.58 1.05 34.96 L0.92 34.42 C0.00 31.64 0.00 28.56 0.00 22.40 L0.00 21.40 C0.00 15.24 0.00 12.16 0.92 9.38 L1.05 8.84 C2.37 5.22 5.22 2.37 8.84 1.05 L9.38 0.92 C12.16 0.00 15.24 0.00 21.40 0.00 Z');"></div>
<div style="left:2616.62px;top:1722.00px;width:102.38px;height:43.80px;background:#0d2740;clip-path:path('M21.40 0.00 L80.98 0.00 C87.15 0.00 90.23 0.00 93.01 0.92 L93.54 1.05 C97.17 2.37 100.02 5.22 101.34 8.84 L101.47 9.38 C102.38 12.16 102.38 15.24 102.38 21.40 L102.38 22.40 C102.38 28.56 102.38 31.64 101.47 34.42 L101.34 34.96 C100.02 38.58 97.17 41.43 93.54 42.75 L93.01 42.88 C90.23 43.80 87.15 43.80 80.98 43.80 L21.40 43.80 C15.24 43.80 12.16 43.80 9.38 42.88 L8.84 42.75 C5.22 41.43 2.37 38.58 1.05 34.96 L0.92 34.42 C0.00 31.64 0.00 28.56 0.00 22.40 L0.00 21.40 C0.00 15.24 0.00 12.16 0.92 9.38 L1.05 8.84 C2.37 5.22 5.22 2.37 8.84 1.05 L9.38 0.92 C12.16 0.00 15.24 0.00 21.40 0.00 Z');"></div>
<div style="left:32.00px;top:1786.00px;width:102.38px;height:43.80px;background:#18341f;clip-path:path('M21.40 0.00 L80.98 0.00 C87.15 0.00 90.23 0.00 93.01 0.92 L93.54 1.05 C97.17 2.37 100.02 5.22 101.34 8.84 L101.47 9.38 C102.38 12.16 102.38 15.24 102.38 21.40 L102.38 22.40 C102.38 28.56 102.38 31.64 101.47 34.42 L101.34 34.96 C100.02 38.58 97.17 41.43 93.54 42.75 L93.01 42.88 C90.23 43.80 87.15 43.80 80.98 43.80 L21.40 43.80 C15.24 43.80 12.16 43.80 9.38 42.88 L8.84 42.75 C5.22 41.43 2.37 38.58 1.05 34.96 L0.92 34.42 C0.00 31.64 0.00 28.56 0.00 22.40 L0.00 21.40 C0.00 15.24 0.00 12.16 0.92 9.38 L1.05 8.84 C2.37 5.22 5.22 2.37 8.84 1.05 L9.38 0.92 C12.16 0.00 15.24 0.00 21.40 0.00 Z');"></div>
<div style="left:135.38px;top:1786.00px;width:102.38px;height:43.80px;background:#18341f;clip-path:path('M21.40 0.00 L80.98 0.00 C87.15 0.00 90.23 0.00 93.01 0.92 L93.54 1.05 C97.17 2.37 100.02 5.22 101.34 8.84 L101.47 9.38 C102.38 12.16 102.38 15.24 102.38 21.40 L102.38 22.40 C102.38 28.56 102.38 31.64 101.47 34.42 L101.34 34.96 C100.02 38.58 97.17 41.43 93.54 42.75 L93.01 42.88 C90.23 43.80 87.15 43.80 80.98 43.80 L21.40 43.80 C15.24 43.80 12.16 43.80 9.38 42.88 L8.84 42.75 C5.22 41.43 2.37 38.58 1.05 34.96 L0.92 34.42 C0.00 31.64 0.00 28.56 0.00 22.40 L0.00 21.40 C0.00 15.24 0.00 12.16 0.92 9.38 L1.05 8.84 C2.37 5.22 5.22 2.37 8.84 1.05 L9.38 0.92 C12.16 0.00 15.24 0.00 21.40 0.00 Z');"></div>
<div style="left:238.77px;top:1786.00px;width:102.38px;height:43.80px;background:#18341f;clip-path:path('M21.40 0.00 L80.98 0.00 C87.15 0.00 90.23 0.00 93.01 0.92 L93.54 1.05 C97.17 2.37 100.02 5.22 101.34 8.84 L101.47 9.38 C102.38 12.16 102.38 15.24 102.38 21.40 L102.38 22.40 C102.38 28.56 102.38 31.64 101.47 34.42 L101.34 34.96 C100.02 38.58 97.17 41.43 93.54 42.75 L93.01 42.88 C90.23 43.80 87.15 43.80 80.98 43.80 L21.40 43.80 C15.24 43.80 12.16 43.80 9.38 42.88 L8.84 42.75 C5.22 41.43 2.37 38.58 1.05 34.96 L0.92 34.42 C0.00 31.64 0.00 28.56 0.00 22.40 L0.00 21.40 C0.00 15.24 0.00 12.16 0.92 9.38 L1.05 8.84 C2.37 5.22 5.22 2.37 8.84 1.05 L9.38 0.92 C12.16 0.00 15.24 0.00 21.40 0.00 Z');"></div>
<span class="t" style="top:1808.75px;font-size:23.8px;color:#cfd2d6;-webkit-text-stroke:0.45px #cfd2d6;left:289.96px;transform:translateX(-50%);">1</span>
<div style="left:342.15px;top:1786.00px;width:102.38px;height:43.80px;background:#18341f;clip-path:path('M21.40 0.00 L80.98 0.00 C87.15 0.00 90.23 0.00 93.01 0.92 L93.54 1.05 C97.17 2.37 100.02 5.22 101.34 8.84 L101.47 9.38 C102.38 12.16 102.38 15.24 102.38 21.40 L102.38 22.40 C102.38 28.56 102.38 31.64 101.47 34.42 L101.34 34.96 C100.02 38.58 97.17 41.43 93.54 42.75 L93.01 42.88 C90.23 43.80 87.15 43.80 80.98 43.80 L21.40 43.80 C15.24 43.80 12.16 43.80 9.38 42.88 L8.84 42.75 C5.22 41.43 2.37 38.58 1.05 34.96 L0.92 34.42 C0.00 31.64 0.00 28.56 0.00 22.40 L0.00 21.40 C0.00 15.24 0.00 12.16 0.92 9.38 L1.05 8.84 C2.37 5.22 5.22 2.37 8.84 1.05 L9.38 0.92 C12.16 0.00 15.24 0.00 21.40 0.00 Z');"></div>
<div style="left:445.54px;top:1786.00px;width:102.38px;height:43.80px;background:#18341f;clip-path:path('M21.40 0.00 L80.98 0.00 C87.15 0.00 90.23 0.00 93.01 0.92 L93.54 1.05 C97.17 2.37 100.02 5.22 101.34 8.84 L101.47 9.38 C102.38 12.16 102.38 15.24 102.38 21.40 L102.38 22.40 C102.38 28.56 102.38 31.64 101.47 34.42 L101.34 34.96 C100.02 38.58 97.17 41.43 93.54 42.75 L93.01 42.88 C90.23 43.80 87.15 43.80 80.98 43.80 L21.40 43.80 C15.24 43.80 12.16 43.80 9.38 42.88 L8.84 42.75 C5.22 41.43 2.37 38.58 1.05 34.96 L0.92 34.42 C0.00 31.64 0.00 28.56 0.00 22.40 L0.00 21.40 C0.00 15.24 0.00 12.16 0.92 9.38 L1.05 8.84 C2.37 5.22 5.22 2.37 8.84 1.05 L9.38 0.92 C12.16 0.00 15.24 0.00 21.40 0.00 Z');"></div>
<span class="t" style="top:1808.75px;font-size:23.8px;color:#cfd2d6;-webkit-text-stroke:0.45px #cfd2d6;left:496.73px;transform:translateX(-50%);">2</span>
<div style="left:548.92px;top:1786.00px;width:102.38px;height:43.80px;background:#18341f;clip-path:path('M21.40 0.00 L80.98 0.00 C87.15 0.00 90.23 0.00 93.01 0.92 L93.54 1.05 C97.17 2.37 100.02 5.22 101.34 8.84 L101.47 9.38 C102.38 12.16 102.38 15.24 102.38 21.40 L102.38 22.40 C102.38 28.56 102.38 31.64 101.47 34.42 L101.34 34.96 C100.02 38.58 97.17 41.43 93.54 42.75 L93.01 42.88 C90.23 43.80 87.15 43.80 80.98 43.80 L21.40 43.80 C15.24 43.80 12.16 43.80 9.38 42.88 L8.84 42.75 C5.22 41.43 2.37 38.58 1.05 34.96 L0.92 34.42 C0.00 31.64 0.00 28.56 0.00 22.40 L0.00 21.40 C0.00 15.24 0.00 12.16 0.92 9.38 L1.05 8.84 C2.37 5.22 5.22 2.37 8.84 1.05 L9.38 0.92 C12.16 0.00 15.24 0.00 21.40 0.00 Z');"></div>
<div style="left:652.31px;top:1786.00px;width:102.38px;height:43.80px;background:#18341f;clip-path:path('M21.40 0.00 L80.98 0.00 C87.15 0.00 90.23 0.00 93.01 0.92 L93.54 1.05 C97.17 2.37 100.02 5.22 101.34 8.84 L101.47 9.38 C102.38 12.16 102.38 15.24 102.38 21.40 L102.38 22.40 C102.38 28.56 102.38 31.64 101.47 34.42 L101.34 34.96 C100.02 38.58 97.17 41.43 93.54 42.75 L93.01 42.88 C90.23 43.80 87.15 43.80 80.98 43.80 L21.40 43.80 C15.24 43.80 12.16 43.80 9.38 42.88 L8.84 42.75 C5.22 41.43 2.37 38.58 1.05 34.96 L0.92 34.42 C0.00 31.64 0.00 28.56 0.00 22.40 L0.00 21.40 C0.00 15.24 0.00 12.16 0.92 9.38 L1.05 8.84 C2.37 5.22 5.22 2.37 8.84 1.05 L9.38 0.92 C12.16 0.00 15.24 0.00 21.40 0.00 Z');"></div>
<span class="t" style="top:1808.75px;font-size:23.8px;color:#cfd2d6;-webkit-text-stroke:0.45px #cfd2d6;left:703.50px;transform:translateX(-50%);">3</span>
<div style="left:755.69px;top:1786.00px;width:102.38px;height:43.80px;background:#18341f;clip-path:path('M21.40 0.00 L80.98 0.00 C87.15 0.00 90.23 0.00 93.01 0.92 L93.54 1.05 C97.17 2.37 100.02 5.22 101.34 8.84 L101.47 9.38 C102.38 12.16 102.38 15.24 102.38 21.40 L102.38 22.40 C102.38 28.56 102.38 31.64 101.47 34.42 L101.34 34.96 C100.02 38.58 97.17 41.43 93.54 42.75 L93.01 42.88 C90.23 43.80 87.15 43.80 80.98 43.80 L21.40 43.80 C15.24 43.80 12.16 43.80 9.38 42.88 L8.84 42.75 C5.22 41.43 2.37 38.58 1.05 34.96 L0.92 34.42 C0.00 31.64 0.00 28.56 0.00 22.40 L0.00 21.40 C0.00 15.24 0.00 12.16 0.92 9.38 L1.05 8.84 C2.37 5.22 5.22 2.37 8.84 1.05 L9.38 0.92 C12.16 0.00 15.24 0.00 21.40 0.00 Z');"></div>
<span class="t" style="top:1808.75px;font-size:23.8px;color:#cfd2d6;-webkit-text-stroke:0.45px #cfd2d6;left:806.88px;transform:translateX(-50%);">4</span>
<div style="left:859.08px;top:1786.00px;width:102.38px;height:43.80px;background:#18341f;clip-path:path('M21.40 0.00 L80.98 0.00 C87.15 0.00 90.23 0.00 93.01 0.92 L93.54 1.05 C97.17 2.37 100.02 5.22 101.34 8.84 L101.47 9.38 C102.38 12.16 102.38 15.24 102.38 21.40 L102.38 22.40 C102.38 28.56 102.38 31.64 101.47 34.42 L101.34 34.96 C100.02 38.58 97.17 41.43 93.54 42.75 L93.01 42.88 C90.23 43.80 87.15 43.80 80.98 43.80 L21.40 43.80 C15.24 43.80 12.16 43.80 9.38 42.88 L8.84 42.75 C5.22 41.43 2.37 38.58 1.05 34.96 L0.92 34.42 C0.00 31.64 0.00 28.56 0.00 22.40 L0.00 21.40 C0.00 15.24 0.00 12.16 0.92 9.38 L1.05 8.84 C2.37 5.22 5.22 2.37 8.84 1.05 L9.38 0.92 C12.16 0.00 15.24 0.00 21.40 0.00 Z');"></div>
<div style="left:962.46px;top:1786.00px;width:102.38px;height:43.80px;background:#18341f;clip-path:path('M21.40 0.00 L80.98 0.00 C87.15 0.00 90.23 0.00 93.01 0.92 L93.54 1.05 C97.17 2.37 100.02 5.22 101.34 8.84 L101.47 9.38 C102.38 12.16 102.38 15.24 102.38 21.40 L102.38 22.40 C102.38 28.56 102.38 31.64 101.47 34.42 L101.34 34.96 C100.02 38.58 97.17 41.43 93.54 42.75 L93.01 42.88 C90.23 43.80 87.15 43.80 80.98 43.80 L21.40 43.80 C15.24 43.80 12.16 43.80 9.38 42.88 L8.84 42.75 C5.22 41.43 2.37 38.58 1.05 34.96 L0.92 34.42 C0.00 31.64 0.00 28.56 0.00 22.40 L0.00 21.40 C0.00 15.24 0.00 12.16 0.92 9.38 L1.05 8.84 C2.37 5.22 5.22 2.37 8.84 1.05 L9.38 0.92 C12.16 0.00 15.24 0.00 21.40 0.00 Z');"></div>
<span class="t" style="top:1808.75px;font-size:23.8px;color:#cfd2d6;-webkit-text-stroke:0.45px #cfd2d6;left:1013.65px;transform:translateX(-50%);">5</span>
<div style="left:1065.85px;top:1786.00px;width:102.38px;height:43.80px;background:#18341f;clip-path:path('M21.40 0.00 L80.98 0.00 C87.15 0.00 90.23 0.00 93.01 0.92 L93.54 1.05 C97.17 2.37 100.02 5.22 101.34 8.84 L101.47 9.38 C102.38 12.16 102.38 15.24 102.38 21.40 L102.38 22.40 C102.38 28.56 102.38 31.64 101.47 34.42 L101.34 34.96 C100.02 38.58 97.17 41.43 93.54 42.75 L93.01 42.88 C90.23 43.80 87.15 43.80 80.98 43.80 L21.40 43.80 C15.24 43.80 12.16 43.80 9.38 42.88 L8.84 42.75 C5.22 41.43 2.37 38.58 1.05 34.96 L0.92 34.42 C0.00 31.64 0.00 28.56 0.00 22.40 L0.00 21.40 C0.00 15.24 0.00 12.16 0.92 9.38 L1.05 8.84 C2.37 5.22 5.22 2.37 8.84 1.05 L9.38 0.92 C12.16 0.00 15.24 0.00 21.40 0.00 Z');"></div>
<div style="left:1169.23px;top:1786.00px;width:102.38px;height:43.80px;background:#18341f;clip-path:path('M21.40 0.00 L80.98 0.00 C87.15 0.00 90.23 0.00 93.01 0.92 L93.54 1.05 C97.17 2.37 100.02 5.22 101.34 8.84 L101.47 9.38 C102.38 12.16 102.38 15.24 102.38 21.40 L102.38 22.40 C102.38 28.56 102.38 31.64 101.47 34.42 L101.34 34.96 C100.02 38.58 97.17 41.43 93.54 42.75 L93.01 42.88 C90.23 43.80 87.15 43.80 80.98 43.80 L21.40 43.80 C15.24 43.80 12.16 43.80 9.38 42.88 L8.84 42.75 C5.22 41.43 2.37 38.58 1.05 34.96 L0.92 34.42 C0.00 31.64 0.00 28.56 0.00 22.40 L0.00 21.40 C0.00 15.24 0.00 12.16 0.92 9.38 L1.05 8.84 C2.37 5.22 5.22 2.37 8.84 1.05 L9.38 0.92 C12.16 0.00 15.24 0.00 21.40 0.00 Z');"></div>
<span class="t" style="top:1808.75px;font-size:23.8px;color:#cfd2d6;-webkit-text-stroke:0.45px #cfd2d6;left:1220.42px;transform:translateX(-50%);">6</span>
<div style="left:1272.62px;top:1786.00px;width:102.38px;height:43.80px;background:#18341f;clip-path:path('M21.40 0.00 L80.98 0.00 C87.15 0.00 90.23 0.00 93.01 0.92 L93.54 1.05 C97.17 2.37 100.02 5.22 101.34 8.84 L101.47 9.38 C102.38 12.16 102.38 15.24 102.38 21.40 L102.38 22.40 C102.38 28.56 102.38 31.64 101.47 34.42 L101.34 34.96 C100.02 38.58 97.17 41.43 93.54 42.75 L93.01 42.88 C90.23 43.80 87.15 43.80 80.98 43.80 L21.40 43.80 C15.24 43.80 12.16 43.80 9.38 42.88 L8.84 42.75 C5.22 41.43 2.37 38.58 1.05 34.96 L0.92 34.42 C0.00 31.64 0.00 28.56 0.00 22.40 L0.00 21.40 C0.00 15.24 0.00 12.16 0.92 9.38 L1.05 8.84 C2.37 5.22 5.22 2.37 8.84 1.05 L9.38 0.92 C12.16 0.00 15.24 0.00 21.40 0.00 Z');"></div>
<div style="left:1376.00px;top:1786.00px;width:102.38px;height:43.80px;background:#18341f;clip-path:path('M21.40 0.00 L80.98 0.00 C87.15 0.00 90.23 0.00 93.01 0.92 L93.54 1.05 C97.17 2.37 100.02 5.22 101.34 8.84 L101.47 9.38 C102.38 12.16 102.38 15.24 102.38 21.40 L102.38 22.40 C102.38 28.56 102.38 31.64 101.47 34.42 L101.34 34.96 C100.02 38.58 97.17 41.43 93.54 42.75 L93.01 42.88 C90.23 43.80 87.15 43.80 80.98 43.80 L21.40 43.80 C15.24 43.80 12.16 43.80 9.38 42.88 L8.84 42.75 C5.22 41.43 2.37 38.58 1.05 34.96 L0.92 34.42 C0.00 31.64 0.00 28.56 0.00 22.40 L0.00 21.40 C0.00 15.24 0.00 12.16 0.92 9.38 L1.05 8.84 C2.37 5.22 5.22 2.37 8.84 1.05 L9.38 0.92 C12.16 0.00 15.24 0.00 21.40 0.00 Z');"></div>
<span class="t" style="top:1808.75px;font-size:23.8px;color:#cfd2d6;-webkit-text-stroke:0.45px #cfd2d6;left:1427.19px;transform:translateX(-50%);">7</span>
<div style="left:1479.38px;top:1786.00px;width:102.38px;height:43.80px;background:#18341f;clip-path:path('M21.40 0.00 L80.98 0.00 C87.15 0.00 90.23 0.00 93.01 0.92 L93.54 1.05 C97.17 2.37 100.02 5.22 101.34 8.84 L101.47 9.38 C102.38 12.16 102.38 15.24 102.38 21.40 L102.38 22.40 C102.38 28.56 102.38 31.64 101.47 34.42 L101.34 34.96 C100.02 38.58 97.17 41.43 93.54 42.75 L93.01 42.88 C90.23 43.80 87.15 43.80 80.98 43.80 L21.40 43.80 C15.24 43.80 12.16 43.80 9.38 42.88 L8.84 42.75 C5.22 41.43 2.37 38.58 1.05 34.96 L0.92 34.42 C0.00 31.64 0.00 28.56 0.00 22.40 L0.00 21.40 C0.00 15.24 0.00 12.16 0.92 9.38 L1.05 8.84 C2.37 5.22 5.22 2.37 8.84 1.05 L9.38 0.92 C12.16 0.00 15.24 0.00 21.40 0.00 Z');"></div>
<span class="t" style="top:1808.75px;font-size:23.8px;color:#cfd2d6;-webkit-text-stroke:0.45px #cfd2d6;left:1530.58px;transform:translateX(-50%);">1</span>
<div style="left:1582.77px;top:1786.00px;width:102.38px;height:43.80px;background:#18341f;clip-path:path('M21.40 0.00 L80.98 0.00 C87.15 0.00 90.23 0.00 93.01 0.92 L93.54 1.05 C97.17 2.37 100.02 5.22 101.34 8.84 L101.47 9.38 C102.38 12.16 102.38 15.24 102.38 21.40 L102.38 22.40 C102.38 28.56 102.38 31.64 101.47 34.42 L101.34 34.96 C100.02 38.58 97.17 41.43 93.54 42.75 L93.01 42.88 C90.23 43.80 87.15 43.80 80.98 43.80 L21.40 43.80 C15.24 43.80 12.16 43.80 9.38 42.88 L8.84 42.75 C5.22 41.43 2.37 38.58 1.05 34.96 L0.92 34.42 C0.00 31.64 0.00 28.56 0.00 22.40 L0.00 21.40 C0.00 15.24 0.00 12.16 0.92 9.38 L1.05 8.84 C2.37 5.22 5.22 2.37 8.84 1.05 L9.38 0.92 C12.16 0.00 15.24 0.00 21.40 0.00 Z');"></div>
<div style="left:1686.15px;top:1786.00px;width:102.38px;height:43.80px;background:#18341f;clip-path:path('M21.40 0.00 L80.98 0.00 C87.15 0.00 90.23 0.00 93.01 0.92 L93.54 1.05 C97.17 2.37 100.02 5.22 101.34 8.84 L101.47 9.38 C102.38 12.16 102.38 15.24 102.38 21.40 L102.38 22.40 C102.38 28.56 102.38 31.64 101.47 34.42 L101.34 34.96 C100.02 38.58 97.17 41.43 93.54 42.75 L93.01 42.88 C90.23 43.80 87.15 43.80 80.98 43.80 L21.40 43.80 C15.24 43.80 12.16 43.80 9.38 42.88 L8.84 42.75 C5.22 41.43 2.37 38.58 1.05 34.96 L0.92 34.42 C0.00 31.64 0.00 28.56 0.00 22.40 L0.00 21.40 C0.00 15.24 0.00 12.16 0.92 9.38 L1.05 8.84 C2.37 5.22 5.22 2.37 8.84 1.05 L9.38 0.92 C12.16 0.00 15.24 0.00 21.40 0.00 Z');"></div>
<span class="t" style="top:1808.75px;font-size:23.8px;color:#cfd2d6;-webkit-text-stroke:0.45px #cfd2d6;left:1737.35px;transform:translateX(-50%);">2</span>
<div style="left:1789.54px;top:1786.00px;width:102.38px;height:43.80px;background:#18341f;clip-path:path('M21.40 0.00 L80.98 0.00 C87.15 0.00 90.23 0.00 93.01 0.92 L93.54 1.05 C97.17 2.37 100.02 5.22 101.34 8.84 L101.47 9.38 C102.38 12.16 102.38 15.24 102.38 21.40 L102.38 22.40 C102.38 28.56 102.38 31.64 101.47 34.42 L101.34 34.96 C100.02 38.58 97.17 41.43 93.54 42.75 L93.01 42.88 C90.23 43.80 87.15 43.80 80.98 43.80 L21.40 43.80 C15.24 43.80 12.16 43.80 9.38 42.88 L8.84 42.75 C5.22 41.43 2.37 38.58 1.05 34.96 L0.92 34.42 C0.00 31.64 0.00 28.56 0.00 22.40 L0.00 21.40 C0.00 15.24 0.00 12.16 0.92 9.38 L1.05 8.84 C2.37 5.22 5.22 2.37 8.84 1.05 L9.38 0.92 C12.16 0.00 15.24 0.00 21.40 0.00 Z');"></div>
<div style="left:1892.92px;top:1786.00px;width:102.38px;height:43.80px;background:#18341f;clip-path:path('M21.40 0.00 L80.98 0.00 C87.15 0.00 90.23 0.00 93.01 0.92 L93.54 1.05 C97.17 2.37 100.02 5.22 101.34 8.84 L101.47 9.38 C102.38 12.16 102.38 15.24 102.38 21.40 L102.38 22.40 C102.38 28.56 102.38 31.64 101.47 34.42 L101.34 34.96 C100.02 38.58 97.17 41.43 93.54 42.75 L93.01 42.88 C90.23 43.80 87.15 43.80 80.98 43.80 L21.40 43.80 C15.24 43.80 12.16 43.80 9.38 42.88 L8.84 42.75 C5.22 41.43 2.37 38.58 1.05 34.96 L0.92 34.42 C0.00 31.64 0.00 28.56 0.00 22.40 L0.00 21.40 C0.00 15.24 0.00 12.16 0.92 9.38 L1.05 8.84 C2.37 5.22 5.22 2.37 8.84 1.05 L9.38 0.92 C12.16 0.00 15.24 0.00 21.40 0.00 Z');"></div>
<span class="t" style="top:1808.75px;font-size:23.8px;color:#cfd2d6;-webkit-text-stroke:0.45px #cfd2d6;left:1944.12px;transform:translateX(-50%);">3</span>
<div style="left:1996.31px;top:1786.00px;width:102.38px;height:43.80px;background:#18341f;clip-path:path('M21.40 0.00 L80.98 0.00 C87.15 0.00 90.23 0.00 93.01 0.92 L93.54 1.05 C97.17 2.37 100.02 5.22 101.34 8.84 L101.47 9.38 C102.38 12.16 102.38 15.24 102.38 21.40 L102.38 22.40 C102.38 28.56 102.38 31.64 101.47 34.42 L101.34 34.96 C100.02 38.58 97.17 41.43 93.54 42.75 L93.01 42.88 C90.23 43.80 87.15 43.80 80.98 43.80 L21.40 43.80 C15.24 43.80 12.16 43.80 9.38 42.88 L8.84 42.75 C5.22 41.43 2.37 38.58 1.05 34.96 L0.92 34.42 C0.00 31.64 0.00 28.56 0.00 22.40 L0.00 21.40 C0.00 15.24 0.00 12.16 0.92 9.38 L1.05 8.84 C2.37 5.22 5.22 2.37 8.84 1.05 L9.38 0.92 C12.16 0.00 15.24 0.00 21.40 0.00 Z');"></div>
<span class="t" style="top:1808.75px;font-size:23.8px;color:#cfd2d6;-webkit-text-stroke:0.45px #cfd2d6;left:2047.50px;transform:translateX(-50%);">4</span>
<div style="left:2099.69px;top:1786.00px;width:102.38px;height:43.80px;background:#18341f;clip-path:path('M21.40 0.00 L80.98 0.00 C87.15 0.00 90.23 0.00 93.01 0.92 L93.54 1.05 C97.17 2.37 100.02 5.22 101.34 8.84 L101.47 9.38 C102.38 12.16 102.38 15.24 102.38 21.40 L102.38 22.40 C102.38 28.56 102.38 31.64 101.47 34.42 L101.34 34.96 C100.02 38.58 97.17 41.43 93.54 42.75 L93.01 42.88 C90.23 43.80 87.15 43.80 80.98 43.80 L21.40 43.80 C15.24 43.80 12.16 43.80 9.38 42.88 L8.84 42.75 C5.22 41.43 2.37 38.58 1.05 34.96 L0.92 34.42 C0.00 31.64 0.00 28.56 0.00 22.40 L0.00 21.40 C0.00 15.24 0.00 12.16 0.92 9.38 L1.05 8.84 C2.37 5.22 5.22 2.37 8.84 1.05 L9.38 0.92 C12.16 0.00 15.24 0.00 21.40 0.00 Z');"></div>
<div style="left:2203.08px;top:1786.00px;width:102.38px;height:43.80px;background:#18341f;clip-path:path('M21.40 0.00 L80.98 0.00 C87.15 0.00 90.23 0.00 93.01 0.92 L93.54 1.05 C97.17 2.37 100.02 5.22 101.34 8.84 L101.47 9.38 C102.38 12.16 102.38 15.24 102.38 21.40 L102.38 22.40 C102.38 28.56 102.38 31.64 101.47 34.42 L101.34 34.96 C100.02 38.58 97.17 41.43 93.54 42.75 L93.01 42.88 C90.23 43.80 87.15 43.80 80.98 43.80 L21.40 43.80 C15.24 43.80 12.16 43.80 9.38 42.88 L8.84 42.75 C5.22 41.43 2.37 38.58 1.05 34.96 L0.92 34.42 C0.00 31.64 0.00 28.56 0.00 22.40 L0.00 21.40 C0.00 15.24 0.00 12.16 0.92 9.38 L1.05 8.84 C2.37 5.22 5.22 2.37 8.84 1.05 L9.38 0.92 C12.16 0.00 15.24 0.00 21.40 0.00 Z');"></div>
<span class="t" style="top:1808.75px;font-size:23.8px;color:#cfd2d6;-webkit-text-stroke:0.45px #cfd2d6;left:2254.27px;transform:translateX(-50%);">5</span>
<div style="left:2306.46px;top:1786.00px;width:102.38px;height:43.80px;background:#18341f;clip-path:path('M21.40 0.00 L80.98 0.00 C87.15 0.00 90.23 0.00 93.01 0.92 L93.54 1.05 C97.17 2.37 100.02 5.22 101.34 8.84 L101.47 9.38 C102.38 12.16 102.38 15.24 102.38 21.40 L102.38 22.40 C102.38 28.56 102.38 31.64 101.47 34.42 L101.34 34.96 C100.02 38.58 97.17 41.43 93.54 42.75 L93.01 42.88 C90.23 43.80 87.15 43.80 80.98 43.80 L21.40 43.80 C15.24 43.80 12.16 43.80 9.38 42.88 L8.84 42.75 C5.22 41.43 2.37 38.58 1.05 34.96 L0.92 34.42 C0.00 31.64 0.00 28.56 0.00 22.40 L0.00 21.40 C0.00 15.24 0.00 12.16 0.92 9.38 L1.05 8.84 C2.37 5.22 5.22 2.37 8.84 1.05 L9.38 0.92 C12.16 0.00 15.24 0.00 21.40 0.00 Z');"></div>
<div style="left:2409.85px;top:1786.00px;width:102.38px;height:43.80px;background:#18341f;clip-path:path('M21.40 0.00 L80.98 0.00 C87.15 0.00 90.23 0.00 93.01 0.92 L93.54 1.05 C97.17 2.37 100.02 5.22 101.34 8.84 L101.47 9.38 C102.38 12.16 102.38 15.24 102.38 21.40 L102.38 22.40 C102.38 28.56 102.38 31.64 101.47 34.42 L101.34 34.96 C100.02 38.58 97.17 41.43 93.54 42.75 L93.01 42.88 C90.23 43.80 87.15 43.80 80.98 43.80 L21.40 43.80 C15.24 43.80 12.16 43.80 9.38 42.88 L8.84 42.75 C5.22 41.43 2.37 38.58 1.05 34.96 L0.92 34.42 C0.00 31.64 0.00 28.56 0.00 22.40 L0.00 21.40 C0.00 15.24 0.00 12.16 0.92 9.38 L1.05 8.84 C2.37 5.22 5.22 2.37 8.84 1.05 L9.38 0.92 C12.16 0.00 15.24 0.00 21.40 0.00 Z');"></div>
<span class="t" style="top:1808.75px;font-size:23.8px;color:#cfd2d6;-webkit-text-stroke:0.45px #cfd2d6;left:2461.04px;transform:translateX(-50%);">6</span>
<div style="left:2513.23px;top:1786.00px;width:102.38px;height:43.80px;background:#18341f;clip-path:path('M21.40 0.00 L80.98 0.00 C87.15 0.00 90.23 0.00 93.01 0.92 L93.54 1.05 C97.17 2.37 100.02 5.22 101.34 8.84 L101.47 9.38 C102.38 12.16 102.38 15.24 102.38 21.40 L102.38 22.40 C102.38 28.56 102.38 31.64 101.47 34.42 L101.34 34.96 C100.02 38.58 97.17 41.43 93.54 42.75 L93.01 42.88 C90.23 43.80 87.15 43.80 80.98 43.80 L21.40 43.80 C15.24 43.80 12.16 43.80 9.38 42.88 L8.84 42.75 C5.22 41.43 2.37 38.58 1.05 34.96 L0.92 34.42 C0.00 31.64 0.00 28.56 0.00 22.40 L0.00 21.40 C0.00 15.24 0.00 12.16 0.92 9.38 L1.05 8.84 C2.37 5.22 5.22 2.37 8.84 1.05 L9.38 0.92 C12.16 0.00 15.24 0.00 21.40 0.00 Z');"></div>
<div style="left:2616.62px;top:1786.00px;width:102.38px;height:43.80px;background:#18341f;clip-path:path('M21.40 0.00 L80.98 0.00 C87.15 0.00 90.23 0.00 93.01 0.92 L93.54 1.05 C97.17 2.37 100.02 5.22 101.34 8.84 L101.47 9.38 C102.38 12.16 102.38 15.24 102.38 21.40 L102.38 22.40 C102.38 28.56 102.38 31.64 101.47 34.42 L101.34 34.96 C100.02 38.58 97.17 41.43 93.54 42.75 L93.01 42.88 C90.23 43.80 87.15 43.80 80.98 43.80 L21.40 43.80 C15.24 43.80 12.16 43.80 9.38 42.88 L8.84 42.75 C5.22 41.43 2.37 38.58 1.05 34.96 L0.92 34.42 C0.00 31.64 0.00 28.56 0.00 22.40 L0.00 21.40 C0.00 15.24 0.00 12.16 0.92 9.38 L1.05 8.84 C2.37 5.22 5.22 2.37 8.84 1.05 L9.38 0.92 C12.16 0.00 15.24 0.00 21.40 0.00 Z');"></div>
<span class="t" style="top:1808.75px;font-size:23.8px;color:#cfd2d6;-webkit-text-stroke:0.45px #cfd2d6;left:2667.81px;transform:translateX(-50%);">7</span>
<div style="left:32.00px;top:1850.00px;width:102.38px;height:50.00px;background:#d4d4d4;clip-path:path('M21.40 0.00 L80.98 0.00 C87.15 0.00 90.23 0.00 93.01 0.92 L93.54 1.05 C97.17 2.37 100.02 5.22 101.34 8.84 L101.47 9.38 C102.38 12.16 102.38 15.24 102.38 21.40 L102.38 28.60 C102.38 34.76 102.38 37.84 101.47 40.62 L101.34 41.16 C100.02 44.78 97.17 47.63 93.54 48.95 L93.01 49.08 C90.23 50.00 87.15 50.00 80.98 50.00 L21.40 50.00 C15.24 50.00 12.16 50.00 9.38 49.08 L8.84 48.95 C5.22 47.63 2.37 44.78 1.05 41.16 L0.92 40.62 C0.00 37.84 0.00 34.76 0.00 28.60 L0.00 21.40 C0.00 15.24 0.00 12.16 0.92 9.38 L1.05 8.84 C2.37 5.22 5.22 2.37 8.84 1.05 L9.38 0.92 C12.16 0.00 15.24 0.00 21.40 0.00 Z');"></div>
<span class="t" style="top:1874.93px;font-size:20.4px;color:#000;-webkit-text-stroke:0.4px #000;left:83.19px;transform:translateX(-50%);">7</span>
<div style="left:135.38px;top:1850.00px;width:102.38px;height:50.00px;background:#d4d4d4;clip-path:path('M21.40 0.00 L80.98 0.00 C87.15 0.00 90.23 0.00 93.01 0.92 L93.54 1.05 C97.17 2.37 100.02 5.22 101.34 8.84 L101.47 9.38 C102.38 12.16 102.38 15.24 102.38 21.40 L102.38 28.60 C102.38 34.76 102.38 37.84 101.47 40.62 L101.34 41.16 C100.02 44.78 97.17 47.63 93.54 48.95 L93.01 49.08 C90.23 50.00 87.15 50.00 80.98 50.00 L21.40 50.00 C15.24 50.00 12.16 50.00 9.38 49.08 L8.84 48.95 C5.22 47.63 2.37 44.78 1.05 41.16 L0.92 40.62 C0.00 37.84 0.00 34.76 0.00 28.60 L0.00 21.40 C0.00 15.24 0.00 12.16 0.92 9.38 L1.05 8.84 C2.37 5.22 5.22 2.37 8.84 1.05 L9.38 0.92 C12.16 0.00 15.24 0.00 21.40 0.00 Z');"></div>
<span class="t" style="top:1874.93px;font-size:20.4px;color:#000;-webkit-text-stroke:0.4px #000;left:186.58px;transform:translateX(-50%);">dim</span>
<div style="left:1375.60px;top:1849.00px;width:103.78px;height:52.00px;background:#040404;clip-path:path('M22.93 0.00 L80.85 0.00 C87.46 0.00 90.76 0.00 93.74 0.98 L94.31 1.12 C98.19 2.54 101.25 5.59 102.66 9.47 L102.80 10.05 C103.78 13.03 103.78 16.33 103.78 22.93 L103.78 29.07 C103.78 35.67 103.78 38.97 102.80 41.95 L102.66 42.53 C101.25 46.41 98.19 49.46 94.31 50.88 L93.74 51.02 C90.76 52.00 87.46 52.00 80.85 52.00 L22.93 52.00 C16.33 52.00 13.03 52.00 10.05 51.02 L9.47 50.88 C5.59 49.46 2.54 46.41 1.12 42.53 L0.98 41.95 C0.00 38.97 0.00 35.67 0.00 29.07 L0.00 22.93 C0.00 16.33 0.00 13.03 0.98 10.05 L1.12 9.47 C2.54 5.59 5.59 2.54 9.47 1.12 L10.05 0.98 C13.03 0.00 16.33 0.00 22.93 0.00 Z');"></div>
<div style="left:1375.60px;top:1849.00px;width:103.78px;height:52.00px;background:#58585c;clip-path:path(evenodd,'M22.93 0.00 L80.85 0.00 C87.46 0.00 90.76 0.00 93.74 0.98 L94.31 1.12 C98.19 2.54 101.25 5.59 102.66 9.47 L102.80 10.05 C103.78 13.03 103.78 16.33 103.78 22.93 L103.78 29.07 C103.78 35.67 103.78 38.97 102.80 41.95 L102.66 42.53 C101.25 46.41 98.19 49.46 94.31 50.88 L93.74 51.02 C90.76 52.00 87.46 52.00 80.85 52.00 L22.93 52.00 C16.33 52.00 13.03 52.00 10.05 51.02 L9.47 50.88 C5.59 49.46 2.54 46.41 1.12 42.53 L0.98 41.95 C0.00 38.97 0.00 35.67 0.00 29.07 L0.00 22.93 C0.00 16.33 0.00 13.03 0.98 10.05 L1.12 9.47 C2.54 5.59 5.59 2.54 9.47 1.12 L10.05 0.98 C13.03 0.00 16.33 0.00 22.93 0.00 Z M21.87 2.00 L81.91 2.00 C87.63 2.00 90.50 2.00 93.08 2.85 L93.58 2.97 C96.94 4.20 99.59 6.85 100.81 10.21 L100.93 10.71 C101.78 13.29 101.78 16.15 101.78 21.87 L101.78 30.13 C101.78 35.85 101.78 38.71 100.93 41.29 L100.81 41.79 C99.59 45.15 96.94 47.80 93.58 49.03 L93.08 49.15 C90.50 50.00 87.63 50.00 81.91 50.00 L21.87 50.00 C16.15 50.00 13.29 50.00 10.71 49.15 L10.21 49.03 C6.85 47.80 4.20 45.15 2.97 41.79 L2.85 41.29 C2.00 38.71 2.00 35.85 2.00 30.13 L2.00 21.87 C2.00 16.15 2.00 13.29 2.85 10.71 L2.97 10.21 C4.20 6.85 6.85 4.20 10.21 2.97 L10.71 2.85 C13.29 2.00 16.15 2.00 21.87 2.00 Z');"></div>
<span class="t" style="top:1874.93px;font-size:20.4px;color:#fff;left:1427.19px;transform:translateX(-50%);">dim</span>
<div style="left:1479.38px;top:1850.00px;width:205.77px;height:50.00px;background:#d4d4d4;clip-path:path('M21.40 0.00 L184.37 0.00 C190.53 0.00 193.61 0.00 196.39 0.92 L196.93 1.05 C200.55 2.37 203.40 5.22 204.72 8.84 L204.85 9.38 C205.77 12.16 205.77 15.24 205.77 21.40 L205.77 28.60 C205.77 34.76 205.77 37.84 204.85 40.62 L204.72 41.16 C203.40 44.78 200.55 47.63 196.93 48.95 L196.39 49.08 C193.61 50.00 190.53 50.00 184.37 50.00 L21.40 50.00 C15.24 50.00 12.16 50.00 9.38 49.08 L8.84 48.95 C5.22 47.63 2.37 44.78 1.05 41.16 L0.92 40.62 C0.00 37.84 0.00 34.76 0.00 28.60 L0.00 21.40 C0.00 15.24 0.00 12.16 0.92 9.38 L1.05 8.84 C2.37 5.22 5.22 2.37 8.84 1.05 L9.38 0.92 C12.16 0.00 15.24 0.00 21.40 0.00 Z');"></div>
<div style="left:1685.75px;top:1849.00px;width:103.78px;height:52.00px;background:#040404;clip-path:path('M22.93 0.00 L80.85 0.00 C87.46 0.00 90.76 0.00 93.74 0.98 L94.31 1.12 C98.19 2.54 101.25 5.59 102.66 9.47 L102.80 10.05 C103.78 13.03 103.78 16.33 103.78 22.93 L103.78 29.07 C103.78 35.67 103.78 38.97 102.80 41.95 L102.66 42.53 C101.25 46.41 98.19 49.46 94.31 50.88 L93.74 51.02 C90.76 52.00 87.46 52.00 80.85 52.00 L22.93 52.00 C16.33 52.00 13.03 52.00 10.05 51.02 L9.47 50.88 C5.59 49.46 2.54 46.41 1.12 42.53 L0.98 41.95 C0.00 38.97 0.00 35.67 0.00 29.07 L0.00 22.93 C0.00 16.33 0.00 13.03 0.98 10.05 L1.12 9.47 C2.54 5.59 5.59 2.54 9.47 1.12 L10.05 0.98 C13.03 0.00 16.33 0.00 22.93 0.00 Z');"></div>
<div style="left:1685.75px;top:1849.00px;width:103.78px;height:52.00px;background:#58585c;clip-path:path(evenodd,'M22.93 0.00 L80.85 0.00 C87.46 0.00 90.76 0.00 93.74 0.98 L94.31 1.12 C98.19 2.54 101.25 5.59 102.66 9.47 L102.80 10.05 C103.78 13.03 103.78 16.33 103.78 22.93 L103.78 29.07 C103.78 35.67 103.78 38.97 102.80 41.95 L102.66 42.53 C101.25 46.41 98.19 49.46 94.31 50.88 L93.74 51.02 C90.76 52.00 87.46 52.00 80.85 52.00 L22.93 52.00 C16.33 52.00 13.03 52.00 10.05 51.02 L9.47 50.88 C5.59 49.46 2.54 46.41 1.12 42.53 L0.98 41.95 C0.00 38.97 0.00 35.67 0.00 29.07 L0.00 22.93 C0.00 16.33 0.00 13.03 0.98 10.05 L1.12 9.47 C2.54 5.59 5.59 2.54 9.47 1.12 L10.05 0.98 C13.03 0.00 16.33 0.00 22.93 0.00 Z M21.87 2.00 L81.91 2.00 C87.63 2.00 90.50 2.00 93.08 2.85 L93.58 2.97 C96.94 4.20 99.59 6.85 100.81 10.21 L100.93 10.71 C101.78 13.29 101.78 16.15 101.78 21.87 L101.78 30.13 C101.78 35.85 101.78 38.71 100.93 41.29 L100.81 41.79 C99.59 45.15 96.94 47.80 93.58 49.03 L93.08 49.15 C90.50 50.00 87.63 50.00 81.91 50.00 L21.87 50.00 C16.15 50.00 13.29 50.00 10.71 49.15 L10.21 49.03 C6.85 47.80 4.20 45.15 2.97 41.79 L2.85 41.29 C2.00 38.71 2.00 35.85 2.00 30.13 L2.00 21.87 C2.00 16.15 2.00 13.29 2.85 10.71 L2.97 10.21 C4.20 6.85 6.85 4.20 10.21 2.97 L10.71 2.85 C13.29 2.00 16.15 2.00 21.87 2.00 Z');"></div>
<div style="left:1789.54px;top:1850.00px;width:205.77px;height:50.00px;background:#d4d4d4;clip-path:path('M21.40 0.00 L184.37 0.00 C190.53 0.00 193.61 0.00 196.39 0.92 L196.93 1.05 C200.55 2.37 203.40 5.22 204.72 8.84 L204.85 9.38 C205.77 12.16 205.77 15.24 205.77 21.40 L205.77 28.60 C205.77 34.76 205.77 37.84 204.85 40.62 L204.72 41.16 C203.40 44.78 200.55 47.63 196.93 48.95 L196.39 49.08 C193.61 50.00 190.53 50.00 184.37 50.00 L21.40 50.00 C15.24 50.00 12.16 50.00 9.38 49.08 L8.84 48.95 C5.22 47.63 2.37 44.78 1.05 41.16 L0.92 40.62 C0.00 37.84 0.00 34.76 0.00 28.60 L0.00 21.40 C0.00 15.24 0.00 12.16 0.92 9.38 L1.05 8.84 C2.37 5.22 5.22 2.37 8.84 1.05 L9.38 0.92 C12.16 0.00 15.24 0.00 21.40 0.00 Z');"></div>
<div style="left:1995.91px;top:1849.00px;width:103.78px;height:52.00px;background:#040404;clip-path:path('M22.93 0.00 L80.85 0.00 C87.46 0.00 90.76 0.00 93.74 0.98 L94.31 1.12 C98.19 2.54 101.25 5.59 102.66 9.47 L102.80 10.05 C103.78 13.03 103.78 16.33 103.78 22.93 L103.78 29.07 C103.78 35.67 103.78 38.97 102.80 41.95 L102.66 42.53 C101.25 46.41 98.19 49.46 94.31 50.88 L93.74 51.02 C90.76 52.00 87.46 52.00 80.85 52.00 L22.93 52.00 C16.33 52.00 13.03 52.00 10.05 51.02 L9.47 50.88 C5.59 49.46 2.54 46.41 1.12 42.53 L0.98 41.95 C0.00 38.97 0.00 35.67 0.00 29.07 L0.00 22.93 C0.00 16.33 0.00 13.03 0.98 10.05 L1.12 9.47 C2.54 5.59 5.59 2.54 9.47 1.12 L10.05 0.98 C13.03 0.00 16.33 0.00 22.93 0.00 Z');"></div>
<div style="left:1995.91px;top:1849.00px;width:103.78px;height:52.00px;background:#58585c;clip-path:path(evenodd,'M22.93 0.00 L80.85 0.00 C87.46 0.00 90.76 0.00 93.74 0.98 L94.31 1.12 C98.19 2.54 101.25 5.59 102.66 9.47 L102.80 10.05 C103.78 13.03 103.78 16.33 103.78 22.93 L103.78 29.07 C103.78 35.67 103.78 38.97 102.80 41.95 L102.66 42.53 C101.25 46.41 98.19 49.46 94.31 50.88 L93.74 51.02 C90.76 52.00 87.46 52.00 80.85 52.00 L22.93 52.00 C16.33 52.00 13.03 52.00 10.05 51.02 L9.47 50.88 C5.59 49.46 2.54 46.41 1.12 42.53 L0.98 41.95 C0.00 38.97 0.00 35.67 0.00 29.07 L0.00 22.93 C0.00 16.33 0.00 13.03 0.98 10.05 L1.12 9.47 C2.54 5.59 5.59 2.54 9.47 1.12 L10.05 0.98 C13.03 0.00 16.33 0.00 22.93 0.00 Z M21.87 2.00 L81.91 2.00 C87.63 2.00 90.50 2.00 93.08 2.85 L93.58 2.97 C96.94 4.20 99.59 6.85 100.81 10.21 L100.93 10.71 C101.78 13.29 101.78 16.15 101.78 21.87 L101.78 30.13 C101.78 35.85 101.78 38.71 100.93 41.29 L100.81 41.79 C99.59 45.15 96.94 47.80 93.58 49.03 L93.08 49.15 C90.50 50.00 87.63 50.00 81.91 50.00 L21.87 50.00 C16.15 50.00 13.29 50.00 10.71 49.15 L10.21 49.03 C6.85 47.80 4.20 45.15 2.97 41.79 L2.85 41.29 C2.00 38.71 2.00 35.85 2.00 30.13 L2.00 21.87 C2.00 16.15 2.00 13.29 2.85 10.71 L2.97 10.21 C4.20 6.85 6.85 4.20 10.21 2.97 L10.71 2.85 C13.29 2.00 16.15 2.00 21.87 2.00 Z');"></div>
<span class="t" style="top:1921.45px;font-size:23.8px;color:#cfcfd2;-webkit-text-stroke:0.45px #cfcfd2;left:289.96px;transform:translateX(-50%);">1</span>
<span class="t" style="top:1921.45px;font-size:23.8px;color:#cfcfd2;-webkit-text-stroke:0.45px #cfcfd2;left:496.73px;transform:translateX(-50%);">2</span>
<span class="t" style="top:1921.45px;font-size:23.8px;color:#cfcfd2;-webkit-text-stroke:0.45px #cfcfd2;left:703.50px;transform:translateX(-50%);">3</span>
<span class="t" style="top:1921.45px;font-size:23.8px;color:#cfcfd2;-webkit-text-stroke:0.45px #cfcfd2;left:806.88px;transform:translateX(-50%);">4</span>
<span class="t" style="top:1921.45px;font-size:23.8px;color:#cfcfd2;-webkit-text-stroke:0.45px #cfcfd2;left:1013.65px;transform:translateX(-50%);">5</span>
<span class="t" style="top:1921.45px;font-size:23.8px;color:#cfcfd2;-webkit-text-stroke:0.45px #cfcfd2;left:1220.42px;transform:translateX(-50%);">6</span>
<span class="t" style="top:1921.45px;font-size:23.8px;color:#cfcfd2;-webkit-text-stroke:0.45px #cfcfd2;left:1427.19px;transform:translateX(-50%);">7</span>
<span class="t" style="top:1921.45px;font-size:23.8px;color:#cfcfd2;-webkit-text-stroke:0.45px #cfcfd2;left:1530.58px;transform:translateX(-50%);">1</span>
<span class="t" style="top:1921.45px;font-size:23.8px;color:#cfcfd2;-webkit-text-stroke:0.45px #cfcfd2;left:1737.35px;transform:translateX(-50%);">2</span>
<span class="t" style="top:1921.45px;font-size:23.8px;color:#cfcfd2;-webkit-text-stroke:0.45px #cfcfd2;left:1944.12px;transform:translateX(-50%);">3</span>
<span class="t" style="top:1921.45px;font-size:23.8px;color:#cfcfd2;-webkit-text-stroke:0.45px #cfcfd2;left:2047.50px;transform:translateX(-50%);">4</span>
<span class="t" style="top:1921.45px;font-size:23.8px;color:#cfcfd2;-webkit-text-stroke:0.45px #cfcfd2;left:2254.27px;transform:translateX(-50%);">5</span>
<span class="t" style="top:1921.45px;font-size:23.8px;color:#cfcfd2;-webkit-text-stroke:0.45px #cfcfd2;left:2461.04px;transform:translateX(-50%);">6</span>
<span class="t" style="top:1921.45px;font-size:23.8px;color:#cfcfd2;-webkit-text-stroke:0.45px #cfcfd2;left:2667.81px;transform:translateX(-50%);">7</span>
<div style="left:32.00px;top:1942.00px;width:102.38px;height:50.00px;background:#ffd92e;clip-path:path('M21.40 0.00 L80.98 0.00 C87.15 0.00 90.23 0.00 93.01 0.92 L93.54 1.05 C97.17 2.37 100.02 5.22 101.34 8.84 L101.47 9.38 C102.38 12.16 102.38 15.24 102.38 21.40 L102.38 28.60 C102.38 34.76 102.38 37.84 101.47 40.62 L101.34 41.16 C100.02 44.78 97.17 47.63 93.54 48.95 L93.01 49.08 C90.23 50.00 87.15 50.00 80.98 50.00 L21.40 50.00 C15.24 50.00 12.16 50.00 9.38 49.08 L8.84 48.95 C5.22 47.63 2.37 44.78 1.05 41.16 L0.92 40.62 C0.00 37.84 0.00 34.76 0.00 28.60 L0.00 21.40 C0.00 15.24 0.00 12.16 0.92 9.38 L1.05 8.84 C2.37 5.22 5.22 2.37 8.84 1.05 L9.38 0.92 C12.16 0.00 15.24 0.00 21.40 0.00 Z');"></div>
<span class="t" style="top:1966.93px;font-size:20.4px;color:#000;-webkit-text-stroke:0.4px #000;left:83.19px;transform:translateX(-50%);">6</span>
<div style="left:135.38px;top:1942.00px;width:102.38px;height:50.00px;background:#ffd92e;clip-path:path('M21.40 0.00 L80.98 0.00 C87.15 0.00 90.23 0.00 93.01 0.92 L93.54 1.05 C97.17 2.37 100.02 5.22 101.34 8.84 L101.47 9.38 C102.38 12.16 102.38 15.24 102.38 21.40 L102.38 28.60 C102.38 34.76 102.38 37.84 101.47 40.62 L101.34 41.16 C100.02 44.78 97.17 47.63 93.54 48.95 L93.01 49.08 C90.23 50.00 87.15 50.00 80.98 50.00 L21.40 50.00 C15.24 50.00 12.16 50.00 9.38 49.08 L8.84 48.95 C5.22 47.63 2.37 44.78 1.05 41.16 L0.92 40.62 C0.00 37.84 0.00 34.76 0.00 28.60 L0.00 21.40 C0.00 15.24 0.00 12.16 0.92 9.38 L1.05 8.84 C2.37 5.22 5.22 2.37 8.84 1.05 L9.38 0.92 C12.16 0.00 15.24 0.00 21.40 0.00 Z');"></div>
<span class="t" style="top:1966.93px;font-size:20.4px;color:#000;-webkit-text-stroke:0.4px #000;left:186.58px;transform:translateX(-50%);">m</span>
<div style="left:1168.83px;top:1941.00px;width:103.78px;height:52.00px;background:#040404;clip-path:path('M22.93 0.00 L80.85 0.00 C87.46 0.00 90.76 0.00 93.74 0.98 L94.31 1.12 C98.19 2.54 101.25 5.59 102.66 9.47 L102.80 10.05 C103.78 13.03 103.78 16.33 103.78 22.93 L103.78 29.07 C103.78 35.67 103.78 38.97 102.80 41.95 L102.66 42.53 C101.25 46.41 98.19 49.46 94.31 50.88 L93.74 51.02 C90.76 52.00 87.46 52.00 80.85 52.00 L22.93 52.00 C16.33 52.00 13.03 52.00 10.05 51.02 L9.47 50.88 C5.59 49.46 2.54 46.41 1.12 42.53 L0.98 41.95 C0.00 38.97 0.00 35.67 0.00 29.07 L0.00 22.93 C0.00 16.33 0.00 13.03 0.98 10.05 L1.12 9.47 C2.54 5.59 5.59 2.54 9.47 1.12 L10.05 0.98 C13.03 0.00 16.33 0.00 22.93 0.00 Z');"></div>
<div style="left:1168.83px;top:1941.00px;width:103.78px;height:52.00px;background:#58585c;clip-path:path(evenodd,'M22.93 0.00 L80.85 0.00 C87.46 0.00 90.76 0.00 93.74 0.98 L94.31 1.12 C98.19 2.54 101.25 5.59 102.66 9.47 L102.80 10.05 C103.78 13.03 103.78 16.33 103.78 22.93 L103.78 29.07 C103.78 35.67 103.78 38.97 102.80 41.95 L102.66 42.53 C101.25 46.41 98.19 49.46 94.31 50.88 L93.74 51.02 C90.76 52.00 87.46 52.00 80.85 52.00 L22.93 52.00 C16.33 52.00 13.03 52.00 10.05 51.02 L9.47 50.88 C5.59 49.46 2.54 46.41 1.12 42.53 L0.98 41.95 C0.00 38.97 0.00 35.67 0.00 29.07 L0.00 22.93 C0.00 16.33 0.00 13.03 0.98 10.05 L1.12 9.47 C2.54 5.59 5.59 2.54 9.47 1.12 L10.05 0.98 C13.03 0.00 16.33 0.00 22.93 0.00 Z M21.87 2.00 L81.91 2.00 C87.63 2.00 90.50 2.00 93.08 2.85 L93.58 2.97 C96.94 4.20 99.59 6.85 100.81 10.21 L100.93 10.71 C101.78 13.29 101.78 16.15 101.78 21.87 L101.78 30.13 C101.78 35.85 101.78 38.71 100.93 41.29 L100.81 41.79 C99.59 45.15 96.94 47.80 93.58 49.03 L93.08 49.15 C90.50 50.00 87.63 50.00 81.91 50.00 L21.87 50.00 C16.15 50.00 13.29 50.00 10.71 49.15 L10.21 49.03 C6.85 47.80 4.20 45.15 2.97 41.79 L2.85 41.29 C2.00 38.71 2.00 35.85 2.00 30.13 L2.00 21.87 C2.00 16.15 2.00 13.29 2.85 10.71 L2.97 10.21 C4.20 6.85 6.85 4.20 10.21 2.97 L10.71 2.85 C13.29 2.00 16.15 2.00 21.87 2.00 Z');"></div>
<span class="t" style="top:1966.93px;font-size:20.4px;color:#fff;left:1220.42px;transform:translateX(-50%);">m</span>
<div style="left:1272.62px;top:1942.00px;width:205.77px;height:50.00px;background:#ffd92e;clip-path:path('M21.40 0.00 L184.37 0.00 C190.53 0.00 193.61 0.00 196.39 0.92 L196.93 1.05 C200.55 2.37 203.40 5.22 204.72 8.84 L204.85 9.38 C205.77 12.16 205.77 15.24 205.77 21.40 L205.77 28.60 C205.77 34.76 205.77 37.84 204.85 40.62 L204.72 41.16 C203.40 44.78 200.55 47.63 196.93 48.95 L196.39 49.08 C193.61 50.00 190.53 50.00 184.37 50.00 L21.40 50.00 C15.24 50.00 12.16 50.00 9.38 49.08 L8.84 48.95 C5.22 47.63 2.37 44.78 1.05 41.16 L0.92 40.62 C0.00 37.84 0.00 34.76 0.00 28.60 L0.00 21.40 C0.00 15.24 0.00 12.16 0.92 9.38 L1.05 8.84 C2.37 5.22 5.22 2.37 8.84 1.05 L9.38 0.92 C12.16 0.00 15.24 0.00 21.40 0.00 Z');"></div>
<div style="left:1478.98px;top:1941.00px;width:103.78px;height:52.00px;background:#040404;clip-path:path('M22.93 0.00 L80.85 0.00 C87.46 0.00 90.76 0.00 93.74 0.98 L94.31 1.12 C98.19 2.54 101.25 5.59 102.66 9.47 L102.80 10.05 C103.78 13.03 103.78 16.33 103.78 22.93 L103.78 29.07 C103.78 35.67 103.78 38.97 102.80 41.95 L102.66 42.53 C101.25 46.41 98.19 49.46 94.31 50.88 L93.74 51.02 C90.76 52.00 87.46 52.00 80.85 52.00 L22.93 52.00 C16.33 52.00 13.03 52.00 10.05 51.02 L9.47 50.88 C5.59 49.46 2.54 46.41 1.12 42.53 L0.98 41.95 C0.00 38.97 0.00 35.67 0.00 29.07 L0.00 22.93 C0.00 16.33 0.00 13.03 0.98 10.05 L1.12 9.47 C2.54 5.59 5.59 2.54 9.47 1.12 L10.05 0.98 C13.03 0.00 16.33 0.00 22.93 0.00 Z');"></div>
<div style="left:1478.98px;top:1941.00px;width:103.78px;height:52.00px;background:#58585c;clip-path:path(evenodd,'M22.93 0.00 L80.85 0.00 C87.46 0.00 90.76 0.00 93.74 0.98 L94.31 1.12 C98.19 2.54 101.25 5.59 102.66 9.47 L102.80 10.05 C103.78 13.03 103.78 16.33 103.78 22.93 L103.78 29.07 C103.78 35.67 103.78 38.97 102.80 41.95 L102.66 42.53 C101.25 46.41 98.19 49.46 94.31 50.88 L93.74 51.02 C90.76 52.00 87.46 52.00 80.85 52.00 L22.93 52.00 C16.33 52.00 13.03 52.00 10.05 51.02 L9.47 50.88 C5.59 49.46 2.54 46.41 1.12 42.53 L0.98 41.95 C0.00 38.97 0.00 35.67 0.00 29.07 L0.00 22.93 C0.00 16.33 0.00 13.03 0.98 10.05 L1.12 9.47 C2.54 5.59 5.59 2.54 9.47 1.12 L10.05 0.98 C13.03 0.00 16.33 0.00 22.93 0.00 Z M21.87 2.00 L81.91 2.00 C87.63 2.00 90.50 2.00 93.08 2.85 L93.58 2.97 C96.94 4.20 99.59 6.85 100.81 10.21 L100.93 10.71 C101.78 13.29 101.78 16.15 101.78 21.87 L101.78 30.13 C101.78 35.85 101.78 38.71 100.93 41.29 L100.81 41.79 C99.59 45.15 96.94 47.80 93.58 49.03 L93.08 49.15 C90.50 50.00 87.63 50.00 81.91 50.00 L21.87 50.00 C16.15 50.00 13.29 50.00 10.71 49.15 L10.21 49.03 C6.85 47.80 4.20 45.15 2.97 41.79 L2.85 41.29 C2.00 38.71 2.00 35.85 2.00 30.13 L2.00 21.87 C2.00 16.15 2.00 13.29 2.85 10.71 L2.97 10.21 C4.20 6.85 6.85 4.20 10.21 2.97 L10.71 2.85 C13.29 2.00 16.15 2.00 21.87 2.00 Z');"></div>
<div style="left:1582.77px;top:1942.00px;width:309.15px;height:50.00px;background:#ffd92e;clip-path:path('M21.40 0.00 L287.75 0.00 C293.91 0.00 297.00 0.00 299.77 0.92 L300.31 1.05 C303.93 2.37 306.79 5.22 308.11 8.84 L308.24 9.38 C309.15 12.16 309.15 15.24 309.15 21.40 L309.15 28.60 C309.15 34.76 309.15 37.84 308.24 40.62 L308.11 41.16 C306.79 44.78 303.93 47.63 300.31 48.95 L299.77 49.08 C297.00 50.00 293.91 50.00 287.75 50.00 L21.40 50.00 C15.24 50.00 12.16 50.00 9.38 49.08 L8.84 48.95 C5.22 47.63 2.37 44.78 1.05 41.16 L0.92 40.62 C0.00 37.84 0.00 34.76 0.00 28.60 L0.00 21.40 C0.00 15.24 0.00 12.16 0.92 9.38 L1.05 8.84 C2.37 5.22 5.22 2.37 8.84 1.05 L9.38 0.92 C12.16 0.00 15.24 0.00 21.40 0.00 Z');"></div>
<div style="left:1892.52px;top:1941.00px;width:103.78px;height:52.00px;background:#040404;clip-path:path('M22.93 0.00 L80.85 0.00 C87.46 0.00 90.76 0.00 93.74 0.98 L94.31 1.12 C98.19 2.54 101.25 5.59 102.66 9.47 L102.80 10.05 C103.78 13.03 103.78 16.33 103.78 22.93 L103.78 29.07 C103.78 35.67 103.78 38.97 102.80 41.95 L102.66 42.53 C101.25 46.41 98.19 49.46 94.31 50.88 L93.74 51.02 C90.76 52.00 87.46 52.00 80.85 52.00 L22.93 52.00 C16.33 52.00 13.03 52.00 10.05 51.02 L9.47 50.88 C5.59 49.46 2.54 46.41 1.12 42.53 L0.98 41.95 C0.00 38.97 0.00 35.67 0.00 29.07 L0.00 22.93 C0.00 16.33 0.00 13.03 0.98 10.05 L1.12 9.47 C2.54 5.59 5.59 2.54 9.47 1.12 L10.05 0.98 C13.03 0.00 16.33 0.00 22.93 0.00 Z');"></div>
<div style="left:1892.52px;top:1941.00px;width:103.78px;height:52.00px;background:#58585c;clip-path:path(evenodd,'M22.93 0.00 L80.85 0.00 C87.46 0.00 90.76 0.00 93.74 0.98 L94.31 1.12 C98.19 2.54 101.25 5.59 102.66 9.47 L102.80 10.05 C103.78 13.03 103.78 16.33 103.78 22.93 L103.78 29.07 C103.78 35.67 103.78 38.97 102.80 41.95 L102.66 42.53 C101.25 46.41 98.19 49.46 94.31 50.88 L93.74 51.02 C90.76 52.00 87.46 52.00 80.85 52.00 L22.93 52.00 C16.33 52.00 13.03 52.00 10.05 51.02 L9.47 50.88 C5.59 49.46 2.54 46.41 1.12 42.53 L0.98 41.95 C0.00 38.97 0.00 35.67 0.00 29.07 L0.00 22.93 C0.00 16.33 0.00 13.03 0.98 10.05 L1.12 9.47 C2.54 5.59 5.59 2.54 9.47 1.12 L10.05 0.98 C13.03 0.00 16.33 0.00 22.93 0.00 Z M21.87 2.00 L81.91 2.00 C87.63 2.00 90.50 2.00 93.08 2.85 L93.58 2.97 C96.94 4.20 99.59 6.85 100.81 10.21 L100.93 10.71 C101.78 13.29 101.78 16.15 101.78 21.87 L101.78 30.13 C101.78 35.85 101.78 38.71 100.93 41.29 L100.81 41.79 C99.59 45.15 96.94 47.80 93.58 49.03 L93.08 49.15 C90.50 50.00 87.63 50.00 81.91 50.00 L21.87 50.00 C16.15 50.00 13.29 50.00 10.71 49.15 L10.21 49.03 C6.85 47.80 4.20 45.15 2.97 41.79 L2.85 41.29 C2.00 38.71 2.00 35.85 2.00 30.13 L2.00 21.87 C2.00 16.15 2.00 13.29 2.85 10.71 L2.97 10.21 C4.20 6.85 6.85 4.20 10.21 2.97 L10.71 2.85 C13.29 2.00 16.15 2.00 21.87 2.00 Z');"></div>
<span class="t" style="top:2013.55px;font-size:23.8px;color:#cfcfd2;-webkit-text-stroke:0.45px #cfcfd2;left:289.96px;transform:translateX(-50%);">1</span>
<span class="t" style="top:2013.55px;font-size:23.8px;color:#cfcfd2;-webkit-text-stroke:0.45px #cfcfd2;left:496.73px;transform:translateX(-50%);">2</span>
<span class="t" style="top:2013.55px;font-size:23.8px;color:#cfcfd2;-webkit-text-stroke:0.45px #cfcfd2;left:703.50px;transform:translateX(-50%);">3</span>
<span class="t" style="top:2013.55px;font-size:23.8px;color:#cfcfd2;-webkit-text-stroke:0.45px #cfcfd2;left:806.88px;transform:translateX(-50%);">4</span>
<span class="t" style="top:2013.55px;font-size:23.8px;color:#cfcfd2;-webkit-text-stroke:0.45px #cfcfd2;left:1013.65px;transform:translateX(-50%);">5</span>
<span class="t" style="top:2013.55px;font-size:23.8px;color:#cfcfd2;-webkit-text-stroke:0.45px #cfcfd2;left:1220.42px;transform:translateX(-50%);">6</span>
<span class="t" style="top:2013.55px;font-size:23.8px;color:#cfcfd2;-webkit-text-stroke:0.45px #cfcfd2;left:1427.19px;transform:translateX(-50%);">7</span>
<span class="t" style="top:2013.55px;font-size:23.8px;color:#cfcfd2;-webkit-text-stroke:0.45px #cfcfd2;left:1530.58px;transform:translateX(-50%);">1</span>
<span class="t" style="top:2013.55px;font-size:23.8px;color:#cfcfd2;-webkit-text-stroke:0.45px #cfcfd2;left:1737.35px;transform:translateX(-50%);">2</span>
<span class="t" style="top:2013.55px;font-size:23.8px;color:#cfcfd2;-webkit-text-stroke:0.45px #cfcfd2;left:1944.12px;transform:translateX(-50%);">3</span>
<span class="t" style="top:2013.55px;font-size:23.8px;color:#cfcfd2;-webkit-text-stroke:0.45px #cfcfd2;left:2047.50px;transform:translateX(-50%);">4</span>
<span class="t" style="top:2013.55px;font-size:23.8px;color:#cfcfd2;-webkit-text-stroke:0.45px #cfcfd2;left:2254.27px;transform:translateX(-50%);">5</span>
<span class="t" style="top:2013.55px;font-size:23.8px;color:#cfcfd2;-webkit-text-stroke:0.45px #cfcfd2;left:2461.04px;transform:translateX(-50%);">6</span>
<span class="t" style="top:2013.55px;font-size:23.8px;color:#cfcfd2;-webkit-text-stroke:0.45px #cfcfd2;left:2667.81px;transform:translateX(-50%);">7</span>
</section>
<svg style="left:2690.00px;top:2000.00px;" width="62" height="64" viewBox="0 0 62 64"><path d="M51 11.5 C47 30 32 46 10.5 50.5" fill="none" stroke="#8a8a8c" stroke-width="6" stroke-linecap="round"/></svg>
</div></body></html>
